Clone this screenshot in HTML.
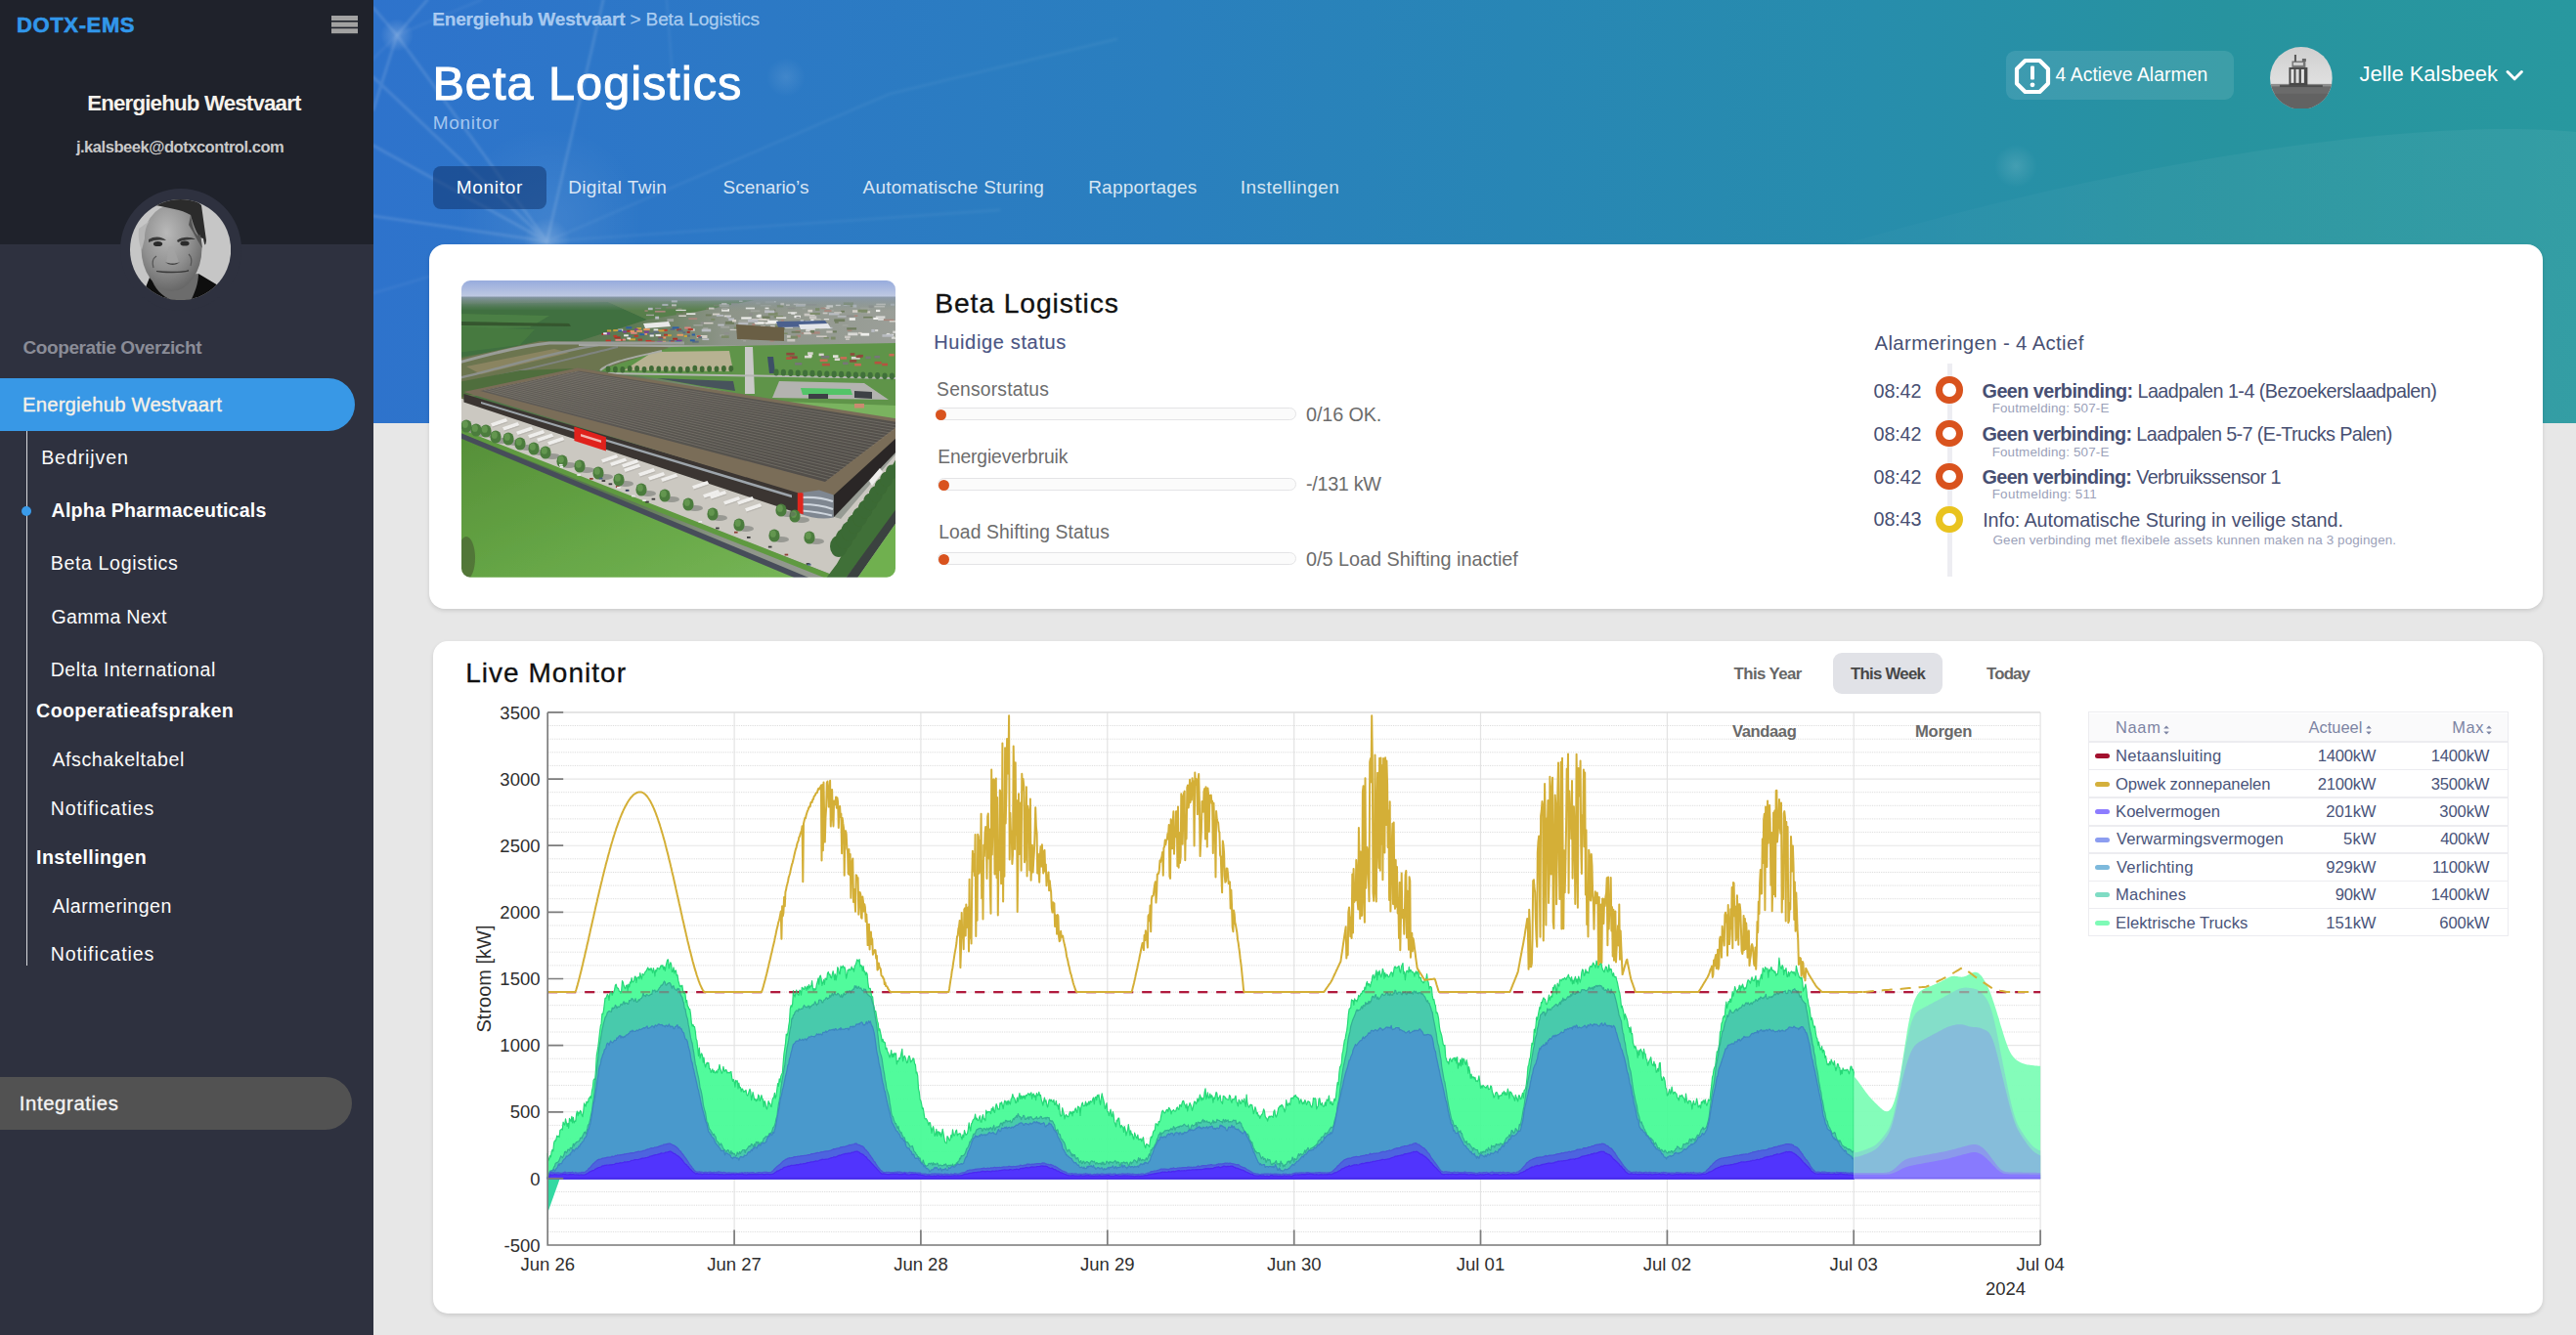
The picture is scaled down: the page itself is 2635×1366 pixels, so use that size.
<!DOCTYPE html>
<html lang="nl"><head><meta charset="utf-8"><title>DOTX-EMS - Beta Logistics Monitor</title>
<style>
html,body{margin:0;padding:0;}
body{width:2635px;height:1366px;overflow:hidden;background:#e7e7e7;font-family:"Liberation Sans",sans-serif;position:relative;}
.t{position:absolute;white-space:nowrap;}
.abs{position:absolute;}
.card{position:absolute;background:#fff;border-radius:15px;box-shadow:0 2px 4px rgba(0,0,0,0.12);}
.bar{position:absolute;height:10.6px;border:1.3px solid #e4e4e6;border-radius:8px;background:#fbfbfb;}
.dot{position:absolute;width:11px;height:11px;border-radius:50%;background:#d9531e;}
.ring{position:absolute;width:13.4px;height:13.4px;border-radius:50%;border:7px solid #d9531e;background:#fff;}
.sw{position:absolute;left:2143px;width:15px;height:5px;border-radius:3px;}
.hl{position:absolute;left:2136px;width:430px;height:1.6px;background:#ececf0;}
</style></head><body>

<div class="abs" style="left:382px;top:0;width:2253px;height:433px;background:linear-gradient(90deg,#2e73cc 0%,#2c79c5 18%,#2a7fbe 36%,#2886b5 52%,#278dac 68%,#27939f 84%,#28989f 100%);overflow:hidden;">
<svg width="2253" height="433" viewBox="0 0 2253 433" style="position:absolute;left:0;top:0">
<defs><radialGradient id="gl"><stop offset="0" stop-color="#fff" stop-opacity="0.22"/><stop offset="1" stop-color="#fff" stop-opacity="0"/></radialGradient>
<linearGradient id="sw1" x1="0" y1="0" x2="1" y2="0"><stop offset="0" stop-color="#fff" stop-opacity="0"/><stop offset="0.6" stop-color="#fff" stop-opacity="0.04"/><stop offset="1" stop-color="#fff" stop-opacity="0.055"/></linearGradient></defs>
<filter id="lb" x="-5%" y="-5%" width="110%" height="110%"><feGaussianBlur stdDeviation="1.1"/></filter><circle cx="180" cy="225" r="95" fill="url(#gl)" opacity="0.4"/><g stroke="#fff" fill="none" stroke-linecap="round" filter="url(#lb)">
<path d="M24,36 L177.5,247 M24,36 L55,0 M24,36 L0,8 M24,36 L0,112 M177.5,247 L235,0 M177.5,247 L0,79 M177.5,247 L0,149 M177.5,247 L0,221" stroke-opacity="0.11" stroke-width="3.2"/>
<path d="M177.5,247 L528,96 L760,40 M177.5,247 L640,215 M24,36 L0,60 M24,36 L110,0 M300,0 L306,80 M177.5,247 L120,433 M177.5,247 L250,433 M177.5,247 L0,300 M177.5,247 L420,433" stroke-opacity="0.045" stroke-width="3"/>
</g>
<circle cx="24" cy="36" r="17" fill="url(#gl)"/><circle cx="177.5" cy="247" r="24" fill="url(#gl)"/><circle cx="422" cy="79" r="20" fill="url(#gl)" opacity="0.45"/><circle cx="1680" cy="170" r="22" fill="url(#gl)" opacity="0.6"/>
<path d="M1470,260 C1800,160 2100,120 2253,135 L2253,433 L1300,433 Z" fill="url(#sw1)"/>
</svg>
</div>
<div class="t" style="left:442.16px;top:9.92px;font-size:19.00px;line-height:19.00px;letter-spacing:-0.151px;color:rgba(214,232,255,0.72);-webkit-text-stroke:0.25px rgba(214,232,255,0.72);"><span style="font-weight:700">Energiehub Westvaart</span><span style="font-weight:400"> &gt; Beta Logistics</span></div>
<div class="t" style="left:442.40px;top:60.96px;font-size:48.60px;line-height:48.60px;letter-spacing:1.033px;color:#fff;-webkit-text-stroke:1.00px #fff;">Beta Logistics</div>
<div class="t" style="left:442.64px;top:116.22px;font-size:19.00px;line-height:19.00px;letter-spacing:0.744px;color:rgba(214,232,255,0.72);">Monitor</div>
<div class="abs" style="left:443px;top:169.5px;width:116px;height:44px;border-radius:8px;background:rgba(16,52,112,0.55);"></div>
<div class="t" style="left:466.68px;top:182.42px;font-size:19.00px;line-height:19.00px;letter-spacing:0.734px;color:#fff;">Monitor</div>
<div class="t" style="left:581.16px;top:182.42px;font-size:19.00px;line-height:19.00px;letter-spacing:0.354px;color:rgba(255,255,255,0.82);">Digital Twin</div>
<div class="t" style="left:739.62px;top:182.42px;font-size:19.00px;line-height:19.00px;letter-spacing:-0.061px;color:rgba(255,255,255,0.82);">Scenario’s</div>
<div class="t" style="left:882.50px;top:182.42px;font-size:19.00px;line-height:19.00px;letter-spacing:0.253px;color:rgba(255,255,255,0.82);">Automatische Sturing</div>
<div class="t" style="left:1113.16px;top:182.42px;font-size:19.00px;line-height:19.00px;letter-spacing:0.242px;color:rgba(255,255,255,0.82);">Rapportages</div>
<div class="t" style="left:1268.72px;top:182.42px;font-size:19.00px;line-height:19.00px;letter-spacing:0.452px;color:rgba(255,255,255,0.82);">Instellingen</div>
<div class="abs" style="left:2052px;top:52px;width:232.5px;height:50px;border-radius:9px;background:rgba(255,255,255,0.10);"></div>
<svg class="abs" style="left:2058px;top:57px" width="42" height="42" viewBox="0 0 42 42">
<polygon points="13.6,5 28.4,5 37,13.6 37,28.4 28.4,37 13.6,37 5,28.4 5,13.6" fill="none" stroke="#fff" stroke-width="4.2" stroke-linejoin="round"/>
<rect x="19" y="10.5" width="4" height="14" rx="1" fill="#fff"/><circle cx="21" cy="29.8" r="2.4" fill="#fff"/></svg>
<div class="t" style="left:2102.52px;top:66.96px;font-size:19.30px;line-height:19.30px;letter-spacing:0.087px;color:#fff;">4 Actieve Alarmen</div>
<div class="t" style="left:2413.54px;top:64.68px;font-size:22.00px;line-height:22.00px;letter-spacing:-0.034px;color:#fff;">Jelle Kalsbeek</div>
<svg class="abs" style="left:2560px;top:68px" width="24" height="18" viewBox="0 0 24 18"><path d="M5,5.5 L12.2,12.8 L19.4,5.5" fill="none" stroke="#fff" stroke-width="3" stroke-linecap="round" stroke-linejoin="round"/></svg>
<svg class="abs" style="left:2321.9px;top:47.7px" width="63.8" height="63.8" viewBox="0 0 64 64">
<defs><clipPath id="uc"><circle cx="32" cy="32" r="32"/></clipPath><linearGradient id="usky" x1="0" y1="0" x2="0" y2="1"><stop offset="0" stop-color="#cfcfcf"/><stop offset="1" stop-color="#ececec"/></linearGradient></defs>
<g clip-path="url(#uc)"><rect width="64" height="64" fill="url(#usky)"/>
<rect x="0" y="39.5" width="64" height="25" fill="#6b6b6b"/><rect x="0" y="38" width="64" height="2.5" fill="#8d8d8d"/><rect x="0" y="48" width="64" height="16" fill="#5c5c5c" opacity="0.6"/>
<rect x="19.5" y="21" width="19" height="18.5" fill="#4a4a4a"/><rect x="21.5" y="23" width="3" height="14" fill="#e4e4e4"/><rect x="26.5" y="23" width="3.2" height="14" fill="#dcdcdc"/><rect x="32" y="23" width="3" height="14" fill="#e4e4e4"/>
<rect x="22.5" y="14.5" width="14" height="6.5" fill="#777"/><rect x="24" y="16" width="10" height="3" fill="#d0d0d0"/><rect x="25" y="8" width="2" height="7" fill="#555"/><rect x="33" y="12" width="4" height="3" fill="#666"/>
<rect x="10" y="39" width="44" height="2.2" fill="#3e3e3e" opacity="0.7"/>
</g></svg>
<div class="abs" style="left:0;top:0;width:382px;height:1366px;background:#2e313f;"></div>
<div class="abs" style="left:0;top:0;width:382px;height:250px;background:#1f222b;"></div>
<div class="t" style="left:17.10px;top:14.98px;font-size:22.00px;line-height:22.00px;letter-spacing:0.612px;font-weight:700;color:#3197ea;-webkit-text-stroke:0.60px #3197ea;">DOTX-EMS</div>
<div class="abs" style="left:339px;top:16px;width:27px;height:5px;background:#a2a2a2;box-shadow:0 6.6px 0 #a2a2a2,0 13.2px 0 #a2a2a2;"></div>
<div class="t" style="left:89.18px;top:95.12px;font-size:22.30px;line-height:22.30px;letter-spacing:-0.828px;font-weight:700;color:#f6f2ec;">Energiehub Westvaart</div>
<div class="t" style="left:77.92px;top:142.65px;font-size:16.60px;line-height:16.60px;letter-spacing:-0.504px;font-weight:700;color:#c9c9c9;">j.kalsbeek@dotxcontrol.com</div>
<div class="abs" style="left:122.5px;top:193px;width:124.5px;height:124.5px;border-radius:50%;background:#2e313f;"></div>
<svg class="abs" style="left:132.9px;top:203.6px" width="103.2" height="103.2" viewBox="0 0 103.2 103.2">
<defs><clipPath id="fc"><circle cx="51.6" cy="51.6" r="51.6"/></clipPath>
<radialGradient id="fg" cx="0.42" cy="0.32" r="0.75"><stop offset="0" stop-color="#b9b9b9"/><stop offset="0.55" stop-color="#909090"/><stop offset="1" stop-color="#5e5e5e"/></radialGradient></defs>
<g clip-path="url(#fc)"><rect width="104" height="104" fill="#c6c6c6"/>
<path d="M14,95 L20,80 L40,90 L60,96 L70,76 L90,88 L104,92 L104,104 L0,104 Z" fill="#0e0e0e"/>
<path d="M22,80 C24,92 36,102 46,104 L62,104 C66,96 70,86 70,76 Z" fill="#6c6c6c"/>
<ellipse cx="42.5" cy="50" rx="31" ry="44" fill="url(#fg)"/>
<path d="M9,30 C8,40 10,48 12,52 L15,40 C15,32 17,26 20,22 Z" fill="#b5b5b5"/>
<path d="M26,6 C40,-3 66,-3 73,6 L78,42 C77,50 76,46 75,40 C70,40 66,30 62,16 C52,10 40,9 26,6 Z" fill="#2b2b2b"/>
<path d="M62,16 C64,30 68,40 72,36 L74,50 C70,44 66,36 60,26 Z" fill="#555"/>
<path d="M19,41 C25,37 33,38 37,42 C31,41 25,41 19,44 Z" fill="#3a3a3a"/><path d="M48,42 C53,38 62,38 67,41 C61,41 55,41 49,44 Z" fill="#3a3a3a"/>
<ellipse cx="28.5" cy="45.5" rx="4.6" ry="2.6" fill="#2a2a2a"/><ellipse cx="56" cy="45" rx="4.6" ry="2.6" fill="#2a2a2a"/>
<path d="M40,48 L37,64 C40,67 46,67 50,64 L44,48 Z" fill="#a4a4a4" opacity="0.7"/><path d="M36,64 C40,68 47,68 51,64 C47,66 40,66 36,64Z" fill="#444"/>
<path d="M27,73.5 C35,75.2 52,75.2 60,73 C52,74.6 35,74.6 27,73.5 Z" fill="#383838" stroke="#383838" stroke-width="1.1"/>
<path d="M24,70 C22,64 24,60 27,58" stroke="#555" stroke-width="1.2" fill="none"/><path d="M62,68 C64,62 62,58 60,56" stroke="#555" stroke-width="1.2" fill="none"/>
</g></svg>
<div class="t" style="left:23.58px;top:345.52px;font-size:19.00px;line-height:19.00px;letter-spacing:-0.430px;font-weight:700;color:#8a8c97;">Cooperatie Overzicht</div>
<div class="abs" style="left:0;top:386.7px;width:362.7px;height:54px;border-radius:0 27px 27px 0;background:#3898e6;"></div>
<div class="t" style="left:23.06px;top:403.82px;font-size:20.30px;line-height:20.30px;letter-spacing:0.182px;color:#f6f1e8;-webkit-text-stroke:0.35px #f6f1e8;">Energiehub Westvaart</div>
<div class="abs" style="left:26.6px;top:440.7px;width:1.4px;height:547.2px;background:#d8d9dd;"></div>
<div class="abs" style="left:22.4px;top:518px;width:10px;height:10px;border-radius:50%;background:#3a9bea;"></div>
<div class="t" style="left:42.18px;top:459.21px;font-size:19.60px;line-height:19.60px;letter-spacing:0.873px;color:#fbfbfb;">Bedrijven</div>
<div class="t" style="left:52.60px;top:512.61px;font-size:19.60px;line-height:19.60px;letter-spacing:0.205px;font-weight:700;color:#fff;">Alpha Pharmaceuticals</div>
<div class="t" style="left:51.70px;top:567.11px;font-size:19.60px;line-height:19.60px;letter-spacing:0.629px;color:#fbfbfb;">Beta Logistics</div>
<div class="t" style="left:52.60px;top:621.61px;font-size:19.60px;line-height:19.60px;letter-spacing:0.272px;color:#fbfbfb;">Gamma Next</div>
<div class="t" style="left:51.70px;top:675.51px;font-size:19.60px;line-height:19.60px;letter-spacing:0.534px;color:#fbfbfb;">Delta International</div>
<div class="t" style="left:37.12px;top:717.91px;font-size:19.60px;line-height:19.60px;letter-spacing:0.373px;font-weight:700;color:#fff;">Cooperatieafspraken</div>
<div class="t" style="left:53.48px;top:767.51px;font-size:19.60px;line-height:19.60px;letter-spacing:0.568px;color:#fbfbfb;">Afschakeltabel</div>
<div class="t" style="left:51.68px;top:818.41px;font-size:19.60px;line-height:19.60px;letter-spacing:0.897px;color:#fbfbfb;">Notificaties</div>
<div class="t" style="left:37.10px;top:868.11px;font-size:19.60px;line-height:19.60px;letter-spacing:0.349px;font-weight:700;color:#fff;">Instellingen</div>
<div class="t" style="left:53.48px;top:918.11px;font-size:19.60px;line-height:19.60px;letter-spacing:0.481px;color:#fbfbfb;">Alarmeringen</div>
<div class="t" style="left:51.68px;top:966.71px;font-size:19.60px;line-height:19.60px;letter-spacing:0.897px;color:#fbfbfb;">Notificaties</div>
<div class="abs" style="left:0;top:1101.5px;width:359.7px;height:54px;border-radius:0 27px 27px 0;background:#525252;"></div>
<div class="t" style="left:19.70px;top:1118.62px;font-size:20.30px;line-height:20.30px;letter-spacing:0.643px;color:#f4f4f4;-webkit-text-stroke:0.35px #f4f4f4;">Integraties</div>
<div class="card" style="left:438.8px;top:249.8px;width:2162.3px;height:373.2px;border-radius:16px;"></div>
<svg class="abs" style="left:472px;top:287.2px" width="444" height="303.7" viewBox="0 0 444 303.7">
<defs><clipPath id="wc"><rect width="444" height="303.7" rx="9" ry="9"/></clipPath><filter id="wb" x="-2%" y="-2%" width="104%" height="104%"><feGaussianBlur stdDeviation="0.55"/></filter><linearGradient id="wsky" x1="0" y1="0" x2="0" y2="1"><stop offset="0" stop-color="#90a6dc"/><stop offset="1" stop-color="#bfc9e2"/></linearGradient><linearGradient id="wland" x1="0" y1="0" x2="1" y2="0"><stop offset="0" stop-color="#4a7442"/><stop offset="0.4" stop-color="#5f7a54"/><stop offset="0.6" stop-color="#8d9488"/><stop offset="1" stop-color="#9b9f99"/></linearGradient><linearGradient id="whaze" x1="0" y1="0" x2="0" y2="1"><stop offset="0" stop-color="#8d9bb5"/><stop offset="1" stop-color="#7d8f86" stop-opacity="0"/></linearGradient><linearGradient id="wgr" x1="0" y1="0" x2="1" y2="1"><stop offset="0" stop-color="#568f38"/><stop offset="0.55" stop-color="#66a646"/><stop offset="1" stop-color="#76b556"/></linearGradient><linearGradient id="wroof" x1="0" y1="0" x2="1" y2="1"><stop offset="0" stop-color="#625e58"/><stop offset="1" stop-color="#4f4c48"/></linearGradient></defs>
<g clip-path="url(#wc)"><g filter="url(#wb)">
<rect x="-3" y="-3" width="450" height="310" fill="url(#wland)"/>
<polygon points="-3.0,24.0 150.0,22.0 190.0,40.0 120.0,62.0 -3.0,78.0" fill="#3f6f3f"/>
<polygon points="-3.0,34.0 90.0,36.0 70.0,48.0 -3.0,50.0" fill="#4b7f45"/>
<polygon points="-3.0,47.0 75.0,50.0 60.0,66.0 -3.0,74.0" fill="#467a40"/>
<polygon points="-3.0,42.0 110.0,44.0 112.0,47.0 -3.0,46.0" fill="#34562f"/>
<polygon points="150.0,22.0 300.0,20.0 240.0,32.0 190.0,40.0" fill="#587f4c"/>
<rect x="303.1" y="42.4" width="10.4" height="2.0" fill="#d3cfc8"/>
<rect x="408.2" y="27.6" width="9.4" height="2.1" fill="#a0a49d"/>
<rect x="392.0" y="23.8" width="5.4" height="1.4" fill="#d9d9d6"/>
<rect x="340.4" y="35.8" width="6.6" height="2.5" fill="#efefec"/>
<rect x="347.6" y="53.3" width="3.5" height="1.3" fill="#a9867c"/>
<rect x="341.5" y="51.1" width="5.6" height="2.3" fill="#a9867c"/>
<rect x="320.5" y="45.6" width="7.0" height="2.4" fill="#7b8a68"/>
<rect x="355.9" y="36.3" width="7.4" height="2.9" fill="#c9c7c2"/>
<rect x="369.7" y="32.6" width="4.8" height="1.7" fill="#c9c7c2"/>
<rect x="332.0" y="24.3" width="3.9" height="1.7" fill="#c9c7c2"/>
<rect x="435.0" y="53.9" width="3.0" height="1.6" fill="#d9d9d6"/>
<rect x="307.7" y="59.2" width="6.2" height="1.3" fill="#a9867c"/>
<rect x="388.2" y="30.8" width="3.7" height="1.8" fill="#6f7d5e"/>
<rect x="382.8" y="24.7" width="5.0" height="1.4" fill="#d9d9d6"/>
<rect x="306.3" y="39.5" width="8.5" height="1.5" fill="#d3cfc8"/>
<rect x="234.8" y="49.3" width="4.0" height="2.4" fill="#c9c7c2"/>
<rect x="288.1" y="59.6" width="3.0" height="2.8" fill="#a0a49d"/>
<rect x="264.4" y="55.4" width="4.7" height="1.9" fill="#a0a49d"/>
<rect x="352.5" y="24.0" width="10.9" height="1.6" fill="#8e8f8c"/>
<rect x="401.7" y="35.4" width="3.6" height="1.6" fill="#a9867c"/>
<rect x="189.0" y="34.7" width="8.0" height="1.4" fill="#a0a49d"/>
<rect x="311.3" y="43.0" width="9.9" height="1.5" fill="#efefec"/>
<rect x="266.1" y="29.1" width="7.9" height="2.5" fill="#efefec"/>
<rect x="378.0" y="57.6" width="4.6" height="2.9" fill="#7b8a68"/>
<rect x="342.5" y="36.9" width="3.8" height="1.3" fill="#8e8f8c"/>
<rect x="247.2" y="48.2" width="5.1" height="2.7" fill="#a0a49d"/>
<rect x="313.2" y="40.8" width="10.4" height="3.0" fill="#efefec"/>
<rect x="244.6" y="42.4" width="9.8" height="2.3" fill="#8e8f8c"/>
<rect x="240.4" y="56.6" width="9.0" height="1.3" fill="#6f7d5e"/>
<rect x="301.3" y="22.4" width="4.4" height="1.9" fill="#a0a49d"/>
<rect x="439.0" y="23.7" width="4.1" height="2.0" fill="#b9bcc2"/>
<rect x="356.5" y="47.6" width="7.7" height="1.5" fill="#d9d9d6"/>
<rect x="426.1" y="39.0" width="5.9" height="1.8" fill="#d9d9d6"/>
<rect x="310.9" y="49.2" width="5.6" height="3.0" fill="#c9c7c2"/>
<rect x="303.3" y="34.7" width="3.4" height="2.9" fill="#efefec"/>
<rect x="392.0" y="56.6" width="5.8" height="2.4" fill="#c9c7c2"/>
<rect x="412.4" y="36.7" width="9.3" height="2.8" fill="#a0a49d"/>
<rect x="284.0" y="20.5" width="3.6" height="1.4" fill="#c9c7c2"/>
<rect x="444.3" y="55.2" width="8.8" height="1.9" fill="#a0a49d"/>
<rect x="304.5" y="38.5" width="7.3" height="2.1" fill="#d3cfc8"/>
<rect x="310.5" y="29.2" width="8.6" height="2.1" fill="#a0a49d"/>
<rect x="357.3" y="39.5" width="10.2" height="1.9" fill="#efefec"/>
<rect x="362.0" y="28.1" width="4.4" height="2.8" fill="#7b8a68"/>
<rect x="315.1" y="29.7" width="6.2" height="1.7" fill="#6f7d5e"/>
<rect x="394.8" y="50.2" width="4.6" height="1.6" fill="#a9867c"/>
<rect x="337.2" y="32.7" width="4.1" height="2.1" fill="#d9d9d6"/>
<rect x="370.6" y="58.0" width="5.2" height="1.5" fill="#7b8a68"/>
<rect x="308.0" y="57.0" width="9.6" height="1.9" fill="#d3cfc8"/>
<rect x="313.9" y="32.6" width="9.7" height="3.0" fill="#7b8a68"/>
<rect x="268.6" y="53.1" width="5.2" height="2.3" fill="#8e8f8c"/>
<rect x="333.9" y="32.4" width="9.3" height="1.2" fill="#efefec"/>
<rect x="290.8" y="27.6" width="9.2" height="1.7" fill="#efefec"/>
<rect x="393.0" y="59.4" width="3.9" height="1.4" fill="#d3cfc8"/>
<rect x="356.0" y="52.3" width="10.7" height="2.4" fill="#a9867c"/>
<rect x="400.0" y="30.2" width="8.7" height="2.6" fill="#d3cfc8"/>
<rect x="371.4" y="27.2" width="5.2" height="1.8" fill="#d3cfc8"/>
<rect x="315.6" y="59.9" width="4.3" height="2.7" fill="#a9867c"/>
<rect x="373.5" y="25.2" width="6.6" height="2.3" fill="#d9d9d6"/>
<rect x="283.3" y="42.8" width="10.0" height="2.6" fill="#b9bcc2"/>
<rect x="306.0" y="46.1" width="4.6" height="2.5" fill="#c9c7c2"/>
<rect x="240.7" y="56.0" width="10.8" height="3.0" fill="#d3cfc8"/>
<rect x="439.9" y="57.3" width="5.1" height="2.5" fill="#d9d9d6"/>
<rect x="276.0" y="23.3" width="6.5" height="2.2" fill="#8e8f8c"/>
<rect x="312.2" y="21.1" width="9.5" height="1.3" fill="#d9d9d6"/>
<rect x="230.1" y="33.4" width="9.3" height="1.5" fill="#efefec"/>
<rect x="446.0" y="56.0" width="7.1" height="2.4" fill="#7b8a68"/>
<rect x="431.8" y="39.7" width="10.6" height="1.4" fill="#a9867c"/>
<rect x="299.7" y="42.4" width="9.6" height="2.2" fill="#efefec"/>
<rect x="321.4" y="53.7" width="7.5" height="1.8" fill="#6f7d5e"/>
<rect x="434.2" y="54.8" width="7.9" height="1.7" fill="#efefec"/>
<rect x="437.8" y="41.0" width="7.6" height="1.6" fill="#d3cfc8"/>
<rect x="214.8" y="20.2" width="6.0" height="2.2" fill="#d9d9d6"/>
<rect x="319.7" y="36.0" width="9.4" height="2.2" fill="#7b8a68"/>
<rect x="209.3" y="26.7" width="10.4" height="2.0" fill="#6f7d5e"/>
<rect x="255.3" y="38.9" width="4.0" height="2.0" fill="#7b8a68"/>
<rect x="322.0" y="24.3" width="6.4" height="1.3" fill="#8e8f8c"/>
<rect x="190.9" y="27.8" width="4.8" height="2.4" fill="#b9bcc2"/>
<rect x="373.9" y="29.8" width="7.0" height="2.1" fill="#a0a49d"/>
<rect x="250.4" y="27.9" width="7.2" height="2.0" fill="#6f7d5e"/>
<rect x="350.2" y="53.0" width="7.9" height="2.2" fill="#d3cfc8"/>
<rect x="351.6" y="41.2" width="9.8" height="2.3" fill="#efefec"/>
<rect x="245.7" y="49.6" width="9.5" height="2.8" fill="#b9bcc2"/>
<rect x="342.4" y="55.6" width="4.6" height="2.6" fill="#a9867c"/>
<rect x="416.6" y="25.4" width="4.9" height="2.5" fill="#8e8f8c"/>
<rect x="286.2" y="37.4" width="10.5" height="2.2" fill="#efefec"/>
<rect x="237.4" y="45.1" width="9.4" height="1.4" fill="#a0a49d"/>
<rect x="363.1" y="56.5" width="10.7" height="1.4" fill="#d3cfc8"/>
<rect x="350.6" y="33.7" width="11.0" height="2.7" fill="#c9c7c2"/>
<rect x="310.8" y="21.0" width="9.1" height="2.3" fill="#a0a49d"/>
<rect x="310.6" y="27.6" width="3.9" height="1.5" fill="#efefec"/>
<rect x="443.5" y="57.1" width="3.8" height="1.3" fill="#7b8a68"/>
<rect x="205.3" y="23.9" width="6.1" height="2.0" fill="#b9bcc2"/>
<rect x="297.3" y="44.0" width="3.1" height="2.5" fill="#a9867c"/>
<rect x="232.3" y="38.2" width="8.9" height="1.9" fill="#a9867c"/>
<rect x="342.9" y="23.8" width="9.3" height="1.8" fill="#c9c7c2"/>
<rect x="394.2" y="48.2" width="9.9" height="2.3" fill="#6f7d5e"/>
<rect x="333.7" y="27.6" width="7.7" height="1.8" fill="#8e8f8c"/>
<rect x="258.0" y="24.7" width="8.9" height="1.5" fill="#6f7d5e"/>
<rect x="219.8" y="33.2" width="7.3" height="1.9" fill="#6f7d5e"/>
<rect x="384.7" y="36.2" width="8.8" height="1.3" fill="#b9bcc2"/>
<rect x="263.7" y="24.0" width="10.1" height="3.0" fill="#a0a49d"/>
<rect x="197.9" y="30.9" width="10.7" height="1.7" fill="#a9867c"/>
<rect x="357.2" y="42.8" width="7.3" height="1.9" fill="#7b8a68"/>
<rect x="352.6" y="48.1" width="9.1" height="3.0" fill="#d9d9d6"/>
<rect x="215.0" y="24.3" width="4.9" height="2.0" fill="#d3cfc8"/>
<rect x="198.2" y="27.8" width="6.0" height="1.4" fill="#8e8f8c"/>
<rect x="257.0" y="33.6" width="7.3" height="1.9" fill="#d3cfc8"/>
<rect x="333.2" y="59.8" width="8.1" height="2.7" fill="#c9c7c2"/>
<rect x="328.4" y="46.7" width="10.6" height="1.9" fill="#efefec"/>
<rect x="285.7" y="58.8" width="9.8" height="2.2" fill="#a0a49d"/>
<rect x="294.8" y="41.1" width="7.8" height="1.9" fill="#8e8f8c"/>
<rect x="311.1" y="30.8" width="10.4" height="2.4" fill="#8e8f8c"/>
<rect x="337.9" y="45.3" width="6.3" height="2.4" fill="#d9d9d6"/>
<rect x="419.3" y="49.9" width="3.4" height="3.0" fill="#b9bcc2"/>
<rect x="297.1" y="39.1" width="10.8" height="1.6" fill="#d3cfc8"/>
<rect x="422.4" y="25.8" width="10.7" height="1.6" fill="#c9c7c2"/>
<rect x="198.2" y="36.7" width="3.9" height="2.8" fill="#b9bcc2"/>
<rect x="322.8" y="25.0" width="6.5" height="2.4" fill="#7b8a68"/>
<rect x="341.9" y="45.6" width="8.5" height="1.9" fill="#d3cfc8"/>
<rect x="397.7" y="25.5" width="5.3" height="1.4" fill="#7b8a68"/>
<rect x="389.7" y="45.0" width="5.9" height="1.7" fill="#a0a49d"/>
<rect x="367.4" y="27.6" width="5.2" height="1.6" fill="#a9867c"/>
<rect x="316.1" y="46.1" width="4.6" height="2.4" fill="#d9d9d6"/>
<rect x="187.5" y="30.4" width="3.2" height="1.3" fill="#a9867c"/>
<rect x="326.4" y="22.9" width="3.7" height="2.4" fill="#d3cfc8"/>
<rect x="246.3" y="59.3" width="6.9" height="1.8" fill="#b9bcc2"/>
<rect x="274.7" y="49.8" width="9.7" height="1.3" fill="#c9c7c2"/>
<rect x="301.7" y="52.9" width="9.7" height="2.6" fill="#7b8a68"/>
<rect x="295.8" y="30.3" width="9.5" height="1.9" fill="#a0a49d"/>
<rect x="269.9" y="41.9" width="9.0" height="2.9" fill="#6f7d5e"/>
<rect x="355.6" y="43.2" width="6.7" height="1.8" fill="#d3cfc8"/>
<rect x="311.5" y="47.4" width="5.4" height="2.6" fill="#c9c7c2"/>
<rect x="265.9" y="56.4" width="7.8" height="2.5" fill="#7b8a68"/>
<rect x="374.2" y="47.8" width="5.3" height="1.5" fill="#b9bcc2"/>
<rect x="356.5" y="33.1" width="10.3" height="1.8" fill="#7b8a68"/>
<rect x="333.6" y="56.7" width="10.5" height="2.8" fill="#7b8a68"/>
<rect x="323.4" y="59.7" width="6.7" height="1.6" fill="#d3cfc8"/>
<rect x="249.8" y="34.5" width="5.9" height="1.9" fill="#6f7d5e"/>
<rect x="337.6" y="51.8" width="8.9" height="1.9" fill="#6f7d5e"/>
<rect x="326.1" y="53.5" width="7.5" height="1.5" fill="#7b8a68"/>
<rect x="414.9" y="31.3" width="3.2" height="2.1" fill="#d3cfc8"/>
<rect x="226.4" y="31.8" width="3.2" height="2.7" fill="#6f7d5e"/>
<rect x="390.7" y="23.4" width="3.7" height="2.5" fill="#b9bcc2"/>
<rect x="354.4" y="29.8" width="4.8" height="2.6" fill="#d3cfc8"/>
<rect x="273.3" y="38.4" width="5.8" height="2.7" fill="#b9bcc2"/>
<rect x="360.5" y="39.7" width="7.3" height="2.5" fill="#a0a49d"/>
<rect x="423.8" y="36.4" width="9.6" height="2.4" fill="#d9d9d6"/>
<rect x="395.3" y="53.4" width="10.1" height="2.9" fill="#d9d9d6"/>
<rect x="321.7" y="48.4" width="9.4" height="2.0" fill="#6f7d5e"/>
<rect x="424.0" y="29.8" width="4.3" height="2.3" fill="#efefec"/>
<rect x="268.7" y="35.6" width="7.2" height="1.7" fill="#d9d9d6"/>
<rect x="308.0" y="49.2" width="5.4" height="1.5" fill="#efefec"/>
<rect x="423.1" y="50.1" width="3.1" height="2.1" fill="#d9d9d6"/>
<rect x="266.6" y="27.9" width="5.9" height="2.3" fill="#a0a49d"/>
<rect x="372.2" y="43.8" width="4.8" height="1.5" fill="#8e8f8c"/>
<rect x="290.0" y="56.4" width="10.5" height="2.3" fill="#d3cfc8"/>
<rect x="310.1" y="30.4" width="10.1" height="2.8" fill="#b9bcc2"/>
<rect x="357.3" y="50.9" width="3.7" height="2.8" fill="#6f7d5e"/>
<rect x="394.2" y="35.4" width="7.2" height="2.1" fill="#8e8f8c"/>
<rect x="390.6" y="22.3" width="10.4" height="2.8" fill="#7b8a68"/>
<rect x="421.3" y="38.0" width="5.0" height="2.0" fill="#efefec"/>
<rect x="293.5" y="50.9" width="4.2" height="2.8" fill="#d3cfc8"/>
<rect x="346.7" y="40.6" width="3.4" height="2.2" fill="#efefec"/>
<rect x="405.9" y="52.9" width="3.7" height="1.7" fill="#d3cfc8"/>
<rect x="210.4" y="39.2" width="6.7" height="2.9" fill="#a0a49d"/>
<rect x="326.8" y="40.2" width="3.2" height="1.5" fill="#a9867c"/>
<rect x="424.3" y="23.6" width="9.6" height="1.6" fill="#d3cfc8"/>
<rect x="292.8" y="39.8" width="10.6" height="2.9" fill="#b9bcc2"/>
<rect x="266.1" y="23.0" width="5.4" height="2.0" fill="#c9c7c2"/>
<rect x="278.9" y="47.5" width="3.8" height="1.9" fill="#7b8a68"/>
<rect x="379.9" y="51.4" width="4.0" height="2.0" fill="#6f7d5e"/>
<rect x="370.8" y="39.0" width="5.3" height="1.4" fill="#d9d9d6"/>
<rect x="408.4" y="53.8" width="8.8" height="2.8" fill="#efefec"/>
<rect x="260.8" y="35.0" width="7.3" height="1.7" fill="#b9bcc2"/>
<rect x="382.0" y="42.2" width="3.7" height="1.5" fill="#6f7d5e"/>
<rect x="375.9" y="33.2" width="10.6" height="2.2" fill="#b9bcc2"/>
<rect x="301.6" y="35.3" width="3.8" height="2.3" fill="#efefec"/>
<rect x="361.9" y="48.3" width="4.4" height="1.9" fill="#7b8a68"/>
<rect x="339.7" y="23.6" width="4.8" height="1.5" fill="#c9c7c2"/>
<rect x="298.2" y="50.8" width="5.7" height="2.7" fill="#d3cfc8"/>
<rect x="221.3" y="28.2" width="4.2" height="2.4" fill="#7b8a68"/>
<rect x="271.5" y="36.5" width="3.1" height="1.9" fill="#b9bcc2"/>
<rect x="441.3" y="51.6" width="8.3" height="2.3" fill="#d9d9d6"/>
<rect x="253.0" y="27.6" width="5.5" height="2.0" fill="#d3cfc8"/>
<rect x="283.6" y="40.4" width="9.3" height="2.7" fill="#a0a49d"/>
<rect x="371.2" y="30.2" width="7.3" height="1.7" fill="#a9867c"/>
<rect x="277.0" y="40.0" width="4.1" height="2.5" fill="#d3cfc8"/>
<rect x="445.6" y="48.3" width="10.5" height="2.2" fill="#d9d9d6"/>
<rect x="348.7" y="27.9" width="3.7" height="1.6" fill="#a0a49d"/>
<rect x="294.0" y="33.3" width="3.7" height="2.8" fill="#8e8f8c"/>
<rect x="305.9" y="25.0" width="10.8" height="1.4" fill="#a0a49d"/>
<rect x="326.8" y="42.4" width="7.5" height="1.7" fill="#b9bcc2"/>
<rect x="342.0" y="24.9" width="9.6" height="1.7" fill="#b9bcc2"/>
<rect x="247.9" y="42.9" width="9.6" height="1.5" fill="#d3cfc8"/>
<rect x="396.7" y="38.2" width="6.2" height="2.6" fill="#efefec"/>
<rect x="265.3" y="46.8" width="8.9" height="1.9" fill="#a0a49d"/>
<rect x="352.1" y="50.5" width="4.3" height="1.9" fill="#d9d9d6"/>
<rect x="222.3" y="35.5" width="7.6" height="1.5" fill="#d3cfc8"/>
<rect x="219.3" y="29.8" width="10.5" height="1.3" fill="#d9d9d6"/>
<rect x="373.3" y="51.5" width="6.2" height="2.1" fill="#c9c7c2"/>
<rect x="307.6" y="36.5" width="8.0" height="2.4" fill="#6f7d5e"/>
<rect x="381.2" y="39.4" width="11.0" height="2.7" fill="#6f7d5e"/>
<rect x="400.4" y="24.7" width="3.9" height="2.9" fill="#b9bcc2"/>
<rect x="322.0" y="37.3" width="10.2" height="1.8" fill="#d9d9d6"/>
<rect x="262.3" y="44.6" width="6.5" height="1.9" fill="#b9bcc2"/>
<rect x="381.2" y="32.2" width="7.7" height="1.3" fill="#c9c7c2"/>
<rect x="405.4" y="29.7" width="10.0" height="3.0" fill="#7b8a68"/>
<rect x="366.4" y="41.0" width="4.9" height="1.8" fill="#6f7d5e"/>
<rect x="430.4" y="55.2" width="11.0" height="2.5" fill="#b9bcc2"/>
<rect x="411.2" y="36.9" width="9.4" height="1.6" fill="#6f7d5e"/>
<rect x="332.9" y="56.1" width="3.8" height="2.6" fill="#c9c7c2"/>
<polygon points="322.0,42.0 372.0,41.0 376.0,47.0 324.0,48.0" fill="#4c618e"/>
<polygon points="345.0,45.0 375.0,44.0 378.0,49.0 347.0,50.0" fill="#e4e6ea"/>
<polygon points="281.0,45.0 330.0,48.0 330.0,62.0 282.0,60.0" fill="#6a5e45"/>
<rect x="230.9" y="55.6" width="3.0" height="2" fill="#5d6d7e"/>
<rect x="165.1" y="51.5" width="3.7" height="2" fill="#7d3c98"/>
<rect x="185.4" y="53.8" width="4.6" height="2" fill="#e59866"/>
<rect x="176.7" y="55.8" width="4.2" height="2" fill="#c0392b"/>
<rect x="186.9" y="51.7" width="5.0" height="2" fill="#7d3c98"/>
<rect x="236.2" y="61.7" width="6.5" height="2" fill="#5d6d7e"/>
<rect x="160.9" y="59.9" width="3.8" height="2" fill="#c0392b"/>
<rect x="226.3" y="52.3" width="3.1" height="2" fill="#5d6d7e"/>
<rect x="205.4" y="57.5" width="3.8" height="2" fill="#e59866"/>
<rect x="205.1" y="49.9" width="5.6" height="2" fill="#c0392b"/>
<rect x="171.5" y="59.3" width="6.5" height="2" fill="#c7a13a"/>
<rect x="213.5" y="49.0" width="4.7" height="2" fill="#5d6d7e"/>
<rect x="157.4" y="59.9" width="5.8" height="2" fill="#d98880"/>
<rect x="160.2" y="49.7" width="5.0" height="2" fill="#e8e8e8"/>
<rect x="170.4" y="51.1" width="6.5" height="2" fill="#e59866"/>
<rect x="200.8" y="50.4" width="6.6" height="2" fill="#c7a13a"/>
<rect x="158.6" y="50.4" width="5.6" height="2" fill="#2e5fa3"/>
<rect x="149.3" y="61.7" width="6.7" height="2" fill="#5d6d7e"/>
<rect x="147.6" y="60.6" width="5.4" height="2" fill="#c0392b"/>
<rect x="169.3" y="50.8" width="3.3" height="2" fill="#a93226"/>
<rect x="169.4" y="58.3" width="3.7" height="2" fill="#e8e8e8"/>
<rect x="215.6" y="47.4" width="7.0" height="2" fill="#2e5fa3"/>
<rect x="143.5" y="53.9" width="4.5" height="2" fill="#a93226"/>
<rect x="235.7" y="54.5" width="3.3" height="2" fill="#2e5fa3"/>
<rect x="220.0" y="60.6" width="5.6" height="2" fill="#7d3c98"/>
<rect x="220.6" y="54.8" width="6.3" height="2" fill="#e59866"/>
<rect x="205.4" y="61.8" width="3.7" height="2" fill="#e59866"/>
<rect x="220.3" y="49.5" width="4.7" height="2" fill="#a93226"/>
<rect x="208.8" y="55.2" width="6.1" height="2" fill="#c7a13a"/>
<rect x="221.5" y="50.5" width="5.2" height="2" fill="#5d6d7e"/>
<rect x="227.8" y="56.0" width="3.1" height="2" fill="#c7a13a"/>
<rect x="201.5" y="57.7" width="4.8" height="2" fill="#a93226"/>
<rect x="230.7" y="51.9" width="3.1" height="2" fill="#a93226"/>
<rect x="191.1" y="53.5" width="5.9" height="2" fill="#5d6d7e"/>
<rect x="228.2" y="47.5" width="6.6" height="2" fill="#d98880"/>
<rect x="198.6" y="55.1" width="5.5" height="2" fill="#e8e8e8"/>
<rect x="145.6" y="53.4" width="6.3" height="2" fill="#7d3c98"/>
<rect x="216.1" y="58.7" width="5.0" height="2" fill="#a93226"/>
<rect x="207.0" y="54.7" width="4.0" height="2" fill="#b03a2e"/>
<rect x="156.5" y="57.4" width="6.1" height="2" fill="#a93226"/>
<rect x="146.3" y="53.2" width="5.8" height="2" fill="#7d3c98"/>
<rect x="212.5" y="61.4" width="5.0" height="2" fill="#2e5fa3"/>
<rect x="218.4" y="61.8" width="6.0" height="2" fill="#2e5fa3"/>
<rect x="193.7" y="61.8" width="4.0" height="2" fill="#c0392b"/>
<rect x="231.7" y="49.1" width="5.2" height="2" fill="#b03a2e"/>
<rect x="188.6" y="61.0" width="5.7" height="2" fill="#c0392b"/>
<rect x="213.9" y="61.6" width="3.9" height="2" fill="#a93226"/>
<rect x="166.1" y="55.3" width="4.7" height="2" fill="#e8e8e8"/>
<rect x="148.9" y="50.4" width="4.3" height="2" fill="#c7a13a"/>
<rect x="241.1" y="56.2" width="3.6" height="2" fill="#c0392b"/>
<rect x="200.3" y="61.9" width="5.3" height="2" fill="#7d3c98"/>
<rect x="233.9" y="60.3" width="4.9" height="2" fill="#2e5fa3"/>
<rect x="180.5" y="59.6" width="4.5" height="2" fill="#b03a2e"/>
<rect x="145.1" y="53.3" width="3.7" height="2" fill="#e8e8e8"/>
<rect x="196.6" y="49.5" width="4.6" height="2" fill="#e8e8e8"/>
<rect x="201.2" y="58.4" width="4.8" height="2" fill="#5d6d7e"/>
<rect x="242.3" y="57.2" width="3.8" height="2" fill="#5d6d7e"/>
<rect x="179.4" y="48.1" width="4.5" height="2" fill="#c7a13a"/>
<rect x="168.3" y="47.3" width="6.0" height="2" fill="#2e5fa3"/>
<rect x="192.7" y="55.5" width="4.1" height="2" fill="#e8e8e8"/>
<rect x="177.2" y="49.3" width="3.5" height="2" fill="#7d3c98"/>
<rect x="164.8" y="59.6" width="3.1" height="2" fill="#d98880"/>
<rect x="173.2" y="52.8" width="6.4" height="2" fill="#d98880"/>
<rect x="179.3" y="50.8" width="5.7" height="2" fill="#e59866"/>
<rect x="171.1" y="56.1" width="3.2" height="2" fill="#5d6d7e"/>
<rect x="155.5" y="55.9" width="3.8" height="2" fill="#c0392b"/>
<rect x="182.3" y="54.2" width="5.1" height="2" fill="#2e5fa3"/>
<rect x="196.5" y="51.7" width="5.7" height="2" fill="#5d6d7e"/>
<rect x="155.2" y="50.1" width="5.1" height="2" fill="#c7a13a"/>
<rect x="186.3" y="49.1" width="6.5" height="2" fill="#e59866"/>
<polygon points="186.0,44.0 212.0,42.0 214.0,47.0 188.0,49.0" fill="#e9e9e9"/>
<rect x="-3" y="15" width="450" height="16" fill="url(#whaze)"/>
<rect x="-3" y="-3" width="450" height="19.5" fill="url(#wsky)"/>
<polygon points="-3.0,80.0 80.0,62.0 200.0,64.0 215.0,70.0 140.0,92.0 60.0,108.0 -3.0,122.0" fill="#6c7450"/>
<polygon points="5.0,88.0 95.0,70.0 110.0,74.0 20.0,96.0" fill="#8a8460"/>
<path d="M-3,84 C40,72 70,66 90,64 L228,64" stroke="#9a9d98" stroke-width="3" fill="none"/>
<path d="M-3,100 C40,90 90,74 140,66" stroke="#8d918c" stroke-width="2.4" fill="none"/>
<path d="M-3,106 C50,96 110,80 160,68" stroke="#7f847f" stroke-width="2" fill="none"/>
<path d="M120,66 L300,68" stroke="#a4a6a2" stroke-width="2.2" fill="none"/>
<polygon points="-3.0,104.0 60.0,92.0 118.0,90.0 30.0,112.0 -3.0,120.0" fill="#4f6e3c"/>
<polygon points="215.0,68.0 446.0,64.0 446.0,150.0 330.0,128.0 282.0,116.0 200.0,100.0 140.0,92.0" fill="#5e9448"/>
<polygon points="196.0,73.0 274.0,72.0 278.0,93.0 166.0,92.0" fill="#b7b292"/>
<path d="M142,92 C150,84 170,80 205,72" stroke="#a9aba6" stroke-width="2" fill="none"/>
<polygon points="290.0,68.0 298.0,68.0 300.0,116.0 290.0,116.0" fill="#c9c9c7"/>
<path d="M150,95 L446,100" stroke="#b4b6b2" stroke-width="2" fill="none"/>
<polygon points="200.0,100.0 278.0,103.0 280.0,113.0 246.0,108.0" fill="#46525c"/>
<polygon points="313.0,78.0 319.0,78.0 321.0,95.0 315.0,95.0" fill="#3e4f66"/>
<rect x="351.0" y="76.8" width="7.1" height="2.6" fill="#d9d6d0"/>
<rect x="341.1" y="84.0" width="7.2" height="2.6" fill="#777"/>
<rect x="390.1" y="83.5" width="5.5" height="2.6" fill="#777"/>
<rect x="402.1" y="84.9" width="6.8" height="2.6" fill="#c96a55"/>
<rect x="365.6" y="74.6" width="5.2" height="2.6" fill="#d9d6d0"/>
<rect x="397.7" y="74.2" width="4.6" height="2.6" fill="#8e4a3c"/>
<rect x="381.7" y="79.4" width="5.4" height="2.6" fill="#d9d6d0"/>
<rect x="405.9" y="75.9" width="5.0" height="2.6" fill="#8e4a3c"/>
<rect x="413.4" y="77.6" width="5.2" height="2.6" fill="#777"/>
<rect x="335.7" y="77.4" width="8.0" height="2.6" fill="#8e4a3c"/>
<rect x="380.0" y="76.3" width="5.5" height="2.6" fill="#e6e3dd"/>
<rect x="430.2" y="84.7" width="5.8" height="2.6" fill="#b5533f"/>
<rect x="332.2" y="78.3" width="5.9" height="2.6" fill="#b5533f"/>
<rect x="422.4" y="76.9" width="5.6" height="2.6" fill="#777"/>
<rect x="354.1" y="73.3" width="5.6" height="2.6" fill="#d9d6d0"/>
<rect x="367.9" y="76.9" width="8.4" height="2.6" fill="#777"/>
<rect x="398.9" y="78.0" width="8.8" height="2.6" fill="#d9d6d0"/>
<rect x="366.7" y="80.5" width="7.9" height="2.6" fill="#c96a55"/>
<rect x="397.1" y="81.1" width="7.1" height="2.6" fill="#8e4a3c"/>
<rect x="332.3" y="73.9" width="8.4" height="2.6" fill="#8e4a3c"/>
<rect x="368.9" y="84.8" width="8.0" height="2.6" fill="#b5533f"/>
<rect x="403.6" y="76.5" width="5.8" height="2.6" fill="#8e4a3c"/>
<rect x="437.4" y="74.9" width="5.3" height="2.6" fill="#c96a55"/>
<rect x="354.7" y="75.9" width="4.0" height="2.6" fill="#e6e3dd"/>
<rect x="387.5" y="78.1" width="6.7" height="2.6" fill="#c96a55"/>
<rect x="422.6" y="82.9" width="7.1" height="2.6" fill="#b5533f"/>
<polygon points="325.0,103.0 412.0,105.0 437.0,122.0 318.0,120.0" fill="#b3b3b0"/>
<polygon points="347.0,110.0 398.0,111.0 400.0,117.0 349.0,117.0" fill="#52c468"/>
<polygon points="355.0,116.0 375.0,116.0 375.0,121.0 355.0,121.0" fill="#3c3f44"/>
<polygon points="402.0,113.0 420.0,114.0 420.0,121.0 402.0,120.0" fill="#3c3f44"/>
<polygon points="330.0,124.0 446.0,128.0 446.0,152.0 396.0,140.0" fill="#7ab35f"/>
<rect x="402" y="126" width="10" height="4.5" fill="#cc8a70"/>
<ellipse cx="150.0" cy="90.6" rx="2.4" ry="3.2" fill="#3f6a36"/>
<ellipse cx="157.4" cy="91.0" rx="2.4" ry="3.2" fill="#3f6a36"/>
<ellipse cx="164.8" cy="91.3" rx="2.4" ry="3.2" fill="#3f6a36"/>
<ellipse cx="172.2" cy="90.2" rx="2.4" ry="3.2" fill="#3f6a36"/>
<ellipse cx="179.6" cy="90.3" rx="2.4" ry="3.2" fill="#3f6a36"/>
<ellipse cx="187.0" cy="91.1" rx="2.4" ry="3.2" fill="#3f6a36"/>
<ellipse cx="194.4" cy="90.2" rx="2.4" ry="3.2" fill="#3f6a36"/>
<ellipse cx="201.8" cy="90.8" rx="2.4" ry="3.2" fill="#3f6a36"/>
<ellipse cx="209.2" cy="90.8" rx="2.4" ry="3.2" fill="#3f6a36"/>
<ellipse cx="216.6" cy="90.8" rx="2.4" ry="3.2" fill="#3f6a36"/>
<ellipse cx="224.0" cy="91.2" rx="2.4" ry="3.2" fill="#3f6a36"/>
<ellipse cx="231.4" cy="91.0" rx="2.4" ry="3.2" fill="#3f6a36"/>
<ellipse cx="238.8" cy="90.0" rx="2.4" ry="3.2" fill="#3f6a36"/>
<ellipse cx="246.2" cy="90.7" rx="2.4" ry="3.2" fill="#3f6a36"/>
<ellipse cx="253.6" cy="90.5" rx="2.4" ry="3.2" fill="#3f6a36"/>
<ellipse cx="261.0" cy="90.6" rx="2.4" ry="3.2" fill="#3f6a36"/>
<ellipse cx="268.4" cy="90.3" rx="2.4" ry="3.2" fill="#3f6a36"/>
<ellipse cx="275.8" cy="90.2" rx="2.4" ry="3.2" fill="#3f6a36"/>
<ellipse cx="322.0" cy="94.0" rx="2.6" ry="3.4" fill="#41703a"/>
<ellipse cx="329.4" cy="94.2" rx="2.6" ry="3.4" fill="#41703a"/>
<ellipse cx="336.8" cy="94.5" rx="2.6" ry="3.4" fill="#41703a"/>
<ellipse cx="344.2" cy="94.8" rx="2.6" ry="3.4" fill="#41703a"/>
<ellipse cx="351.6" cy="95.0" rx="2.6" ry="3.4" fill="#41703a"/>
<ellipse cx="359.0" cy="95.2" rx="2.6" ry="3.4" fill="#41703a"/>
<ellipse cx="366.4" cy="95.5" rx="2.6" ry="3.4" fill="#41703a"/>
<ellipse cx="373.8" cy="95.8" rx="2.6" ry="3.4" fill="#41703a"/>
<ellipse cx="381.2" cy="96.0" rx="2.6" ry="3.4" fill="#41703a"/>
<ellipse cx="388.6" cy="96.2" rx="2.6" ry="3.4" fill="#41703a"/>
<ellipse cx="396.0" cy="96.5" rx="2.6" ry="3.4" fill="#41703a"/>
<ellipse cx="403.4" cy="96.8" rx="2.6" ry="3.4" fill="#41703a"/>
<ellipse cx="410.8" cy="97.0" rx="2.6" ry="3.4" fill="#41703a"/>
<ellipse cx="418.2" cy="97.2" rx="2.6" ry="3.4" fill="#41703a"/>
<ellipse cx="425.6" cy="97.5" rx="2.6" ry="3.4" fill="#41703a"/>
<ellipse cx="433.0" cy="97.8" rx="2.6" ry="3.4" fill="#41703a"/>
<ellipse cx="440.4" cy="98.0" rx="2.6" ry="3.4" fill="#41703a"/>
<polygon points="-3.0,120.0 388.0,244.0 446.0,176.0 446.0,222.0 382.0,303.7 377.0,300.0 -3.0,153.0" fill="#cbc8c1"/>
<polygon points="-3.0,120.0 344.0,238.0 388.0,244.0 377.0,300.0 -3.0,152.5" fill="#cbc8c1"/>
<polygon points="-3.0,151.0 380.0,301.5 376.0,306.0 -3.0,155.5" fill="#5f9a40"/>
<polygon points="-3.0,155.0 360.0,306.0 340.0,306.0 -3.0,161.0" fill="#474e5a"/>
<polygon points="-3.0,160.5 345.0,306.0 -3.0,306.0" fill="url(#wgr)"/>
<ellipse cx="5" cy="284" rx="9" ry="22" fill="#465a30" opacity="0.6"/>
<polygon points="446.0,180.0 446.0,236.0 392.0,306.0 372.0,306.0 384.0,290.0" fill="#416f38"/>
<polygon points="446.0,232.0 446.0,246.0 404.0,306.0 392.0,306.0" fill="#3a433f"/>
<polygon points="446.0,246.0 446.0,306.0 404.0,306.0" fill="#6fb050"/>
<polygon points="380.6,217.9 446.0,157.0 446.0,174.0 380.6,242.4" fill="#2b2826"/>
<polygon points="2.4,116.0 344.8,216.2 343.9,238.0 2.4,124.5" fill="#3a3632"/>
<polygon points="20.0,124.0 338.0,219.5 338.0,222.3 20.0,126.0" fill="#9da4ab"/>
<path d="M344.8,216.2 L366,213 Q381,212 380.6,222 L380.6,242.4 Q366,246 344,238 Z" fill="#7f8791"/>
<path d="M348,222 Q366,221 380,226 M348,229 Q366,229 380,234 M348,235.5 Q366,237 379,240.5" stroke="#cfd6de" stroke-width="2.2" fill="none"/>
<polygon points="343.8,216.3 349.6,217.6 349.6,239.2 343.8,237.6" fill="#e0251f"/>
<polygon points="2.4,114.0 118.5,89.5 446.0,141.5 446.0,160.0 381.0,219.5 366.0,214.5 344.8,217.5" fill="#7a6d59"/>
<polygon points="19.0,113.0 120.0,92.5 446.0,145.0 446.0,149.0 372.0,206.0" fill="url(#wroof)"/>
<path d="M23.2,112.1 L375.3,203.5 M27.4,111.3 L378.7,201.0 M31.6,110.4 L382.0,198.5 M35.8,109.6 L385.3,196.0 M40.0,108.7 L388.7,193.5 M44.2,107.9 L392.0,191.0 M48.5,107.0 L395.3,188.5 M52.7,106.2 L398.7,186.0 M56.9,105.3 L402.0,183.5 M61.1,104.5 L405.3,181.0 M65.3,103.6 L408.7,178.5 M69.5,102.8 L412.0,176.0 M73.7,101.9 L415.3,173.5 M77.9,101.0 L418.7,171.0 M82.1,100.2 L422.0,168.5 M86.3,99.3 L425.3,166.0 M90.5,98.5 L428.7,163.5 M94.8,97.6 L432.0,161.0 M99.0,96.8 L435.3,158.5 M103.2,95.9 L438.7,156.0 M107.4,95.1 L442.0,153.5 M111.6,94.2 L445.3,151.0 M115.8,93.4 L448.7,148.5" stroke="#8b867d" stroke-width="0.8" opacity="0.6" fill="none"/>
<polygon points="115.4,149.4 147.9,160.3 147.9,174.5 115.4,164.0" fill="#e0231f"/>
<polygon points="122.0,157.0 143.0,163.5 143.0,166.0 122.0,159.5" fill="#f2b6b0"/>
<polygon points="30.0,146.2 45.5,141.0 47.3,144.2 31.8,149.4" fill="#efeeec"/><polygon points="31.8,149.4 47.3,144.2 47.3,145.6 31.8,150.8" fill="#b9b6b0"/>
<polygon points="42.0,150.2 57.5,145.0 59.3,148.2 43.8,153.4" fill="#efeeec"/><polygon points="43.8,153.4 59.3,148.2 59.3,149.6 43.8,154.8" fill="#b9b6b0"/>
<polygon points="56.0,154.7 71.5,149.5 73.3,152.7 57.8,157.9" fill="#efeeec"/><polygon points="57.8,157.9 73.3,152.7 73.3,154.1 57.8,159.3" fill="#b9b6b0"/>
<polygon points="68.0,158.2 83.5,153.0 85.3,156.2 69.8,161.4" fill="#efeeec"/><polygon points="69.8,161.4 85.3,156.2 85.3,157.6 69.8,162.8" fill="#b9b6b0"/>
<polygon points="77.0,161.7 92.5,156.5 94.3,159.7 78.8,164.9" fill="#efeeec"/><polygon points="78.8,164.9 94.3,159.7 94.3,161.1 78.8,166.3" fill="#b9b6b0"/>
<polygon points="88.0,165.2 103.5,160.0 105.3,163.2 89.8,168.4" fill="#efeeec"/><polygon points="89.8,168.4 105.3,163.2 105.3,164.6 89.8,169.8" fill="#b9b6b0"/>
<polygon points="143.0,183.2 158.5,178.0 160.3,181.2 144.8,186.4" fill="#efeeec"/><polygon points="144.8,186.4 160.3,181.2 160.3,182.6 144.8,187.8" fill="#b9b6b0"/>
<polygon points="152.0,186.7 167.5,181.5 169.3,184.7 153.8,189.9" fill="#efeeec"/><polygon points="153.8,189.9 169.3,184.7 169.3,186.1 153.8,191.3" fill="#b9b6b0"/>
<polygon points="164.0,188.2 179.5,183.0 181.3,186.2 165.8,191.4" fill="#efeeec"/><polygon points="165.8,191.4 181.3,186.2 181.3,187.6 165.8,192.8" fill="#b9b6b0"/>
<polygon points="166.0,192.7 181.5,187.5 183.3,190.7 167.8,195.9" fill="#efeeec"/><polygon points="167.8,195.9 183.3,190.7 183.3,192.1 167.8,197.3" fill="#b9b6b0"/>
<polygon points="181.0,197.2 196.5,192.0 198.3,195.2 182.8,200.4" fill="#efeeec"/><polygon points="182.8,200.4 198.3,195.2 198.3,196.6 182.8,201.8" fill="#b9b6b0"/>
<polygon points="191.0,201.2 206.5,196.0 208.3,199.2 192.8,204.4" fill="#efeeec"/><polygon points="192.8,204.4 208.3,199.2 208.3,200.6 192.8,205.8" fill="#b9b6b0"/>
<polygon points="204.0,202.7 219.5,197.5 221.3,200.7 205.8,205.9" fill="#efeeec"/><polygon points="205.8,205.9 221.3,200.7 221.3,202.1 205.8,207.3" fill="#b9b6b0"/>
<polygon points="236.0,210.2 251.5,205.0 253.3,208.2 237.8,213.4" fill="#efeeec"/><polygon points="237.8,213.4 253.3,208.2 253.3,209.6 237.8,214.8" fill="#b9b6b0"/>
<polygon points="247.0,219.2 262.5,214.0 264.3,217.2 248.8,222.4" fill="#efeeec"/><polygon points="248.8,222.4 264.3,217.2 264.3,218.6 248.8,223.8" fill="#b9b6b0"/>
<polygon points="254.0,220.2 269.5,215.0 271.3,218.2 255.8,223.4" fill="#efeeec"/><polygon points="255.8,223.4 271.3,218.2 271.3,219.6 255.8,224.8" fill="#b9b6b0"/>
<polygon points="268.0,226.2 283.5,221.0 285.3,224.2 269.8,229.4" fill="#efeeec"/><polygon points="269.8,229.4 285.3,224.2 285.3,225.6 269.8,230.8" fill="#b9b6b0"/>
<polygon points="282.0,226.2 297.5,221.0 299.3,224.2 283.8,229.4" fill="#efeeec"/><polygon points="283.8,229.4 299.3,224.2 299.3,225.6 283.8,230.8" fill="#b9b6b0"/>
<polygon points="290.0,233.2 305.5,228.0 307.3,231.2 291.8,236.4" fill="#efeeec"/><polygon points="291.8,236.4 307.3,231.2 307.3,232.6 291.8,237.8" fill="#b9b6b0"/>
<polygon points="417.0,205.0 428.0,192.0 431.0,196.0 420.0,210.0" fill="#efeeec"/>
<ellipse cx="12.0" cy="153.0" rx="8" ry="3" fill="#5b5f5c" opacity="0.45"/>
<ellipse cx="5.0" cy="149.0" rx="5.6" ry="6.6" fill="#4b7c3d"/>
<ellipse cx="3.8" cy="147.2" rx="3" ry="3.6" fill="#639650"/>
<ellipse cx="22.0" cy="157.0" rx="8" ry="3" fill="#5b5f5c" opacity="0.45"/>
<ellipse cx="15.0" cy="153.0" rx="5.6" ry="6.6" fill="#4b7c3d"/>
<ellipse cx="13.8" cy="151.2" rx="3" ry="3.6" fill="#639650"/>
<ellipse cx="32.0" cy="158.0" rx="8" ry="3" fill="#5b5f5c" opacity="0.45"/>
<ellipse cx="25.0" cy="154.0" rx="5.6" ry="6.6" fill="#4b7c3d"/>
<ellipse cx="23.8" cy="152.2" rx="3" ry="3.6" fill="#639650"/>
<ellipse cx="42.0" cy="164.0" rx="8" ry="3" fill="#5b5f5c" opacity="0.45"/>
<ellipse cx="35.0" cy="160.0" rx="5.6" ry="6.6" fill="#4b7c3d"/>
<ellipse cx="33.8" cy="158.2" rx="3" ry="3.6" fill="#639650"/>
<ellipse cx="55.0" cy="166.0" rx="8" ry="3" fill="#5b5f5c" opacity="0.45"/>
<ellipse cx="48.0" cy="162.0" rx="5.6" ry="6.6" fill="#4b7c3d"/>
<ellipse cx="46.8" cy="160.2" rx="3" ry="3.6" fill="#639650"/>
<ellipse cx="67.0" cy="171.0" rx="8" ry="3" fill="#5b5f5c" opacity="0.45"/>
<ellipse cx="60.0" cy="167.0" rx="5.6" ry="6.6" fill="#4b7c3d"/>
<ellipse cx="58.8" cy="165.2" rx="3" ry="3.6" fill="#639650"/>
<ellipse cx="81.0" cy="176.0" rx="8" ry="3" fill="#5b5f5c" opacity="0.45"/>
<ellipse cx="74.0" cy="172.0" rx="5.6" ry="6.6" fill="#4b7c3d"/>
<ellipse cx="72.8" cy="170.2" rx="3" ry="3.6" fill="#639650"/>
<ellipse cx="93.0" cy="180.0" rx="8" ry="3" fill="#5b5f5c" opacity="0.45"/>
<ellipse cx="86.0" cy="176.0" rx="5.6" ry="6.6" fill="#4b7c3d"/>
<ellipse cx="84.8" cy="174.2" rx="3" ry="3.6" fill="#639650"/>
<ellipse cx="110.0" cy="189.0" rx="8" ry="3" fill="#5b5f5c" opacity="0.45"/>
<ellipse cx="103.0" cy="185.0" rx="5.6" ry="6.6" fill="#4b7c3d"/>
<ellipse cx="101.8" cy="183.2" rx="3" ry="3.6" fill="#639650"/>
<ellipse cx="128.0" cy="194.0" rx="8" ry="3" fill="#5b5f5c" opacity="0.45"/>
<ellipse cx="121.0" cy="190.0" rx="5.6" ry="6.6" fill="#4b7c3d"/>
<ellipse cx="119.8" cy="188.2" rx="3" ry="3.6" fill="#639650"/>
<ellipse cx="147.0" cy="201.0" rx="8" ry="3" fill="#5b5f5c" opacity="0.45"/>
<ellipse cx="140.0" cy="197.0" rx="5.6" ry="6.6" fill="#4b7c3d"/>
<ellipse cx="138.8" cy="195.2" rx="3" ry="3.6" fill="#639650"/>
<ellipse cx="168.0" cy="208.0" rx="8" ry="3" fill="#5b5f5c" opacity="0.45"/>
<ellipse cx="161.0" cy="204.0" rx="5.6" ry="6.6" fill="#4b7c3d"/>
<ellipse cx="159.8" cy="202.2" rx="3" ry="3.6" fill="#639650"/>
<ellipse cx="191.0" cy="218.0" rx="8" ry="3" fill="#5b5f5c" opacity="0.45"/>
<ellipse cx="184.0" cy="214.0" rx="5.6" ry="6.6" fill="#4b7c3d"/>
<ellipse cx="182.8" cy="212.2" rx="3" ry="3.6" fill="#639650"/>
<ellipse cx="215.0" cy="224.0" rx="8" ry="3" fill="#5b5f5c" opacity="0.45"/>
<ellipse cx="208.0" cy="220.0" rx="5.6" ry="6.6" fill="#4b7c3d"/>
<ellipse cx="206.8" cy="218.2" rx="3" ry="3.6" fill="#639650"/>
<ellipse cx="239.0" cy="233.0" rx="8" ry="3" fill="#5b5f5c" opacity="0.45"/>
<ellipse cx="232.0" cy="229.0" rx="5.6" ry="6.6" fill="#4b7c3d"/>
<ellipse cx="230.8" cy="227.2" rx="3" ry="3.6" fill="#639650"/>
<ellipse cx="264.0" cy="243.0" rx="8" ry="3" fill="#5b5f5c" opacity="0.45"/>
<ellipse cx="257.0" cy="239.0" rx="5.6" ry="6.6" fill="#4b7c3d"/>
<ellipse cx="255.8" cy="237.2" rx="3" ry="3.6" fill="#639650"/>
<ellipse cx="291.0" cy="254.0" rx="8" ry="3" fill="#5b5f5c" opacity="0.45"/>
<ellipse cx="284.0" cy="250.0" rx="5.6" ry="6.6" fill="#4b7c3d"/>
<ellipse cx="282.8" cy="248.2" rx="3" ry="3.6" fill="#639650"/>
<ellipse cx="327.0" cy="265.0" rx="8" ry="3" fill="#5b5f5c" opacity="0.45"/>
<ellipse cx="320.0" cy="261.0" rx="5.6" ry="6.6" fill="#4b7c3d"/>
<ellipse cx="318.8" cy="259.2" rx="3" ry="3.6" fill="#639650"/>
<ellipse cx="348.0" cy="245.0" rx="8" ry="3" fill="#5b5f5c" opacity="0.45"/>
<ellipse cx="341.0" cy="241.0" rx="5.6" ry="6.6" fill="#4b7c3d"/>
<ellipse cx="339.8" cy="239.2" rx="3" ry="3.6" fill="#639650"/>
<ellipse cx="363.0" cy="267.0" rx="8" ry="3" fill="#5b5f5c" opacity="0.45"/>
<ellipse cx="356.0" cy="263.0" rx="5.6" ry="6.6" fill="#4b7c3d"/>
<ellipse cx="354.8" cy="261.2" rx="3" ry="3.6" fill="#639650"/>
<ellipse cx="334.0" cy="239.0" rx="8" ry="3" fill="#5b5f5c" opacity="0.45"/>
<ellipse cx="327.0" cy="235.0" rx="5.6" ry="6.6" fill="#4b7c3d"/>
<ellipse cx="325.8" cy="233.2" rx="3" ry="3.6" fill="#639650"/>
<ellipse cx="386.0" cy="272.0" rx="9.0" ry="11.0" fill="#3b6a34"/>
<ellipse cx="391.4" cy="264.4" rx="8.7" ry="10.7" fill="#3b6a34"/>
<ellipse cx="396.8" cy="256.8" rx="8.4" ry="10.3" fill="#3b6a34"/>
<ellipse cx="402.2" cy="249.2" rx="8.1" ry="9.9" fill="#3b6a34"/>
<ellipse cx="407.6" cy="241.6" rx="7.8" ry="9.6" fill="#3b6a34"/>
<ellipse cx="413.0" cy="234.0" rx="7.5" ry="9.2" fill="#3b6a34"/>
<ellipse cx="418.4" cy="226.4" rx="7.2" ry="8.9" fill="#3b6a34"/>
<ellipse cx="423.8" cy="218.8" rx="6.9" ry="8.6" fill="#3b6a34"/>
<ellipse cx="429.2" cy="211.2" rx="6.6" ry="8.2" fill="#3b6a34"/>
<ellipse cx="434.6" cy="203.6" rx="6.3" ry="7.8" fill="#3b6a34"/>
<ellipse cx="440.0" cy="196.0" rx="6.0" ry="7.5" fill="#3b6a34"/>
<rect x="292.0" y="262.0" width="3.6" height="1.8" fill="#3b3b3b"/>
<rect x="188.2" y="225.7" width="3.6" height="1.8" fill="#3b3b3b"/>
<rect x="330.6" y="279.7" width="3.6" height="1.8" fill="#8d4034"/>
<rect x="118.3" y="198.1" width="3.6" height="1.8" fill="#e8e8e8"/>
<rect x="100.0" y="187.9" width="3.6" height="1.8" fill="#e8e8e8"/>
<rect x="100.6" y="190.0" width="3.6" height="1.8" fill="#e8e8e8"/>
<rect x="157.9" y="210.2" width="3.6" height="1.8" fill="#8d4034"/>
<rect x="140.8" y="201.7" width="3.6" height="1.8" fill="#49607f"/>
<rect x="313.9" y="271.7" width="3.6" height="1.8" fill="#3b3b3b"/>
<rect x="260.1" y="252.6" width="3.6" height="1.8" fill="#3b3b3b"/>
<rect x="143.6" y="204.1" width="3.6" height="1.8" fill="#3b3b3b"/>
<rect x="352.7" y="289.1" width="3.6" height="1.8" fill="#3b3b3b"/>
<rect x="159.1" y="211.0" width="3.6" height="1.8" fill="#e8e8e8"/>
<rect x="194.6" y="222.8" width="3.6" height="1.8" fill="#3b3b3b"/>
<rect x="279.0" y="256.8" width="3.6" height="1.8" fill="#8d4034"/>
<rect x="185.3" y="224.2" width="3.6" height="1.8" fill="#e8e8e8"/>
<rect x="174.0" y="219.6" width="3.6" height="1.8" fill="#e8e8e8"/>
<rect x="131.1" y="202.0" width="3.6" height="1.8" fill="#8d4034"/>
<rect x="150.6" y="207.4" width="3.6" height="1.8" fill="#3b3b3b"/>
<rect x="353.9" y="289.8" width="3.6" height="1.8" fill="#49607f"/>
<rect x="167.8" y="213.9" width="3.6" height="1.8" fill="#2e3a55"/>
<rect x="242.5" y="246.0" width="3.6" height="1.8" fill="#e8e8e8"/>
</g></g></svg>
<div class="t" style="left:956.20px;top:296.04px;font-size:28.30px;line-height:28.30px;letter-spacing:0.886px;color:#111;-webkit-text-stroke:0.30px #111;">Beta Logistics</div>
<div class="t" style="left:955.16px;top:339.87px;font-size:20.00px;line-height:20.00px;letter-spacing:0.652px;color:#4a5583;-webkit-text-stroke:0.15px #4a5583;">Huidige status</div>
<div class="t" style="left:958.10px;top:388.66px;font-size:19.30px;line-height:19.30px;letter-spacing:0.196px;color:#6c6c6c;">Sensorstatus</div>
<div class="bar" style="left:956.6px;top:417.3px;width:367px;"></div><div class="dot" style="left:957.3px;top:418.5px;"></div>
<div class="t" style="left:1336.08px;top:414.54px;font-size:19.80px;line-height:19.80px;letter-spacing:-0.135px;color:#6c6c6c;">0/16 OK.</div>
<div class="t" style="left:959.16px;top:458.16px;font-size:19.30px;line-height:19.30px;letter-spacing:-0.132px;color:#6c6c6c;">Energieverbruik</div>
<div class="bar" style="left:959px;top:489.3px;width:364.6px;"></div><div class="dot" style="left:959.7px;top:490.5px;"></div>
<div class="t" style="left:1336.08px;top:486.14px;font-size:19.80px;line-height:19.80px;letter-spacing:-0.331px;color:#6c6c6c;">-/131 kW</div>
<div class="t" style="left:960.16px;top:535.26px;font-size:19.30px;line-height:19.30px;letter-spacing:0.108px;color:#6c6c6c;">Load Shifting Status</div>
<div class="bar" style="left:959px;top:565.3px;width:364.6px;"></div><div class="dot" style="left:959.7px;top:566.5px;"></div>
<div class="t" style="left:1336.08px;top:562.64px;font-size:19.80px;line-height:19.80px;letter-spacing:0.002px;color:#6c6c6c;">0/5 Load Shifting inactief</div>
<div class="t" style="left:1917.52px;top:340.72px;font-size:20.30px;line-height:20.30px;letter-spacing:0.393px;color:#474f72;">Alarmeringen - 4 Actief</div>
<div class="abs" style="left:1991.7px;top:371.6px;width:5.2px;height:218px;background:#ededf2;"></div>
<div class="t" style="left:1916.62px;top:390.94px;font-size:19.80px;line-height:19.80px;letter-spacing:-0.182px;color:#474f72;">08:42</div>
<div class="ring" style="left:1980.4px;top:385.3px;"></div>
<div class="t" style="left:2027.58px;top:390.94px;font-size:19.80px;line-height:19.80px;letter-spacing:-0.547px;color:#474f72;"><span style="font-weight:700">Geen verbinding:</span><span style="font-weight:400"> Laadpalen 1-4 (Bezoekerslaadpalen)</span></div>
<div class="t" style="left:2037.64px;top:411.16px;font-size:13.40px;line-height:13.40px;letter-spacing:0.168px;color:#9ba1b9;">Foutmelding: 507-E</div>
<div class="t" style="left:1916.62px;top:435.04px;font-size:19.80px;line-height:19.80px;letter-spacing:-0.182px;color:#474f72;">08:42</div>
<div class="ring" style="left:1980.4px;top:429.5px;"></div>
<div class="t" style="left:2027.58px;top:435.04px;font-size:19.80px;line-height:19.80px;letter-spacing:-0.610px;color:#474f72;"><span style="font-weight:700">Geen verbinding:</span><span style="font-weight:400"> Laadpalen 5-7 (E-Trucks Palen)</span></div>
<div class="t" style="left:2037.64px;top:456.36px;font-size:13.40px;line-height:13.40px;letter-spacing:0.168px;color:#9ba1b9;">Foutmelding: 507-E</div>
<div class="t" style="left:1916.62px;top:479.24px;font-size:19.80px;line-height:19.80px;letter-spacing:-0.182px;color:#474f72;">08:42</div>
<div class="ring" style="left:1980.4px;top:473.7px;"></div>
<div class="t" style="left:2027.58px;top:479.24px;font-size:19.80px;line-height:19.80px;letter-spacing:-0.621px;color:#474f72;"><span style="font-weight:700">Geen verbinding:</span><span style="font-weight:400"> Verbruikssensor 1</span></div>
<div class="t" style="left:2037.64px;top:499.36px;font-size:13.40px;line-height:13.40px;letter-spacing:0.314px;color:#9ba1b9;">Foutmelding: 511</div>
<div class="t" style="left:1916.62px;top:521.94px;font-size:19.80px;line-height:19.80px;letter-spacing:-0.182px;color:#474f72;">08:43</div>
<div class="ring" style="left:1980.4px;top:517.9px;border-color:#e9c31f;"></div>
<div class="t" style="left:2028.18px;top:523.44px;font-size:19.80px;line-height:19.80px;letter-spacing:-0.093px;color:#474f72;">Info: Automatische Sturing in veilige stand.</div>
<div class="t" style="left:2038.54px;top:545.56px;font-size:13.40px;line-height:13.40px;letter-spacing:0.144px;color:#9ba1b9;">Geen verbinding met flexibele assets kunnen maken na 3 pogingen.</div>
<div class="card" style="left:442.8px;top:656.1px;width:2158.3px;height:688.3px;"></div>
<div class="t" style="left:476.22px;top:675.20px;font-size:28.00px;line-height:28.00px;letter-spacing:1.026px;color:#111;-webkit-text-stroke:0.30px #111;">Live Monitor</div>
<div class="t" style="left:1773.52px;top:682.18px;font-size:16.80px;line-height:16.80px;letter-spacing:-0.561px;font-weight:700;color:#666;">This Year</div>
<div class="abs" style="left:1875.4px;top:667.5px;width:111.8px;height:42.5px;border-radius:9px;background:#e1e2e7;"></div>
<div class="t" style="left:1893.02px;top:682.18px;font-size:16.80px;line-height:16.80px;letter-spacing:-0.726px;font-weight:700;color:#474747;">This Week</div>
<div class="t" style="left:2032.06px;top:682.18px;font-size:16.80px;line-height:16.80px;letter-spacing:-0.832px;font-weight:700;color:#666;">Today</div>
<svg class="chart" width="2635" height="1366" viewBox="0 0 2635 1366" style="position:absolute;left:0;top:0">
<path d="M560.2,1260.4 H2087.1 M560.2,1246.8 H2087.1 M560.2,1233.2 H2087.1 M560.2,1219.5 H2087.1 M560.2,1192.3 H2087.1 M560.2,1178.6 H2087.1 M560.2,1165.0 H2087.1 M560.2,1151.4 H2087.1 M560.2,1124.1 H2087.1 M560.2,1110.5 H2087.1 M560.2,1096.9 H2087.1 M560.2,1083.2 H2087.1 M560.2,1056.0 H2087.1 M560.2,1042.4 H2087.1 M560.2,1028.7 H2087.1 M560.2,1015.1 H2087.1 M560.2,987.9 H2087.1 M560.2,974.2 H2087.1 M560.2,960.6 H2087.1 M560.2,947.0 H2087.1 M560.2,919.7 H2087.1 M560.2,906.1 H2087.1 M560.2,892.5 H2087.1 M560.2,878.8 H2087.1 M560.2,851.6 H2087.1 M560.2,837.9 H2087.1 M560.2,824.3 H2087.1 M560.2,810.7 H2087.1 M560.2,783.4 H2087.1 M560.2,769.8 H2087.1 M560.2,756.2 H2087.1 M560.2,742.5 H2087.1" stroke="#dddddd" stroke-width="1" stroke-dasharray="1.2,1.1" fill="none"/>
<path d="M560.2,1274.0 H2087.1 M560.2,1205.9 H2087.1 M560.2,1137.8 H2087.1 M560.2,1069.6 H2087.1 M560.2,1001.5 H2087.1 M560.2,933.3 H2087.1 M560.2,865.2 H2087.1 M560.2,797.1 H2087.1 M560.2,728.9 H2087.1" stroke="#e6e6e6" stroke-width="1.1" fill="none"/>
<path d="M751.1,728.9 V1274.0 M941.9,728.9 V1274.0 M1132.8,728.9 V1274.0 M1323.7,728.9 V1274.0 M1514.5,728.9 V1274.0 M1705.4,728.9 V1274.0 M1896.2,728.9 V1274.0 M2087.1,728.9 V1274.0" stroke="#e3e3e3" stroke-width="1.2" fill="none"/>
<path d="M560.2,728.9 H2087.1" stroke="#dedede" stroke-width="1.3" fill="none"/>
<path d="M560.2,1015.1 H2087.1" stroke="#b01a3e" stroke-width="2.2" stroke-dasharray="10,9" fill="none"/>
<path d="M560.2,1205.9 L560.2,1241.1 L572.7,1205.9 Z" fill="#33d9a2"/>
<path d="M560.2,1205.9 L560.2,1180.3 561.0,1187.6 561.8,1185.8 562.6,1182.7 563.4,1183.9 564.2,1178.6 565.0,1176.4 565.8,1178.0 566.6,1169.7 567.4,1167.1 568.2,1167.5 568.9,1166.0 569.7,1162.2 570.5,1163.1 571.3,1162.5 572.1,1163.5 572.9,1156.5 573.7,1155.9 574.5,1155.1 575.3,1156.0 576.1,1148.1 576.9,1150.2 577.7,1151.1 578.5,1144.9 579.3,1148.7 580.1,1152.4 580.9,1149.4 581.7,1154.3 582.5,1144.4 583.3,1146.1 584.1,1147.5 584.9,1142.4 585.6,1148.8 586.4,1143.4 587.2,1149.0 588.0,1147.2 588.8,1147.4 589.6,1140.1 590.4,1137.0 591.2,1141.6 592.0,1138.0 592.8,1139.6 593.6,1136.3 594.4,1137.6 595.2,1141.1 596.0,1142.7 596.8,1137.1 597.6,1128.9 598.4,1130.9 599.2,1132.1 600.0,1127.0 600.8,1128.3 601.6,1127.6 602.3,1123.9 603.1,1123.2 603.9,1121.8 604.7,1123.8 605.5,1116.1 606.3,1113.0 607.1,1105.3 607.9,1104.0 608.7,1104.6 609.5,1094.0 610.3,1079.8 611.1,1075.3 611.9,1070.4 612.7,1063.7 613.5,1056.2 614.3,1050.0 615.1,1047.4 615.9,1037.4 616.7,1037.7 617.5,1033.8 618.3,1027.0 619.0,1021.3 619.8,1021.5 620.6,1019.4 621.4,1017.2 622.2,1018.8 623.0,1023.4 623.8,1016.9 624.6,1014.9 625.4,1014.5 626.2,1018.4 627.0,1016.0 627.8,1015.1 628.6,1012.7 629.4,1008.1 630.2,1007.2 631.0,1010.4 631.8,1011.0 632.6,1011.6 633.4,1014.4 634.2,1014.4 635.0,1016.3 635.7,1013.4 636.5,1003.5 637.3,1005.1 638.1,1008.3 638.9,1010.9 639.7,1011.6 640.5,1008.5 641.3,1007.9 642.1,1013.9 642.9,1007.1 643.7,1009.8 644.5,1004.8 645.3,1005.8 646.1,1000.7 646.9,1004.6 647.7,1004.8 648.5,1003.5 649.3,999.4 650.1,999.1 650.9,1005.4 651.7,1000.5 652.5,1000.0 653.2,999.7 654.0,1001.7 654.8,995.6 655.6,999.5 656.4,1001.9 657.2,996.4 658.0,997.7 658.8,997.4 659.6,995.3 660.4,994.0 661.2,993.4 662.0,991.5 662.8,990.0 663.6,992.7 664.4,991.3 665.2,992.9 666.0,990.5 666.8,993.0 667.6,995.4 668.4,990.7 669.2,993.7 669.9,998.8 670.7,992.5 671.5,993.9 672.3,990.4 673.1,991.0 673.9,990.9 674.7,991.6 675.5,989.2 676.3,987.8 677.1,988.8 677.9,987.7 678.7,991.8 679.5,989.2 680.3,993.5 681.1,988.8 681.9,985.2 682.7,982.1 683.5,981.9 684.3,991.0 685.1,987.1 685.9,984.7 686.6,986.6 687.4,994.4 688.2,994.4 689.0,989.9 689.8,996.0 690.6,993.3 691.4,992.9 692.2,998.2 693.0,997.7 693.8,1003.3 694.6,1006.1 695.4,1009.3 696.2,1008.7 697.0,1009.6 697.8,1008.2 698.6,1013.6 699.4,1016.3 700.2,1014.3 701.0,1017.3 701.8,1025.6 702.6,1023.5 703.3,1029.1 704.1,1030.3 704.9,1032.7 705.7,1032.7 706.5,1037.8 707.3,1046.4 708.1,1050.1 708.9,1048.4 709.7,1050.5 710.5,1050.7 711.3,1055.5 712.1,1063.3 712.9,1064.7 713.7,1072.7 714.5,1080.4 715.3,1072.1 716.1,1082.9 716.9,1079.4 717.7,1077.9 718.5,1080.0 719.3,1087.2 720.0,1082.2 720.8,1088.8 721.6,1092.0 722.4,1089.0 723.2,1087.2 724.0,1088.3 724.8,1087.4 725.6,1093.6 726.4,1093.5 727.2,1097.3 728.0,1096.1 728.8,1093.9 729.6,1097.4 730.4,1095.5 731.2,1097.9 732.0,1097.7 732.8,1095.8 733.6,1097.8 734.4,1094.4 735.2,1094.2 736.0,1089.3 736.7,1093.5 737.5,1095.9 738.3,1098.3 739.1,1096.7 739.9,1091.4 740.7,1095.6 741.5,1096.3 742.3,1094.5 743.1,1095.1 743.9,1098.0 744.7,1097.3 745.5,1097.7 746.3,1097.8 747.1,1096.9 747.9,1096.5 748.7,1102.7 749.5,1106.5 750.3,1104.5 751.1,1106.6 751.9,1112.1 752.7,1105.4 753.4,1106.7 754.2,1105.8 755.0,1113.8 755.8,1108.1 756.6,1113.0 757.4,1112.5 758.2,1116.9 759.0,1113.8 759.8,1114.6 760.6,1117.3 761.4,1116.4 762.2,1116.9 763.0,1115.4 763.8,1119.7 764.6,1121.1 765.4,1119.7 766.2,1116.6 767.0,1114.4 767.8,1116.9 768.6,1125.6 769.4,1122.1 770.1,1117.6 770.9,1121.4 771.7,1125.3 772.5,1124.6 773.3,1126.8 774.1,1124.7 774.9,1126.1 775.7,1120.2 776.5,1121.5 777.3,1126.5 778.1,1123.9 778.9,1120.6 779.7,1124.1 780.5,1125.2 781.3,1132.4 782.1,1126.5 782.9,1128.5 783.7,1133.2 784.5,1134.9 785.3,1131.3 786.1,1126.5 786.8,1129.3 787.6,1128.9 788.4,1132.0 789.2,1132.5 790.0,1125.7 790.8,1123.5 791.6,1122.8 792.4,1118.4 793.2,1123.9 794.0,1121.4 794.8,1114.7 795.6,1108.7 796.4,1111.4 797.2,1103.8 798.0,1107.1 798.8,1101.2 799.6,1099.2 800.4,1098.0 801.2,1086.9 802.0,1077.8 802.8,1072.6 803.5,1067.6 804.3,1058.1 805.1,1059.6 805.9,1056.7 806.7,1050.2 807.5,1045.3 808.3,1032.2 809.1,1028.8 809.9,1030.2 810.7,1027.0 811.5,1013.5 812.3,1018.5 813.1,1020.0 813.9,1016.3 814.7,1013.0 815.5,1016.3 816.3,1017.7 817.1,1018.4 817.9,1013.2 818.7,1014.0 819.5,1018.1 820.3,1010.4 821.0,1010.7 821.8,1012.0 822.6,1012.4 823.4,1009.3 824.2,1010.7 825.0,1013.3 825.8,1009.1 826.6,1012.1 827.4,1007.7 828.2,1011.0 829.0,1008.9 829.8,1009.2 830.6,1003.5 831.4,1010.9 832.2,1013.8 833.0,1011.3 833.8,1013.2 834.6,1012.2 835.4,1007.1 836.2,1004.8 837.0,1000.8 837.7,1007.2 838.5,999.3 839.3,998.1 840.1,1001.6 840.9,1008.4 841.7,1005.5 842.5,1002.6 843.3,1007.3 844.1,1001.2 844.9,1001.3 845.7,1002.3 846.5,995.9 847.3,994.5 848.1,997.4 848.9,996.9 849.7,1000.0 850.5,1000.9 851.3,997.1 852.1,993.7 852.9,997.0 853.7,1002.7 854.4,996.8 855.2,1002.8 856.0,997.8 856.8,989.7 857.6,991.3 858.4,996.1 859.2,996.7 860.0,988.7 860.8,990.5 861.6,989.3 862.4,988.2 863.2,990.2 864.0,989.7 864.8,993.1 865.6,1001.1 866.4,997.5 867.2,992.4 868.0,992.9 868.8,991.5 869.6,992.7 870.4,992.1 871.1,989.1 871.9,991.7 872.7,991.1 873.5,994.2 874.3,988.3 875.1,987.6 875.9,984.9 876.7,981.8 877.5,982.7 878.3,983.8 879.1,981.6 879.9,989.0 880.7,987.6 881.5,988.4 882.3,993.3 883.1,988.5 883.9,994.4 884.7,994.0 885.5,997.7 886.3,995.1 887.1,996.8 887.8,1005.0 888.6,1011.2 889.4,1011.3 890.2,1011.4 891.0,1015.7 891.8,1020.0 892.6,1019.8 893.4,1027.8 894.2,1031.0 895.0,1035.1 895.8,1034.7 896.6,1040.1 897.4,1044.9 898.2,1046.9 899.0,1054.6 899.8,1052.7 900.6,1056.6 901.4,1060.1 902.2,1065.7 903.0,1063.3 903.8,1066.3 904.5,1066.1 905.3,1067.0 906.1,1073.5 906.9,1072.2 907.7,1075.7 908.5,1077.3 909.3,1079.8 910.1,1082.1 910.9,1079.5 911.7,1074.6 912.5,1081.7 913.3,1078.3 914.1,1081.6 914.9,1077.4 915.7,1079.0 916.5,1077.8 917.3,1088.9 918.1,1085.5 918.9,1085.9 919.7,1082.6 920.5,1083.4 921.2,1081.2 922.0,1077.3 922.8,1073.4 923.6,1085.8 924.4,1082.2 925.2,1080.2 926.0,1082.0 926.8,1084.3 927.6,1087.7 928.4,1087.0 929.2,1082.2 930.0,1080.3 930.8,1082.4 931.6,1086.9 932.4,1085.4 933.2,1085.1 934.0,1082.8 934.8,1083.4 935.6,1088.3 936.4,1089.4 937.2,1097.9 937.9,1097.2 938.7,1100.9 939.5,1114.1 940.3,1117.3 941.1,1125.0 941.9,1126.4 942.7,1130.0 943.5,1134.4 944.3,1133.8 945.1,1139.3 945.9,1144.5 946.7,1144.9 947.5,1144.7 948.3,1146.3 949.1,1148.3 949.9,1151.4 950.7,1148.6 951.5,1148.8 952.3,1154.2 953.1,1159.5 953.9,1154.4 954.6,1152.6 955.4,1156.4 956.2,1162.4 957.0,1161.0 957.8,1155.4 958.6,1162.5 959.4,1157.8 960.2,1158.0 961.0,1161.2 961.8,1158.6 962.6,1163.0 963.4,1160.5 964.2,1155.4 965.0,1159.6 965.8,1164.3 966.6,1168.7 967.4,1169.2 968.2,1169.9 969.0,1162.5 969.8,1163.6 970.6,1165.7 971.3,1167.1 972.1,1165.6 972.9,1161.4 973.7,1163.9 974.5,1155.8 975.3,1160.6 976.1,1162.1 976.9,1160.4 977.7,1157.4 978.5,1156.2 979.3,1161.9 980.1,1160.5 980.9,1160.1 981.7,1159.8 982.5,1160.1 983.3,1163.8 984.1,1166.0 984.9,1161.2 985.7,1163.8 986.5,1156.5 987.3,1159.6 988.1,1161.4 988.8,1160.6 989.6,1159.7 990.4,1155.4 991.2,1148.9 992.0,1154.1 992.8,1157.1 993.6,1149.9 994.4,1148.8 995.2,1146.2 996.0,1145.3 996.8,1144.6 997.6,1140.0 998.4,1145.3 999.2,1144.1 1000.0,1146.5 1000.8,1146.7 1001.6,1143.8 1002.4,1141.7 1003.2,1148.2 1004.0,1148.2 1004.8,1142.7 1005.5,1140.6 1006.3,1145.2 1007.1,1144.9 1007.9,1146.8 1008.7,1136.2 1009.5,1139.1 1010.3,1137.5 1011.1,1137.9 1011.9,1137.3 1012.7,1137.7 1013.5,1139.6 1014.3,1134.1 1015.1,1136.3 1015.9,1132.6 1016.7,1137.4 1017.5,1138.3 1018.3,1133.3 1019.1,1129.6 1019.9,1131.4 1020.7,1135.0 1021.5,1134.9 1022.2,1135.2 1023.0,1128.5 1023.8,1129.6 1024.6,1127.7 1025.4,1131.1 1026.2,1134.5 1027.0,1129.1 1027.8,1126.1 1028.6,1127.3 1029.4,1130.2 1030.2,1126.5 1031.0,1130.3 1031.8,1126.2 1032.6,1128.7 1033.4,1129.9 1034.2,1124.4 1035.0,1123.6 1035.8,1119.5 1036.6,1122.8 1037.4,1123.1 1038.2,1125.4 1038.9,1128.6 1039.7,1128.2 1040.5,1123.0 1041.3,1127.1 1042.1,1122.5 1042.9,1118.6 1043.7,1124.4 1044.5,1121.1 1045.3,1124.4 1046.1,1121.4 1046.9,1123.5 1047.7,1121.2 1048.5,1124.4 1049.3,1120.5 1050.1,1121.2 1050.9,1120.0 1051.7,1118.7 1052.5,1119.4 1053.3,1120.8 1054.1,1118.6 1054.9,1117.9 1055.6,1124.3 1056.4,1120.2 1057.2,1119.1 1058.0,1122.5 1058.8,1120.8 1059.6,1125.7 1060.4,1118.5 1061.2,1120.9 1062.0,1120.7 1062.8,1117.3 1063.6,1121.1 1064.4,1120.3 1065.2,1125.2 1066.0,1127.5 1066.8,1131.2 1067.6,1127.1 1068.4,1123.2 1069.2,1127.4 1070.0,1125.8 1070.8,1130.6 1071.6,1133.0 1072.3,1129.7 1073.1,1125.6 1073.9,1124.9 1074.7,1126.7 1075.5,1125.3 1076.3,1127.0 1077.1,1127.6 1077.9,1125.4 1078.7,1130.4 1079.5,1130.2 1080.3,1126.4 1081.1,1131.3 1081.9,1130.9 1082.7,1135.2 1083.5,1129.3 1084.3,1140.1 1085.1,1142.2 1085.9,1141.6 1086.7,1133.7 1087.5,1137.2 1088.3,1139.9 1089.0,1144.8 1089.8,1141.8 1090.6,1140.4 1091.4,1142.0 1092.2,1142.8 1093.0,1142.4 1093.8,1139.4 1094.6,1137.4 1095.4,1139.6 1096.2,1137.7 1097.0,1141.8 1097.8,1137.1 1098.6,1138.4 1099.4,1136.3 1100.2,1133.9 1101.0,1136.8 1101.8,1138.4 1102.6,1132.0 1103.4,1132.8 1104.2,1133.2 1105.0,1141.5 1105.7,1133.8 1106.5,1130.1 1107.3,1128.1 1108.1,1131.4 1108.9,1131.8 1109.7,1131.3 1110.5,1127.0 1111.3,1131.7 1112.1,1128.9 1112.9,1130.7 1113.7,1127.1 1114.5,1129.8 1115.3,1126.5 1116.1,1127.6 1116.9,1127.2 1117.7,1125.0 1118.5,1123.0 1119.3,1129.8 1120.1,1123.2 1120.9,1122.3 1121.7,1125.7 1122.4,1120.5 1123.2,1122.1 1124.0,1120.0 1124.8,1126.5 1125.6,1130.3 1126.4,1123.8 1127.2,1118.9 1128.0,1123.0 1128.8,1125.6 1129.6,1129.6 1130.4,1134.5 1131.2,1132.2 1132.0,1128.7 1132.8,1137.6 1133.6,1137.6 1134.4,1141.6 1135.2,1138.7 1136.0,1135.1 1136.8,1141.6 1137.6,1142.6 1138.4,1137.6 1139.1,1140.8 1139.9,1147.9 1140.7,1150.0 1141.5,1152.9 1142.3,1146.1 1143.1,1147.0 1143.9,1144.1 1144.7,1144.2 1145.5,1150.9 1146.3,1153.9 1147.1,1151.4 1147.9,1152.7 1148.7,1153.2 1149.5,1158.5 1150.3,1152.6 1151.1,1155.8 1151.9,1161.8 1152.7,1158.8 1153.5,1156.3 1154.3,1150.5 1155.1,1156.0 1155.9,1161.6 1156.6,1156.8 1157.4,1160.6 1158.2,1160.3 1159.0,1163.9 1159.8,1165.8 1160.6,1159.2 1161.4,1161.6 1162.2,1163.6 1163.0,1164.9 1163.8,1161.0 1164.6,1166.2 1165.4,1165.7 1166.2,1166.0 1167.0,1165.1 1167.8,1167.9 1168.6,1165.9 1169.4,1163.7 1170.2,1169.3 1171.0,1172.8 1171.8,1174.7 1172.6,1170.6 1173.3,1170.8 1174.1,1171.4 1174.9,1172.1 1175.7,1173.5 1176.5,1167.3 1177.3,1163.1 1178.1,1164.0 1178.9,1161.9 1179.7,1158.0 1180.5,1156.8 1181.3,1156.6 1182.1,1149.8 1182.9,1149.8 1183.7,1150.6 1184.5,1151.8 1185.3,1147.4 1186.1,1148.1 1186.9,1146.4 1187.7,1141.8 1188.5,1137.8 1189.3,1136.2 1190.0,1137.2 1190.8,1138.6 1191.6,1138.8 1192.4,1137.7 1193.2,1135.6 1194.0,1135.4 1194.8,1137.6 1195.6,1133.3 1196.4,1134.2 1197.2,1135.7 1198.0,1139.8 1198.8,1136.8 1199.6,1136.6 1200.4,1135.5 1201.2,1136.7 1202.0,1137.1 1202.8,1136.7 1203.6,1133.8 1204.4,1132.9 1205.2,1135.1 1206.0,1135.1 1206.7,1130.7 1207.5,1130.9 1208.3,1132.4 1209.1,1128.7 1209.9,1126.5 1210.7,1126.4 1211.5,1129.7 1212.3,1130.8 1213.1,1133.9 1213.9,1129.5 1214.7,1136.9 1215.5,1132.3 1216.3,1131.5 1217.1,1128.5 1217.9,1130.2 1218.7,1132.3 1219.5,1136.3 1220.3,1133.6 1221.1,1129.4 1221.9,1126.9 1222.7,1127.6 1223.4,1129.6 1224.2,1128.1 1225.0,1123.8 1225.8,1127.1 1226.6,1125.0 1227.4,1120.2 1228.2,1122.8 1229.0,1126.0 1229.8,1123.2 1230.6,1125.1 1231.4,1123.7 1232.2,1117.4 1233.0,1113.9 1233.8,1124.6 1234.6,1121.9 1235.4,1117.8 1236.2,1123.7 1237.0,1123.9 1237.8,1119.2 1238.6,1123.2 1239.4,1120.7 1240.1,1121.8 1240.9,1128.2 1241.7,1123.1 1242.5,1124.3 1243.3,1121.0 1244.1,1117.5 1244.9,1119.1 1245.7,1125.8 1246.5,1123.5 1247.3,1122.8 1248.1,1120.7 1248.9,1126.8 1249.7,1127.8 1250.5,1129.5 1251.3,1121.4 1252.1,1121.7 1252.9,1122.2 1253.7,1124.2 1254.5,1124.0 1255.3,1125.0 1256.1,1125.3 1256.8,1125.2 1257.6,1120.7 1258.4,1121.4 1259.2,1126.3 1260.0,1128.5 1260.8,1124.6 1261.6,1124.9 1262.4,1124.9 1263.2,1123.3 1264.0,1121.2 1264.8,1127.4 1265.6,1128.7 1266.4,1131.9 1267.2,1125.3 1268.0,1126.4 1268.8,1129.5 1269.6,1129.2 1270.4,1125.2 1271.2,1127.1 1272.0,1127.6 1272.8,1124.2 1273.5,1129.4 1274.3,1132.3 1275.1,1120.1 1275.9,1128.5 1276.7,1131.4 1277.5,1133.1 1278.3,1131.6 1279.1,1130.1 1279.9,1130.9 1280.7,1130.7 1281.5,1134.7 1282.3,1139.6 1283.1,1136.8 1283.9,1132.7 1284.7,1134.9 1285.5,1139.7 1286.3,1138.6 1287.1,1141.9 1287.9,1141.1 1288.7,1144.4 1289.5,1142.5 1290.2,1141.0 1291.0,1140.3 1291.8,1138.5 1292.6,1134.8 1293.4,1136.7 1294.2,1142.4 1295.0,1143.9 1295.8,1144.3 1296.6,1147.1 1297.4,1144.2 1298.2,1142.1 1299.0,1143.0 1299.8,1142.1 1300.6,1142.1 1301.4,1142.6 1302.2,1143.3 1303.0,1137.2 1303.8,1135.8 1304.6,1141.5 1305.4,1143.0 1306.2,1140.8 1306.9,1138.1 1307.7,1133.9 1308.5,1132.8 1309.3,1131.6 1310.1,1132.3 1310.9,1130.6 1311.7,1130.9 1312.5,1132.6 1313.3,1134.6 1314.1,1137.9 1314.9,1135.2 1315.7,1125.5 1316.5,1130.7 1317.3,1131.3 1318.1,1128.8 1318.9,1129.2 1319.7,1130.6 1320.5,1123.8 1321.3,1123.7 1322.1,1123.2 1322.9,1124.2 1323.7,1121.3 1324.4,1121.9 1325.2,1120.5 1326.0,1122.3 1326.8,1122.5 1327.6,1123.9 1328.4,1123.9 1329.2,1129.1 1330.0,1126.8 1330.8,1124.8 1331.6,1127.7 1332.4,1129.9 1333.2,1127.7 1334.0,1129.4 1334.8,1125.6 1335.6,1127.1 1336.4,1130.4 1337.2,1128.7 1338.0,1126.7 1338.8,1127.5 1339.6,1127.5 1340.4,1130.9 1341.1,1132.2 1341.9,1133.2 1342.7,1130.0 1343.5,1123.5 1344.3,1124.6 1345.1,1123.7 1345.9,1124.7 1346.7,1134.8 1347.5,1132.9 1348.3,1131.9 1349.1,1124.2 1349.9,1123.8 1350.7,1130.1 1351.5,1130.6 1352.3,1128.4 1353.1,1131.6 1353.9,1132.3 1354.7,1131.5 1355.5,1127.8 1356.3,1131.5 1357.1,1125.0 1357.8,1125.7 1358.6,1126.1 1359.4,1121.2 1360.2,1127.7 1361.0,1129.5 1361.8,1127.0 1362.6,1130.5 1363.4,1130.7 1364.2,1127.0 1365.0,1124.4 1365.8,1126.4 1366.6,1121.6 1367.4,1113.7 1368.2,1107.6 1369.0,1110.0 1369.8,1098.7 1370.6,1091.8 1371.4,1090.7 1372.2,1088.2 1373.0,1078.3 1373.8,1075.2 1374.5,1069.9 1375.3,1064.7 1376.1,1062.9 1376.9,1057.9 1377.7,1054.4 1378.5,1047.5 1379.3,1038.2 1380.1,1032.7 1380.9,1031.7 1381.7,1031.3 1382.5,1022.9 1383.3,1023.6 1384.1,1023.7 1384.9,1028.3 1385.7,1021.9 1386.5,1023.9 1387.3,1023.6 1388.1,1024.8 1388.9,1022.3 1389.7,1018.4 1390.5,1019.7 1391.2,1018.9 1392.0,1016.7 1392.8,1016.9 1393.6,1014.5 1394.4,1013.6 1395.2,1015.2 1396.0,1010.1 1396.8,1012.1 1397.6,1006.8 1398.4,1004.4 1399.2,1008.3 1400.0,1006.5 1400.8,1007.3 1401.6,1009.9 1402.4,1005.9 1403.2,1003.4 1404.0,998.6 1404.8,997.4 1405.6,1001.1 1406.4,1000.2 1407.2,996.4 1407.9,992.9 1408.7,1002.6 1409.5,994.6 1410.3,997.6 1411.1,993.2 1411.9,997.0 1412.7,999.9 1413.5,997.1 1414.3,991.3 1415.1,993.5 1415.9,1001.5 1416.7,995.4 1417.5,999.4 1418.3,997.0 1419.1,997.3 1419.9,999.4 1420.7,999.7 1421.5,998.2 1422.3,996.2 1423.1,994.7 1423.9,995.0 1424.6,999.1 1425.4,995.5 1426.2,990.1 1427.0,988.8 1427.8,990.6 1428.6,990.1 1429.4,990.0 1430.2,989.3 1431.0,988.3 1431.8,993.6 1432.6,995.1 1433.4,989.5 1434.2,987.3 1435.0,985.6 1435.8,996.4 1436.6,994.4 1437.4,1002.6 1438.2,995.5 1439.0,993.1 1439.8,993.8 1440.6,995.0 1441.3,989.3 1442.1,994.3 1442.9,992.4 1443.7,993.2 1444.5,994.7 1445.3,994.7 1446.1,995.7 1446.9,999.1 1447.7,995.4 1448.5,993.8 1449.3,996.7 1450.1,994.5 1450.9,992.7 1451.7,1001.0 1452.5,1000.0 1453.3,1000.5 1454.1,1004.1 1454.9,1004.0 1455.7,1005.7 1456.5,1005.6 1457.3,1002.4 1458.0,1001.5 1458.8,1001.5 1459.6,996.7 1460.4,1003.6 1461.2,1005.5 1462.0,1011.9 1462.8,1009.7 1463.6,1009.5 1464.4,1010.8 1465.2,1018.9 1466.0,1022.8 1466.8,1022.5 1467.6,1027.2 1468.4,1029.0 1469.2,1036.6 1470.0,1036.0 1470.8,1038.3 1471.6,1042.6 1472.4,1050.7 1473.2,1055.1 1474.0,1057.3 1474.7,1059.7 1475.5,1064.3 1476.3,1068.8 1477.1,1070.0 1477.9,1069.4 1478.7,1081.4 1479.5,1083.8 1480.3,1086.6 1481.1,1086.5 1481.9,1088.9 1482.7,1084.0 1483.5,1083.0 1484.3,1085.0 1485.1,1086.4 1485.9,1083.6 1486.7,1083.0 1487.5,1082.4 1488.3,1085.4 1489.1,1082.0 1489.9,1087.8 1490.7,1081.7 1491.4,1093.2 1492.2,1087.8 1493.0,1090.1 1493.8,1084.3 1494.6,1090.9 1495.4,1082.8 1496.2,1089.4 1497.0,1083.2 1497.8,1084.3 1498.6,1088.2 1499.4,1089.3 1500.2,1084.6 1501.0,1088.7 1501.8,1098.1 1502.6,1091.5 1503.4,1095.8 1504.2,1103.3 1505.0,1099.2 1505.8,1103.2 1506.6,1101.9 1507.4,1102.0 1508.2,1104.0 1508.9,1102.4 1509.7,1106.3 1510.5,1105.8 1511.3,1106.6 1512.1,1105.1 1512.9,1100.8 1513.7,1107.0 1514.5,1113.4 1515.3,1111.0 1516.1,1113.2 1516.9,1110.4 1517.7,1111.2 1518.5,1112.2 1519.3,1112.4 1520.1,1113.4 1520.9,1111.6 1521.7,1110.6 1522.5,1114.6 1523.3,1114.5 1524.1,1114.0 1524.9,1111.0 1525.6,1111.6 1526.4,1117.0 1527.2,1119.1 1528.0,1123.2 1528.8,1121.9 1529.6,1118.9 1530.4,1117.7 1531.2,1117.8 1532.0,1119.7 1532.8,1124.4 1533.6,1121.0 1534.4,1121.4 1535.2,1120.6 1536.0,1121.0 1536.8,1118.2 1537.6,1118.8 1538.4,1116.6 1539.2,1120.4 1540.0,1117.6 1540.8,1120.7 1541.6,1119.8 1542.3,1114.2 1543.1,1117.3 1543.9,1124.0 1544.7,1117.0 1545.5,1117.6 1546.3,1118.7 1547.1,1121.0 1547.9,1121.4 1548.7,1123.9 1549.5,1126.3 1550.3,1120.4 1551.1,1122.8 1551.9,1125.0 1552.7,1126.9 1553.5,1120.8 1554.3,1120.8 1555.1,1124.5 1555.9,1124.7 1556.7,1121.6 1557.5,1118.3 1558.3,1123.7 1559.0,1116.0 1559.8,1115.2 1560.6,1113.6 1561.4,1108.8 1562.2,1101.4 1563.0,1091.5 1563.8,1089.4 1564.6,1084.0 1565.4,1082.1 1566.2,1073.8 1567.0,1067.4 1567.8,1068.8 1568.6,1063.5 1569.4,1053.1 1570.2,1056.3 1571.0,1049.5 1571.8,1040.8 1572.6,1043.4 1573.4,1038.5 1574.2,1034.3 1575.0,1030.3 1575.7,1032.2 1576.5,1025.5 1577.3,1026.0 1578.1,1023.0 1578.9,1020.9 1579.7,1022.3 1580.5,1022.3 1581.3,1027.0 1582.1,1027.7 1582.9,1026.2 1583.7,1022.7 1584.5,1018.0 1585.3,1023.3 1586.1,1020.6 1586.9,1019.1 1587.7,1020.2 1588.5,1010.4 1589.3,1012.0 1590.1,1008.3 1590.9,1007.6 1591.7,1013.1 1592.4,1017.0 1593.2,1006.1 1594.0,1008.4 1594.8,1009.2 1595.6,1002.6 1596.4,1002.9 1597.2,1003.6 1598.0,1002.0 1598.8,1001.6 1599.6,1002.1 1600.4,1000.4 1601.2,1001.1 1602.0,1002.3 1602.8,1000.2 1603.6,999.0 1604.4,997.2 1605.2,1000.7 1606.0,1000.7 1606.8,1003.9 1607.6,999.6 1608.4,1006.8 1609.1,1002.9 1609.9,1006.3 1610.7,1001.6 1611.5,999.3 1612.3,1004.8 1613.1,1001.9 1613.9,1007.0 1614.7,999.0 1615.5,1002.1 1616.3,1005.1 1617.1,1001.4 1617.9,994.9 1618.7,991.8 1619.5,993.1 1620.3,998.4 1621.1,997.7 1621.9,991.9 1622.7,995.7 1623.5,994.0 1624.3,995.5 1625.1,995.8 1625.8,990.4 1626.6,988.8 1627.4,988.6 1628.2,989.5 1629.0,987.0 1629.8,985.1 1630.6,987.1 1631.4,988.2 1632.2,990.3 1633.0,983.0 1633.8,986.2 1634.6,990.5 1635.4,988.4 1636.2,987.2 1637.0,985.9 1637.8,984.5 1638.6,989.3 1639.4,992.1 1640.2,993.4 1641.0,994.8 1641.8,991.6 1642.5,989.1 1643.3,989.5 1644.1,993.6 1644.9,994.7 1645.7,987.1 1646.5,993.1 1647.3,991.4 1648.1,991.5 1648.9,995.4 1649.7,998.7 1650.5,995.7 1651.3,999.7 1652.1,999.7 1652.9,999.3 1653.7,1002.9 1654.5,1005.7 1655.3,1010.0 1656.1,1014.0 1656.9,1016.5 1657.7,1022.3 1658.5,1030.9 1659.2,1029.3 1660.0,1032.5 1660.8,1036.1 1661.6,1043.2 1662.4,1037.7 1663.2,1040.1 1664.0,1042.2 1664.8,1045.2 1665.6,1051.2 1666.4,1051.6 1667.2,1056.3 1668.0,1050.9 1668.8,1057.8 1669.6,1057.7 1670.4,1066.8 1671.2,1069.7 1672.0,1072.3 1672.8,1070.5 1673.6,1072.8 1674.4,1075.6 1675.2,1082.3 1676.0,1074.7 1676.7,1079.7 1677.5,1074.8 1678.3,1073.5 1679.1,1075.7 1679.9,1076.9 1680.7,1083.2 1681.5,1073.4 1682.3,1078.0 1683.1,1078.4 1683.9,1083.6 1684.7,1084.6 1685.5,1090.2 1686.3,1087.7 1687.1,1085.2 1687.9,1083.8 1688.7,1081.7 1689.5,1087.6 1690.3,1089.9 1691.1,1090.6 1691.9,1086.0 1692.7,1090.9 1693.4,1089.0 1694.2,1097.2 1695.0,1096.9 1695.8,1093.4 1696.6,1096.1 1697.4,1088.0 1698.2,1087.3 1699.0,1100.4 1699.8,1105.3 1700.6,1105.3 1701.4,1101.8 1702.2,1102.9 1703.0,1105.9 1703.8,1113.0 1704.6,1114.3 1705.4,1121.2 1706.2,1120.4 1707.0,1117.1 1707.8,1114.5 1708.6,1119.2 1709.4,1117.7 1710.1,1112.2 1710.9,1116.9 1711.7,1119.3 1712.5,1117.8 1713.3,1117.3 1714.1,1118.8 1714.9,1119.1 1715.7,1123.4 1716.5,1123.8 1717.3,1126.0 1718.1,1120.9 1718.9,1121.5 1719.7,1121.6 1720.5,1120.4 1721.3,1122.1 1722.1,1123.3 1722.9,1124.7 1723.7,1128.2 1724.5,1119.1 1725.3,1125.2 1726.1,1128.0 1726.8,1129.1 1727.6,1126.0 1728.4,1126.6 1729.2,1126.6 1730.0,1128.4 1730.8,1135.0 1731.6,1130.0 1732.4,1126.4 1733.2,1130.2 1734.0,1130.5 1734.8,1128.4 1735.6,1124.2 1736.4,1128.0 1737.2,1132.8 1738.0,1131.8 1738.8,1131.0 1739.6,1133.9 1740.4,1127.3 1741.2,1128.9 1742.0,1126.4 1742.8,1126.0 1743.5,1129.2 1744.3,1125.2 1745.1,1129.2 1745.9,1131.2 1746.7,1128.9 1747.5,1125.1 1748.3,1126.1 1749.1,1125.6 1749.9,1116.8 1750.7,1111.1 1751.5,1102.2 1752.3,1099.9 1753.1,1094.2 1753.9,1092.1 1754.7,1090.4 1755.5,1083.0 1756.3,1075.9 1757.1,1076.7 1757.9,1072.4 1758.7,1068.3 1759.5,1055.9 1760.2,1055.1 1761.0,1047.1 1761.8,1045.7 1762.6,1041.2 1763.4,1039.5 1764.2,1040.9 1765.0,1031.6 1765.8,1025.2 1766.6,1031.5 1767.4,1028.4 1768.2,1024.6 1769.0,1025.8 1769.8,1022.0 1770.6,1025.5 1771.4,1021.2 1772.2,1014.6 1773.0,1019.2 1773.8,1015.4 1774.6,1009.5 1775.4,1012.4 1776.2,1014.4 1776.9,1014.7 1777.7,1012.4 1778.5,1011.9 1779.3,1008.1 1780.1,1014.7 1780.9,1008.8 1781.7,1010.7 1782.5,1007.0 1783.3,1010.0 1784.1,1013.1 1784.9,1010.7 1785.7,1011.7 1786.5,1009.3 1787.3,1005.1 1788.1,1002.7 1788.9,1003.2 1789.7,1004.5 1790.5,1006.2 1791.3,1002.4 1792.1,999.8 1792.9,1003.3 1793.6,1003.2 1794.4,1003.6 1795.2,1001.3 1796.0,998.5 1796.8,1009.6 1797.6,1003.2 1798.4,1003.1 1799.2,1008.8 1800.0,1002.4 1800.8,1000.5 1801.6,997.0 1802.4,1001.6 1803.2,990.5 1804.0,992.8 1804.8,994.4 1805.6,989.5 1806.4,990.9 1807.2,991.7 1808.0,991.0 1808.8,1000.1 1809.6,992.0 1810.3,994.0 1811.1,991.5 1811.9,989.5 1812.7,993.1 1813.5,992.7 1814.3,993.3 1815.1,995.2 1815.9,993.9 1816.7,998.3 1817.5,996.7 1818.3,997.0 1819.1,991.8 1819.9,980.2 1820.7,987.4 1821.5,990.4 1822.3,991.4 1823.1,987.6 1823.9,989.3 1824.7,997.4 1825.5,992.7 1826.3,993.4 1827.0,990.5 1827.8,998.9 1828.6,999.5 1829.4,994.4 1830.2,999.0 1831.0,995.1 1831.8,994.9 1832.6,993.9 1833.4,994.6 1834.2,996.0 1835.0,994.3 1835.8,996.4 1836.6,998.3 1837.4,988.4 1838.2,992.6 1839.0,995.8 1839.8,997.9 1840.6,1000.4 1841.4,1000.1 1842.2,1001.5 1843.0,1000.0 1843.8,1005.4 1844.5,1014.1 1845.3,1012.3 1846.1,1010.3 1846.9,1007.2 1847.7,1011.8 1848.5,1020.3 1849.3,1023.2 1850.1,1029.3 1850.9,1030.8 1851.7,1037.4 1852.5,1043.4 1853.3,1041.5 1854.1,1044.5 1854.9,1049.3 1855.7,1051.5 1856.5,1050.1 1857.3,1057.2 1858.1,1061.5 1858.9,1062.9 1859.7,1069.7 1860.5,1066.0 1861.2,1070.4 1862.0,1074.2 1862.8,1073.8 1863.6,1070.6 1864.4,1076.8 1865.2,1074.4 1866.0,1075.5 1866.8,1082.3 1867.6,1080.6 1868.4,1085.9 1869.2,1089.7 1870.0,1088.6 1870.8,1090.0 1871.6,1086.3 1872.4,1089.1 1873.2,1084.2 1874.0,1086.5 1874.8,1087.8 1875.6,1089.7 1876.4,1085.6 1877.2,1091.9 1877.9,1095.6 1878.7,1092.6 1879.5,1088.5 1880.3,1088.9 1881.1,1092.1 1881.9,1092.8 1882.7,1099.6 1883.5,1095.2 1884.3,1098.7 1885.1,1092.9 1885.9,1094.8 1886.7,1095.4 1887.5,1094.8 1888.3,1095.7 1889.1,1094.2 1889.9,1094.5 1890.7,1096.7 1891.5,1098.8 1892.3,1095.2 1893.1,1091.1 1893.9,1091.4 1894.6,1094.9 1895.4,1094.1 1896.2,1097.5 L1896.2,1205.9 Z" fill="#44fb95" fill-opacity="0.93" stroke="#25d877" stroke-width="1.2" stroke-linejoin="round"/>
<path d="M560.2,1205.9 L560.2,1205.1 561.0,1201.4 561.8,1201.1 562.6,1198.1 563.4,1198.0 564.2,1197.7 565.0,1197.7 565.8,1196.6 566.6,1194.1 567.4,1193.5 568.2,1190.4 568.9,1189.9 569.7,1189.7 570.5,1189.1 571.3,1188.7 572.1,1186.9 572.9,1185.1 573.7,1182.9 574.5,1183.7 575.3,1184.6 576.1,1183.3 576.9,1181.8 577.7,1178.5 578.5,1178.2 579.3,1179.7 580.1,1178.6 580.9,1176.1 581.7,1176.6 582.5,1177.1 583.3,1174.6 584.1,1174.3 584.9,1175.6 585.6,1173.9 586.4,1170.3 587.2,1172.6 588.0,1170.3 588.8,1169.9 589.6,1168.5 590.4,1168.4 591.2,1168.0 592.0,1167.8 592.8,1166.9 593.6,1164.5 594.4,1164.0 595.2,1164.8 596.0,1162.2 596.8,1160.6 597.6,1158.8 598.4,1158.2 599.2,1160.2 600.0,1157.7 600.8,1154.7 601.6,1150.8 602.3,1150.9 603.1,1148.0 603.9,1144.2 604.7,1139.9 605.5,1136.7 606.3,1129.7 607.1,1124.3 607.9,1117.5 608.7,1108.8 609.5,1103.5 610.3,1098.1 611.1,1088.4 611.9,1082.7 612.7,1073.8 613.5,1068.2 614.3,1064.4 615.1,1059.3 615.9,1054.1 616.7,1050.4 617.5,1046.6 618.3,1044.1 619.0,1041.2 619.8,1040.1 620.6,1038.5 621.4,1035.7 622.2,1035.2 623.0,1034.5 623.8,1034.7 624.6,1035.2 625.4,1035.3 626.2,1031.1 627.0,1032.3 627.8,1031.2 628.6,1031.5 629.4,1028.3 630.2,1029.4 631.0,1031.7 631.8,1030.0 632.6,1030.1 633.4,1030.4 634.2,1029.6 635.0,1027.4 635.7,1027.9 636.5,1028.3 637.3,1026.3 638.1,1024.7 638.9,1027.7 639.7,1026.0 640.5,1026.2 641.3,1026.3 642.1,1027.5 642.9,1027.1 643.7,1023.5 644.5,1023.8 645.3,1023.8 646.1,1021.7 646.9,1021.8 647.7,1022.9 648.5,1024.7 649.3,1023.8 650.1,1021.7 650.9,1025.5 651.7,1025.1 652.5,1024.9 653.2,1022.7 654.0,1023.9 654.8,1022.4 655.6,1021.6 656.4,1021.3 657.2,1019.4 658.0,1016.4 658.8,1019.0 659.6,1018.7 660.4,1019.7 661.2,1017.5 662.0,1017.9 662.8,1018.1 663.6,1018.9 664.4,1018.5 665.2,1017.6 666.0,1017.2 666.8,1017.5 667.6,1013.2 668.4,1014.0 669.2,1013.5 669.9,1013.0 670.7,1015.2 671.5,1014.2 672.3,1014.7 673.1,1013.1 673.9,1011.9 674.7,1010.5 675.5,1010.0 676.3,1008.1 677.1,1008.4 677.9,1007.4 678.7,1005.5 679.5,1004.0 680.3,1005.1 681.1,1008.2 681.9,1008.0 682.7,1006.4 683.5,1006.4 684.3,1005.5 685.1,1005.6 685.9,1006.7 686.6,1008.8 687.4,1011.3 688.2,1009.0 689.0,1008.7 689.8,1011.5 690.6,1012.3 691.4,1013.0 692.2,1013.6 693.0,1011.3 693.8,1012.8 694.6,1011.6 695.4,1014.3 696.2,1017.4 697.0,1019.3 697.8,1020.1 698.6,1024.2 699.4,1026.0 700.2,1032.0 701.0,1032.4 701.8,1037.5 702.6,1040.8 703.3,1042.5 704.1,1048.2 704.9,1051.9 705.7,1057.2 706.5,1061.9 707.3,1065.2 708.1,1067.5 708.9,1072.9 709.7,1077.2 710.5,1083.1 711.3,1088.9 712.1,1091.3 712.9,1095.8 713.7,1099.4 714.5,1102.7 715.3,1107.1 716.1,1113.3 716.9,1115.5 717.7,1118.9 718.5,1123.6 719.3,1129.8 720.0,1133.1 720.8,1136.0 721.6,1138.6 722.4,1143.9 723.2,1148.9 724.0,1148.9 724.8,1152.3 725.6,1155.4 726.4,1155.7 727.2,1157.2 728.0,1158.6 728.8,1160.1 729.6,1161.4 730.4,1160.3 731.2,1162.6 732.0,1163.1 732.8,1167.1 733.6,1167.8 734.4,1168.7 735.2,1169.5 736.0,1172.0 736.7,1171.4 737.5,1170.0 738.3,1171.5 739.1,1173.5 739.9,1175.0 740.7,1176.4 741.5,1176.5 742.3,1178.1 743.1,1178.4 743.9,1177.2 744.7,1176.6 745.5,1177.5 746.3,1179.6 747.1,1180.5 747.9,1177.6 748.7,1180.8 749.5,1179.5 750.3,1180.9 751.1,1180.4 751.9,1181.7 752.7,1183.0 753.4,1182.6 754.2,1179.0 755.0,1180.5 755.8,1180.9 756.6,1178.5 757.4,1180.4 758.2,1178.7 759.0,1177.7 759.8,1176.5 760.6,1176.8 761.4,1176.5 762.2,1179.5 763.0,1176.6 763.8,1176.2 764.6,1175.1 765.4,1173.8 766.2,1172.6 767.0,1173.4 767.8,1172.4 768.6,1170.5 769.4,1171.1 770.1,1171.9 770.9,1173.8 771.7,1170.7 772.5,1172.8 773.3,1168.5 774.1,1168.4 774.9,1170.0 775.7,1168.4 776.5,1170.7 777.3,1171.5 778.1,1168.9 778.9,1169.5 779.7,1168.9 780.5,1167.4 781.3,1164.7 782.1,1164.7 782.9,1163.4 783.7,1162.7 784.5,1163.3 785.3,1162.8 786.1,1161.9 786.8,1159.9 787.6,1159.9 788.4,1159.2 789.2,1159.3 790.0,1156.8 790.8,1153.7 791.6,1153.3 792.4,1151.6 793.2,1148.7 794.0,1144.4 794.8,1142.5 795.6,1135.5 796.4,1129.9 797.2,1126.2 798.0,1121.5 798.8,1113.7 799.6,1108.2 800.4,1103.4 801.2,1099.2 802.0,1093.7 802.8,1089.7 803.5,1084.2 804.3,1077.8 805.1,1072.2 805.9,1068.5 806.7,1064.2 807.5,1057.9 808.3,1053.0 809.1,1049.6 809.9,1042.0 810.7,1042.4 811.5,1038.5 812.3,1038.5 813.1,1035.9 813.9,1034.9 814.7,1033.9 815.5,1034.1 816.3,1034.9 817.1,1032.2 817.9,1033.1 818.7,1032.8 819.5,1032.2 820.3,1032.4 821.0,1032.0 821.8,1029.8 822.6,1028.5 823.4,1030.1 824.2,1030.6 825.0,1030.2 825.8,1030.9 826.6,1029.2 827.4,1029.4 828.2,1031.9 829.0,1029.4 829.8,1030.0 830.6,1028.7 831.4,1027.9 832.2,1028.3 833.0,1026.7 833.8,1024.8 834.6,1027.0 835.4,1028.8 836.2,1027.1 837.0,1027.2 837.7,1023.4 838.5,1023.0 839.3,1023.2 840.1,1023.5 840.9,1026.0 841.7,1026.0 842.5,1023.9 843.3,1023.0 844.1,1022.7 844.9,1021.1 845.7,1020.8 846.5,1022.5 847.3,1021.4 848.1,1021.4 848.9,1018.1 849.7,1020.4 850.5,1018.4 851.3,1016.5 852.1,1018.9 852.9,1017.6 853.7,1015.4 854.4,1017.4 855.2,1017.9 856.0,1018.0 856.8,1016.4 857.6,1016.8 858.4,1017.9 859.2,1019.2 860.0,1020.3 860.8,1017.6 861.6,1020.6 862.4,1018.9 863.2,1016.2 864.0,1018.1 864.8,1017.6 865.6,1016.5 866.4,1014.1 867.2,1015.8 868.0,1014.5 868.8,1013.8 869.6,1014.0 870.4,1016.2 871.1,1013.3 871.9,1013.3 872.7,1012.0 873.5,1012.3 874.3,1008.6 875.1,1010.6 875.9,1008.8 876.7,1011.4 877.5,1011.2 878.3,1009.3 879.1,1011.1 879.9,1011.6 880.7,1010.9 881.5,1012.6 882.3,1013.6 883.1,1013.9 883.9,1011.7 884.7,1013.2 885.5,1012.3 886.3,1015.1 887.1,1017.0 887.8,1018.0 888.6,1018.1 889.4,1019.3 890.2,1019.7 891.0,1020.7 891.8,1023.5 892.6,1026.5 893.4,1028.4 894.2,1034.5 895.0,1039.0 895.8,1043.5 896.6,1048.2 897.4,1054.8 898.2,1060.9 899.0,1068.5 899.8,1074.8 900.6,1078.1 901.4,1080.1 902.2,1083.7 903.0,1089.5 903.8,1094.9 904.5,1098.2 905.3,1104.4 906.1,1108.0 906.9,1113.9 907.7,1116.5 908.5,1118.9 909.3,1122.0 910.1,1128.2 910.9,1132.6 911.7,1138.6 912.5,1141.9 913.3,1142.5 914.1,1145.2 914.9,1147.6 915.7,1149.7 916.5,1149.6 917.3,1152.7 918.1,1154.6 918.9,1152.4 919.7,1156.5 920.5,1157.2 921.2,1159.3 922.0,1158.6 922.8,1161.4 923.6,1162.9 924.4,1163.8 925.2,1163.9 926.0,1167.0 926.8,1169.0 927.6,1168.5 928.4,1168.9 929.2,1169.9 930.0,1171.3 930.8,1173.2 931.6,1173.0 932.4,1173.1 933.2,1172.4 934.0,1174.7 934.8,1177.7 935.6,1178.8 936.4,1179.2 937.2,1181.3 937.9,1181.6 938.7,1183.6 939.5,1183.6 940.3,1185.4 941.1,1185.0 941.9,1188.6 942.7,1190.3 943.5,1190.1 944.3,1187.0 945.1,1190.1 945.9,1191.6 946.7,1192.6 947.5,1193.3 948.3,1192.7 949.1,1192.5 949.9,1190.6 950.7,1190.3 951.5,1191.2 952.3,1190.0 953.1,1190.5 953.9,1192.3 954.6,1189.7 955.4,1191.7 956.2,1190.7 957.0,1191.7 957.8,1191.2 958.6,1190.1 959.4,1191.0 960.2,1193.2 961.0,1192.3 961.8,1192.0 962.6,1192.4 963.4,1192.9 964.2,1192.5 965.0,1192.7 965.8,1191.5 966.6,1192.1 967.4,1190.9 968.2,1192.2 969.0,1194.3 969.8,1192.5 970.6,1192.2 971.3,1192.8 972.1,1192.1 972.9,1192.6 973.7,1193.0 974.5,1191.0 975.3,1193.4 976.1,1192.9 976.9,1191.5 977.7,1191.8 978.5,1189.8 979.3,1190.5 980.1,1188.3 980.9,1188.2 981.7,1185.2 982.5,1185.9 983.3,1182.6 984.1,1183.2 984.9,1182.4 985.7,1182.4 986.5,1181.4 987.3,1180.2 988.1,1177.7 988.8,1175.5 989.6,1174.7 990.4,1173.5 991.2,1171.6 992.0,1168.1 992.8,1168.5 993.6,1165.7 994.4,1165.3 995.2,1162.0 996.0,1160.2 996.8,1160.4 997.6,1159.7 998.4,1157.3 999.2,1155.7 1000.0,1155.7 1000.8,1154.9 1001.6,1154.8 1002.4,1154.4 1003.2,1154.5 1004.0,1154.7 1004.8,1157.5 1005.5,1156.5 1006.3,1154.5 1007.1,1154.8 1007.9,1155.5 1008.7,1156.4 1009.5,1154.2 1010.3,1155.2 1011.1,1156.5 1011.9,1154.1 1012.7,1155.1 1013.5,1153.6 1014.3,1154.8 1015.1,1156.4 1015.9,1153.5 1016.7,1151.4 1017.5,1156.3 1018.3,1155.1 1019.1,1153.1 1019.9,1153.0 1020.7,1153.4 1021.5,1152.5 1022.2,1153.0 1023.0,1150.6 1023.8,1149.1 1024.6,1149.4 1025.4,1151.6 1026.2,1148.1 1027.0,1148.9 1027.8,1148.7 1028.6,1146.3 1029.4,1146.6 1030.2,1148.0 1031.0,1146.9 1031.8,1147.4 1032.6,1147.5 1033.4,1146.4 1034.2,1148.7 1035.0,1148.5 1035.8,1146.3 1036.6,1144.5 1037.4,1145.6 1038.2,1143.3 1038.9,1143.6 1039.7,1141.6 1040.5,1143.3 1041.3,1139.6 1042.1,1141.5 1042.9,1142.8 1043.7,1142.6 1044.5,1145.7 1045.3,1143.8 1046.1,1143.1 1046.9,1141.3 1047.7,1141.8 1048.5,1145.3 1049.3,1145.5 1050.1,1143.9 1050.9,1144.6 1051.7,1142.8 1052.5,1145.4 1053.3,1142.8 1054.1,1143.1 1054.9,1142.7 1055.6,1144.1 1056.4,1145.0 1057.2,1145.7 1058.0,1144.7 1058.8,1144.2 1059.6,1144.3 1060.4,1142.6 1061.2,1144.9 1062.0,1144.4 1062.8,1144.1 1063.6,1144.1 1064.4,1142.3 1065.2,1142.5 1066.0,1144.6 1066.8,1144.6 1067.6,1144.1 1068.4,1144.1 1069.2,1143.4 1070.0,1145.1 1070.8,1143.3 1071.6,1143.4 1072.3,1144.0 1073.1,1143.6 1073.9,1147.1 1074.7,1146.7 1075.5,1147.3 1076.3,1146.8 1077.1,1148.1 1077.9,1149.7 1078.7,1151.0 1079.5,1155.8 1080.3,1157.3 1081.1,1156.2 1081.9,1155.9 1082.7,1159.9 1083.5,1160.2 1084.3,1160.7 1085.1,1164.7 1085.9,1165.9 1086.7,1165.9 1087.5,1168.2 1088.3,1168.4 1089.0,1169.9 1089.8,1172.5 1090.6,1175.9 1091.4,1177.4 1092.2,1178.4 1093.0,1176.4 1093.8,1176.4 1094.6,1178.6 1095.4,1179.6 1096.2,1182.8 1097.0,1180.8 1097.8,1183.1 1098.6,1181.6 1099.4,1181.6 1100.2,1184.8 1101.0,1186.0 1101.8,1184.8 1102.6,1184.6 1103.4,1187.3 1104.2,1189.8 1105.0,1188.7 1105.7,1187.6 1106.5,1190.6 1107.3,1190.2 1108.1,1188.1 1108.9,1188.8 1109.7,1190.7 1110.5,1189.6 1111.3,1188.9 1112.1,1188.6 1112.9,1189.4 1113.7,1189.6 1114.5,1191.8 1115.3,1189.2 1116.1,1188.3 1116.9,1187.6 1117.7,1188.6 1118.5,1188.9 1119.3,1188.2 1120.1,1189.8 1120.9,1191.3 1121.7,1189.6 1122.4,1190.1 1123.2,1191.1 1124.0,1190.3 1124.8,1190.6 1125.6,1190.2 1126.4,1191.6 1127.2,1189.1 1128.0,1191.6 1128.8,1189.1 1129.6,1191.7 1130.4,1191.5 1131.2,1190.6 1132.0,1188.1 1132.8,1188.9 1133.6,1189.6 1134.4,1190.9 1135.2,1188.5 1136.0,1189.4 1136.8,1189.0 1137.6,1189.4 1138.4,1190.0 1139.1,1189.1 1139.9,1188.5 1140.7,1187.5 1141.5,1188.5 1142.3,1190.6 1143.1,1188.8 1143.9,1189.4 1144.7,1189.4 1145.5,1193.0 1146.3,1192.0 1147.1,1189.5 1147.9,1190.1 1148.7,1189.8 1149.5,1188.9 1150.3,1189.5 1151.1,1190.4 1151.9,1189.6 1152.7,1189.2 1153.5,1190.4 1154.3,1192.8 1155.1,1192.2 1155.9,1189.6 1156.6,1188.9 1157.4,1191.0 1158.2,1189.3 1159.0,1189.1 1159.8,1187.1 1160.6,1186.9 1161.4,1187.6 1162.2,1188.5 1163.0,1190.0 1163.8,1187.8 1164.6,1184.6 1165.4,1187.6 1166.2,1185.1 1167.0,1187.1 1167.8,1187.7 1168.6,1186.3 1169.4,1187.0 1170.2,1186.9 1171.0,1187.5 1171.8,1186.3 1172.6,1184.8 1173.3,1186.9 1174.1,1184.9 1174.9,1182.6 1175.7,1180.7 1176.5,1182.4 1177.3,1176.6 1178.1,1176.8 1178.9,1175.0 1179.7,1174.2 1180.5,1173.8 1181.3,1171.5 1182.1,1170.2 1182.9,1168.2 1183.7,1165.2 1184.5,1164.3 1185.3,1160.9 1186.1,1161.0 1186.9,1158.6 1187.7,1161.8 1188.5,1159.6 1189.3,1159.1 1190.0,1159.1 1190.8,1157.8 1191.6,1156.8 1192.4,1156.9 1193.2,1156.5 1194.0,1156.6 1194.8,1156.3 1195.6,1157.4 1196.4,1155.8 1197.2,1155.9 1198.0,1154.5 1198.8,1155.9 1199.6,1155.8 1200.4,1152.7 1201.2,1153.6 1202.0,1156.3 1202.8,1154.1 1203.6,1153.5 1204.4,1153.4 1205.2,1152.7 1206.0,1153.7 1206.7,1152.3 1207.5,1152.0 1208.3,1152.6 1209.1,1151.9 1209.9,1152.1 1210.7,1150.8 1211.5,1150.3 1212.3,1151.4 1213.1,1152.1 1213.9,1152.6 1214.7,1152.5 1215.5,1150.9 1216.3,1155.1 1217.1,1156.0 1217.9,1154.8 1218.7,1151.9 1219.5,1151.0 1220.3,1152.3 1221.1,1151.5 1221.9,1151.4 1222.7,1150.6 1223.4,1148.6 1224.2,1153.0 1225.0,1148.5 1225.8,1148.1 1226.6,1149.1 1227.4,1148.5 1228.2,1149.3 1229.0,1148.2 1229.8,1146.6 1230.6,1145.5 1231.4,1148.2 1232.2,1146.6 1233.0,1148.0 1233.8,1148.0 1234.6,1146.9 1235.4,1148.5 1236.2,1148.7 1237.0,1148.1 1237.8,1148.7 1238.6,1150.5 1239.4,1148.9 1240.1,1148.6 1240.9,1146.2 1241.7,1149.2 1242.5,1147.7 1243.3,1148.6 1244.1,1148.5 1244.9,1145.3 1245.7,1146.5 1246.5,1146.2 1247.3,1146.5 1248.1,1147.5 1248.9,1147.5 1249.7,1147.9 1250.5,1148.9 1251.3,1145.3 1252.1,1146.1 1252.9,1148.2 1253.7,1145.6 1254.5,1147.5 1255.3,1146.7 1256.1,1146.0 1256.8,1148.2 1257.6,1147.8 1258.4,1147.6 1259.2,1147.9 1260.0,1148.0 1260.8,1147.2 1261.6,1146.0 1262.4,1146.4 1263.2,1146.6 1264.0,1146.2 1264.8,1150.5 1265.6,1149.3 1266.4,1149.1 1267.2,1149.3 1268.0,1147.7 1268.8,1149.0 1269.6,1149.6 1270.4,1153.1 1271.2,1153.6 1272.0,1155.9 1272.8,1157.2 1273.5,1157.4 1274.3,1159.0 1275.1,1161.2 1275.9,1160.1 1276.7,1161.0 1277.5,1162.7 1278.3,1167.8 1279.1,1167.0 1279.9,1169.6 1280.7,1168.7 1281.5,1172.0 1282.3,1174.9 1283.1,1175.6 1283.9,1178.5 1284.7,1178.0 1285.5,1179.8 1286.3,1179.7 1287.1,1179.6 1287.9,1179.6 1288.7,1181.1 1289.5,1183.6 1290.2,1185.8 1291.0,1184.5 1291.8,1183.6 1292.6,1186.5 1293.4,1185.3 1294.2,1185.8 1295.0,1189.4 1295.8,1188.1 1296.6,1185.8 1297.4,1187.3 1298.2,1186.6 1299.0,1186.9 1299.8,1189.9 1300.6,1191.7 1301.4,1191.8 1302.2,1190.1 1303.0,1190.9 1303.8,1190.0 1304.6,1188.9 1305.4,1187.7 1306.2,1191.0 1306.9,1191.3 1307.7,1190.8 1308.5,1190.5 1309.3,1193.3 1310.1,1188.2 1310.9,1190.2 1311.7,1190.6 1312.5,1193.8 1313.3,1192.1 1314.1,1193.4 1314.9,1191.5 1315.7,1191.3 1316.5,1189.8 1317.3,1188.3 1318.1,1188.9 1318.9,1188.0 1319.7,1190.3 1320.5,1187.8 1321.3,1187.4 1322.1,1184.0 1322.9,1185.8 1323.7,1189.2 1324.4,1185.4 1325.2,1186.2 1326.0,1186.6 1326.8,1185.4 1327.6,1182.6 1328.4,1180.6 1329.2,1182.4 1330.0,1181.0 1330.8,1180.6 1331.6,1181.8 1332.4,1181.2 1333.2,1180.7 1334.0,1179.3 1334.8,1176.9 1335.6,1179.6 1336.4,1176.8 1337.2,1176.0 1338.0,1174.3 1338.8,1176.3 1339.6,1176.8 1340.4,1175.9 1341.1,1174.8 1341.9,1174.9 1342.7,1174.3 1343.5,1173.9 1344.3,1173.2 1345.1,1172.5 1345.9,1171.9 1346.7,1170.8 1347.5,1171.0 1348.3,1167.7 1349.1,1167.0 1349.9,1166.3 1350.7,1166.5 1351.5,1163.7 1352.3,1163.3 1353.1,1163.1 1353.9,1162.3 1354.7,1161.3 1355.5,1159.3 1356.3,1159.8 1357.1,1160.1 1357.8,1158.9 1358.6,1158.6 1359.4,1156.6 1360.2,1155.4 1361.0,1154.1 1361.8,1153.2 1362.6,1153.8 1363.4,1153.2 1364.2,1151.3 1365.0,1147.1 1365.8,1144.5 1366.6,1141.3 1367.4,1137.6 1368.2,1130.9 1369.0,1127.3 1369.8,1124.3 1370.6,1116.0 1371.4,1109.8 1372.2,1104.5 1373.0,1099.0 1373.8,1093.7 1374.5,1089.9 1375.3,1086.3 1376.1,1082.3 1376.9,1079.3 1377.7,1074.9 1378.5,1067.7 1379.3,1061.8 1380.1,1058.6 1380.9,1055.7 1381.7,1050.2 1382.5,1047.6 1383.3,1044.9 1384.1,1042.7 1384.9,1040.9 1385.7,1039.0 1386.5,1036.9 1387.3,1034.4 1388.1,1033.1 1388.9,1034.4 1389.7,1033.5 1390.5,1033.4 1391.2,1033.2 1392.0,1031.6 1392.8,1029.8 1393.6,1032.0 1394.4,1028.7 1395.2,1028.9 1396.0,1029.7 1396.8,1025.5 1397.6,1027.9 1398.4,1026.5 1399.2,1027.4 1400.0,1024.3 1400.8,1026.9 1401.6,1024.6 1402.4,1025.0 1403.2,1021.0 1404.0,1019.3 1404.8,1019.8 1405.6,1020.9 1406.4,1019.3 1407.2,1017.5 1407.9,1020.5 1408.7,1022.2 1409.5,1020.2 1410.3,1022.6 1411.1,1021.6 1411.9,1020.5 1412.7,1019.0 1413.5,1017.4 1414.3,1017.0 1415.1,1018.3 1415.9,1018.6 1416.7,1018.1 1417.5,1016.9 1418.3,1015.7 1419.1,1015.5 1419.9,1018.3 1420.7,1016.9 1421.5,1018.6 1422.3,1016.4 1423.1,1018.2 1423.9,1017.9 1424.6,1018.2 1425.4,1016.1 1426.2,1016.6 1427.0,1013.2 1427.8,1013.8 1428.6,1016.9 1429.4,1017.3 1430.2,1015.2 1431.0,1015.4 1431.8,1015.1 1432.6,1015.2 1433.4,1017.3 1434.2,1017.9 1435.0,1015.2 1435.8,1016.1 1436.6,1015.6 1437.4,1014.8 1438.2,1017.3 1439.0,1017.8 1439.8,1015.4 1440.6,1015.8 1441.3,1016.3 1442.1,1014.8 1442.9,1016.6 1443.7,1016.5 1444.5,1015.6 1445.3,1017.3 1446.1,1014.4 1446.9,1014.2 1447.7,1015.9 1448.5,1014.3 1449.3,1016.4 1450.1,1015.9 1450.9,1016.9 1451.7,1015.3 1452.5,1015.9 1453.3,1015.9 1454.1,1017.3 1454.9,1016.7 1455.7,1017.7 1456.5,1018.8 1457.3,1019.7 1458.0,1021.1 1458.8,1023.2 1459.6,1024.9 1460.4,1023.7 1461.2,1026.4 1462.0,1026.5 1462.8,1029.0 1463.6,1031.1 1464.4,1034.5 1465.2,1035.6 1466.0,1041.3 1466.8,1045.1 1467.6,1049.1 1468.4,1053.8 1469.2,1057.6 1470.0,1063.9 1470.8,1068.3 1471.6,1070.2 1472.4,1075.3 1473.2,1080.2 1474.0,1084.1 1474.7,1091.0 1475.5,1095.8 1476.3,1100.3 1477.1,1105.2 1477.9,1107.4 1478.7,1112.5 1479.5,1117.0 1480.3,1122.8 1481.1,1127.3 1481.9,1132.0 1482.7,1135.8 1483.5,1139.6 1484.3,1143.3 1485.1,1146.1 1485.9,1147.0 1486.7,1150.1 1487.5,1152.5 1488.3,1151.6 1489.1,1151.5 1489.9,1153.8 1490.7,1153.6 1491.4,1158.0 1492.2,1157.7 1493.0,1158.4 1493.8,1156.8 1494.6,1159.7 1495.4,1159.6 1496.2,1163.5 1497.0,1165.0 1497.8,1166.9 1498.6,1168.8 1499.4,1168.9 1500.2,1167.6 1501.0,1171.1 1501.8,1170.8 1502.6,1170.2 1503.4,1170.7 1504.2,1172.3 1505.0,1173.3 1505.8,1174.1 1506.6,1177.1 1507.4,1174.5 1508.2,1175.4 1508.9,1176.1 1509.7,1176.6 1510.5,1176.6 1511.3,1176.5 1512.1,1179.2 1512.9,1180.8 1513.7,1180.6 1514.5,1178.9 1515.3,1180.5 1516.1,1178.3 1516.9,1179.3 1517.7,1178.2 1518.5,1178.4 1519.3,1179.0 1520.1,1176.4 1520.9,1176.2 1521.7,1177.8 1522.5,1174.2 1523.3,1175.8 1524.1,1176.9 1524.9,1177.2 1525.6,1172.2 1526.4,1173.2 1527.2,1173.0 1528.0,1172.4 1528.8,1174.1 1529.6,1172.5 1530.4,1170.6 1531.2,1171.7 1532.0,1170.8 1532.8,1171.3 1533.6,1171.8 1534.4,1170.0 1535.2,1170.1 1536.0,1170.3 1536.8,1171.5 1537.6,1170.7 1538.4,1170.0 1539.2,1168.1 1540.0,1166.2 1540.8,1164.5 1541.6,1164.1 1542.3,1163.6 1543.1,1163.1 1543.9,1161.0 1544.7,1163.5 1545.5,1160.1 1546.3,1156.5 1547.1,1157.0 1547.9,1159.0 1548.7,1159.4 1549.5,1157.9 1550.3,1154.7 1551.1,1155.5 1551.9,1157.2 1552.7,1157.9 1553.5,1155.2 1554.3,1150.3 1555.1,1151.7 1555.9,1148.2 1556.7,1144.5 1557.5,1139.6 1558.3,1135.0 1559.0,1132.2 1559.8,1126.0 1560.6,1120.7 1561.4,1114.8 1562.2,1110.4 1563.0,1105.3 1563.8,1101.6 1564.6,1097.4 1565.4,1092.9 1566.2,1087.8 1567.0,1082.4 1567.8,1078.0 1568.6,1072.6 1569.4,1070.0 1570.2,1063.0 1571.0,1060.7 1571.8,1058.4 1572.6,1052.5 1573.4,1049.8 1574.2,1044.7 1575.0,1043.0 1575.7,1038.7 1576.5,1037.8 1577.3,1037.4 1578.1,1035.5 1578.9,1036.0 1579.7,1035.4 1580.5,1039.3 1581.3,1037.0 1582.1,1035.8 1582.9,1031.9 1583.7,1033.7 1584.5,1033.2 1585.3,1032.3 1586.1,1033.6 1586.9,1032.8 1587.7,1031.0 1588.5,1030.5 1589.3,1029.9 1590.1,1029.0 1590.9,1028.4 1591.7,1027.5 1592.4,1027.9 1593.2,1029.6 1594.0,1028.3 1594.8,1027.2 1595.6,1025.4 1596.4,1027.7 1597.2,1024.0 1598.0,1024.6 1598.8,1021.2 1599.6,1024.0 1600.4,1022.3 1601.2,1023.4 1602.0,1022.5 1602.8,1021.3 1603.6,1019.8 1604.4,1020.5 1605.2,1019.2 1606.0,1020.1 1606.8,1017.5 1607.6,1019.0 1608.4,1016.7 1609.1,1014.6 1609.9,1017.2 1610.7,1017.2 1611.5,1017.4 1612.3,1015.5 1613.1,1016.0 1613.9,1014.0 1614.7,1015.1 1615.5,1015.5 1616.3,1015.8 1617.1,1014.7 1617.9,1012.6 1618.7,1012.7 1619.5,1012.8 1620.3,1012.6 1621.1,1013.0 1621.9,1013.7 1622.7,1013.9 1623.5,1013.0 1624.3,1012.9 1625.1,1010.7 1625.8,1010.2 1626.6,1011.9 1627.4,1010.9 1628.2,1011.9 1629.0,1010.1 1629.8,1012.3 1630.6,1009.5 1631.4,1010.3 1632.2,1008.7 1633.0,1008.4 1633.8,1009.6 1634.6,1008.4 1635.4,1008.9 1636.2,1008.1 1637.0,1009.1 1637.8,1008.6 1638.6,1009.4 1639.4,1012.1 1640.2,1010.5 1641.0,1013.2 1641.8,1013.5 1642.5,1012.6 1643.3,1013.6 1644.1,1013.8 1644.9,1011.7 1645.7,1013.3 1646.5,1014.4 1647.3,1016.2 1648.1,1012.1 1648.9,1015.5 1649.7,1015.4 1650.5,1016.4 1651.3,1017.2 1652.1,1020.4 1652.9,1023.4 1653.7,1026.7 1654.5,1030.6 1655.3,1033.9 1656.1,1038.8 1656.9,1040.6 1657.7,1043.0 1658.5,1045.2 1659.2,1051.6 1660.0,1056.4 1660.8,1058.5 1661.6,1065.0 1662.4,1067.4 1663.2,1073.8 1664.0,1078.2 1664.8,1080.9 1665.6,1085.2 1666.4,1091.3 1667.2,1093.8 1668.0,1096.4 1668.8,1101.7 1669.6,1107.5 1670.4,1113.0 1671.2,1117.8 1672.0,1121.5 1672.8,1125.6 1673.6,1128.8 1674.4,1131.7 1675.2,1137.9 1676.0,1140.4 1676.7,1142.6 1677.5,1146.8 1678.3,1149.0 1679.1,1148.0 1679.9,1150.5 1680.7,1152.0 1681.5,1154.5 1682.3,1155.8 1683.1,1157.8 1683.9,1158.8 1684.7,1161.5 1685.5,1161.9 1686.3,1162.9 1687.1,1163.8 1687.9,1164.8 1688.7,1164.3 1689.5,1165.9 1690.3,1166.0 1691.1,1167.3 1691.9,1171.7 1692.7,1169.8 1693.4,1169.1 1694.2,1170.7 1695.0,1172.6 1695.8,1175.2 1696.6,1174.5 1697.4,1174.9 1698.2,1177.1 1699.0,1176.7 1699.8,1176.2 1700.6,1177.8 1701.4,1178.3 1702.2,1178.8 1703.0,1176.9 1703.8,1177.7 1704.6,1179.1 1705.4,1179.8 1706.2,1179.7 1707.0,1178.0 1707.8,1179.2 1708.6,1179.1 1709.4,1177.6 1710.1,1177.6 1710.9,1179.5 1711.7,1178.5 1712.5,1177.8 1713.3,1177.3 1714.1,1175.5 1714.9,1175.3 1715.7,1172.9 1716.5,1173.4 1717.3,1174.1 1718.1,1175.8 1718.9,1175.1 1719.7,1175.6 1720.5,1175.7 1721.3,1172.9 1722.1,1170.5 1722.9,1171.0 1723.7,1170.8 1724.5,1170.6 1725.3,1169.4 1726.1,1170.2 1726.8,1170.4 1727.6,1168.2 1728.4,1165.4 1729.2,1165.8 1730.0,1168.0 1730.8,1165.3 1731.6,1165.1 1732.4,1166.0 1733.2,1165.4 1734.0,1167.7 1734.8,1164.3 1735.6,1163.1 1736.4,1161.3 1737.2,1161.3 1738.0,1162.2 1738.8,1159.9 1739.6,1157.6 1740.4,1155.8 1741.2,1155.0 1742.0,1153.4 1742.8,1155.8 1743.5,1155.1 1744.3,1154.6 1745.1,1154.0 1745.9,1152.3 1746.7,1149.2 1747.5,1146.1 1748.3,1142.1 1749.1,1135.1 1749.9,1128.9 1750.7,1123.2 1751.5,1117.1 1752.3,1112.4 1753.1,1109.5 1753.9,1102.8 1754.7,1097.5 1755.5,1089.5 1756.3,1086.4 1757.1,1081.8 1757.9,1077.5 1758.7,1070.9 1759.5,1068.9 1760.2,1063.8 1761.0,1060.2 1761.8,1055.5 1762.6,1054.8 1763.4,1051.6 1764.2,1047.3 1765.0,1045.2 1765.8,1043.3 1766.6,1038.5 1767.4,1040.6 1768.2,1039.3 1769.0,1035.5 1769.8,1033.2 1770.6,1034.8 1771.4,1035.9 1772.2,1036.4 1773.0,1036.3 1773.8,1035.6 1774.6,1033.9 1775.4,1033.3 1776.2,1032.3 1776.9,1034.4 1777.7,1033.8 1778.5,1032.1 1779.3,1031.9 1780.1,1031.0 1780.9,1031.1 1781.7,1030.0 1782.5,1028.0 1783.3,1028.9 1784.1,1029.3 1784.9,1028.1 1785.7,1026.1 1786.5,1026.1 1787.3,1027.3 1788.1,1025.8 1788.9,1027.1 1789.7,1028.1 1790.5,1026.7 1791.3,1025.9 1792.1,1027.6 1792.9,1026.1 1793.6,1025.1 1794.4,1025.0 1795.2,1024.8 1796.0,1022.6 1796.8,1023.7 1797.6,1024.4 1798.4,1022.9 1799.2,1021.5 1800.0,1022.6 1800.8,1020.0 1801.6,1020.6 1802.4,1021.6 1803.2,1020.8 1804.0,1021.8 1804.8,1020.1 1805.6,1019.8 1806.4,1017.3 1807.2,1021.8 1808.0,1022.2 1808.8,1021.5 1809.6,1019.7 1810.3,1020.2 1811.1,1020.6 1811.9,1019.5 1812.7,1020.7 1813.5,1019.3 1814.3,1018.5 1815.1,1016.9 1815.9,1018.0 1816.7,1017.4 1817.5,1015.7 1818.3,1016.4 1819.1,1017.6 1819.9,1016.2 1820.7,1015.7 1821.5,1015.1 1822.3,1015.2 1823.1,1015.8 1823.9,1014.6 1824.7,1014.5 1825.5,1014.4 1826.3,1013.8 1827.0,1016.5 1827.8,1016.7 1828.6,1016.5 1829.4,1013.1 1830.2,1013.5 1831.0,1013.4 1831.8,1014.8 1832.6,1016.2 1833.4,1013.6 1834.2,1012.6 1835.0,1012.5 1835.8,1011.7 1836.6,1013.4 1837.4,1013.5 1838.2,1015.9 1839.0,1013.9 1839.8,1015.7 1840.6,1018.8 1841.4,1020.5 1842.2,1018.8 1843.0,1022.3 1843.8,1023.6 1844.5,1024.4 1845.3,1025.4 1846.1,1026.5 1846.9,1026.7 1847.7,1032.4 1848.5,1035.9 1849.3,1040.5 1850.1,1045.9 1850.9,1050.8 1851.7,1055.1 1852.5,1058.5 1853.3,1063.2 1854.1,1068.8 1854.9,1071.0 1855.7,1077.7 1856.5,1080.1 1857.3,1087.6 1858.1,1092.1 1858.9,1095.8 1859.7,1100.5 1860.5,1107.0 1861.2,1109.9 1862.0,1114.9 1862.8,1117.8 1863.6,1124.7 1864.4,1127.0 1865.2,1131.6 1866.0,1136.8 1866.8,1138.8 1867.6,1143.4 1868.4,1146.8 1869.2,1147.1 1870.0,1151.1 1870.8,1152.7 1871.6,1154.0 1872.4,1155.8 1873.2,1157.4 1874.0,1160.3 1874.8,1159.3 1875.6,1159.6 1876.4,1158.6 1877.2,1159.5 1877.9,1162.6 1878.7,1164.7 1879.5,1166.9 1880.3,1166.8 1881.1,1168.6 1881.9,1166.7 1882.7,1168.3 1883.5,1170.0 1884.3,1172.2 1885.1,1172.4 1885.9,1172.8 1886.7,1174.6 1887.5,1173.7 1888.3,1174.0 1889.1,1175.5 1889.9,1175.2 1890.7,1176.5 1891.5,1175.6 1892.3,1176.7 1893.1,1176.4 1893.9,1178.0 1894.6,1178.8 1895.4,1178.8 1896.2,1177.4 L1896.2,1205.9 Z" fill="#47c6ad" fill-opacity="0.93" stroke="#33b092" stroke-width="1.2" stroke-linejoin="round"/>
<path d="M560.2,1205.9 L560.2,1205.6 561.0,1201.9 561.8,1201.7 562.6,1198.6 563.4,1198.5 564.2,1198.2 565.0,1198.2 565.8,1197.2 566.6,1196.4 567.4,1198.4 568.2,1197.4 568.9,1195.8 569.7,1195.1 570.5,1193.7 571.3,1190.9 572.1,1192.4 572.9,1190.6 573.7,1190.5 574.5,1190.7 575.3,1188.6 576.1,1187.4 576.9,1186.3 577.7,1185.9 578.5,1185.0 579.3,1182.9 580.1,1183.4 580.9,1182.7 581.7,1182.3 582.5,1181.2 583.3,1181.8 584.1,1179.3 584.9,1179.0 585.6,1176.4 586.4,1176.5 587.2,1178.2 588.0,1176.7 588.8,1175.7 589.6,1174.8 590.4,1175.7 591.2,1174.6 592.0,1172.8 592.8,1173.2 593.6,1170.6 594.4,1170.7 595.2,1169.0 596.0,1168.1 596.8,1167.8 597.6,1164.9 598.4,1164.3 599.2,1163.5 600.0,1161.7 600.8,1158.9 601.6,1155.8 602.3,1155.2 603.1,1152.1 603.9,1149.6 604.7,1145.0 605.5,1140.5 606.3,1134.9 607.1,1129.4 607.9,1126.9 608.7,1121.8 609.5,1116.3 610.3,1111.5 611.1,1105.0 611.9,1100.6 612.7,1093.7 613.5,1090.6 614.3,1089.0 615.1,1083.7 615.9,1081.7 616.7,1078.8 617.5,1077.7 618.3,1074.0 619.0,1073.6 619.8,1072.6 620.6,1068.5 621.4,1067.2 622.2,1067.8 623.0,1069.6 623.8,1067.1 624.6,1065.0 625.4,1066.3 626.2,1066.8 627.0,1066.8 627.8,1065.3 628.6,1064.4 629.4,1064.7 630.2,1064.5 631.0,1061.9 631.8,1062.5 632.6,1060.9 633.4,1060.1 634.2,1059.5 635.0,1062.2 635.7,1060.1 636.5,1061.3 637.3,1061.9 638.1,1060.5 638.9,1061.3 639.7,1060.2 640.5,1059.1 641.3,1058.8 642.1,1058.6 642.9,1057.6 643.7,1057.2 644.5,1055.5 645.3,1055.0 646.1,1055.8 646.9,1054.1 647.7,1055.5 648.5,1055.0 649.3,1055.4 650.1,1055.5 650.9,1054.4 651.7,1053.9 652.5,1054.9 653.2,1054.2 654.0,1053.2 654.8,1053.4 655.6,1053.6 656.4,1052.9 657.2,1052.6 658.0,1051.9 658.8,1051.6 659.6,1052.2 660.4,1051.3 661.2,1050.7 662.0,1049.9 662.8,1052.5 663.6,1052.1 664.4,1051.7 665.2,1051.2 666.0,1050.8 666.8,1049.8 667.6,1049.9 668.4,1050.4 669.2,1051.7 669.9,1049.4 670.7,1048.8 671.5,1050.0 672.3,1049.5 673.1,1048.2 673.9,1047.8 674.7,1048.4 675.5,1048.7 676.3,1048.7 677.1,1048.4 677.9,1049.7 678.7,1049.4 679.5,1049.9 680.3,1050.8 681.1,1049.1 681.9,1049.2 682.7,1050.4 683.5,1049.9 684.3,1047.9 685.1,1049.6 685.9,1050.8 686.6,1050.1 687.4,1050.0 688.2,1050.5 689.0,1052.6 689.8,1052.7 690.6,1050.5 691.4,1050.5 692.2,1049.2 693.0,1048.7 693.8,1052.1 694.6,1050.9 695.4,1050.9 696.2,1052.6 697.0,1052.6 697.8,1054.8 698.6,1056.3 699.4,1056.7 700.2,1060.1 701.0,1063.1 701.8,1063.3 702.6,1064.4 703.3,1066.1 704.1,1070.8 704.9,1073.4 705.7,1076.3 706.5,1081.5 707.3,1086.2 708.1,1087.3 708.9,1092.2 709.7,1095.0 710.5,1099.2 711.3,1102.4 712.1,1105.8 712.9,1109.3 713.7,1113.7 714.5,1115.5 715.3,1120.2 716.1,1123.5 716.9,1128.0 717.7,1131.5 718.5,1135.0 719.3,1137.6 720.0,1140.4 720.8,1143.5 721.6,1146.7 722.4,1148.5 723.2,1150.9 724.0,1155.1 724.8,1158.2 725.6,1158.7 726.4,1160.3 727.2,1161.0 728.0,1163.1 728.8,1163.7 729.6,1164.5 730.4,1165.4 731.2,1168.0 732.0,1169.6 732.8,1170.8 733.6,1171.2 734.4,1172.7 735.2,1173.5 736.0,1174.6 736.7,1175.2 737.5,1177.6 738.3,1177.3 739.1,1177.7 739.9,1177.1 740.7,1177.8 741.5,1181.8 742.3,1179.8 743.1,1179.9 743.9,1180.1 744.7,1180.7 745.5,1181.3 746.3,1181.7 747.1,1182.1 747.9,1184.4 748.7,1184.6 749.5,1185.5 750.3,1184.1 751.1,1184.7 751.9,1183.9 752.7,1184.2 753.4,1185.3 754.2,1184.8 755.0,1185.3 755.8,1187.2 756.6,1184.8 757.4,1183.6 758.2,1183.3 759.0,1184.1 759.8,1183.8 760.6,1183.9 761.4,1182.0 762.2,1182.5 763.0,1182.3 763.8,1182.1 764.6,1180.2 765.4,1179.1 766.2,1178.3 767.0,1179.2 767.8,1177.7 768.6,1176.5 769.4,1177.6 770.1,1175.2 770.9,1175.4 771.7,1173.5 772.5,1174.0 773.3,1174.0 774.1,1175.0 774.9,1173.1 775.7,1171.6 776.5,1171.3 777.3,1172.1 778.1,1171.9 778.9,1170.0 779.7,1169.8 780.5,1169.1 781.3,1169.8 782.1,1169.6 782.9,1168.9 783.7,1168.5 784.5,1165.4 785.3,1164.1 786.1,1162.5 786.8,1162.8 787.6,1160.4 788.4,1160.2 789.2,1161.6 790.0,1161.0 790.8,1158.5 791.6,1159.3 792.4,1156.2 793.2,1153.8 794.0,1149.9 794.8,1144.5 795.6,1140.5 796.4,1135.9 797.2,1132.2 798.0,1125.9 798.8,1122.6 799.6,1120.1 800.4,1115.2 801.2,1112.6 802.0,1108.6 802.8,1105.0 803.5,1101.2 804.3,1098.5 805.1,1094.6 805.9,1089.8 806.7,1089.0 807.5,1083.3 808.3,1081.7 809.1,1077.4 809.9,1074.7 810.7,1071.1 811.5,1068.5 812.3,1067.9 813.1,1067.2 813.9,1065.7 814.7,1065.2 815.5,1065.1 816.3,1065.1 817.1,1064.9 817.9,1063.1 818.7,1064.1 819.5,1064.4 820.3,1063.9 821.0,1063.2 821.8,1064.7 822.6,1063.8 823.4,1062.8 824.2,1063.3 825.0,1064.6 825.8,1062.8 826.6,1062.2 827.4,1060.9 828.2,1061.1 829.0,1061.0 829.8,1060.0 830.6,1060.3 831.4,1060.5 832.2,1060.5 833.0,1061.1 833.8,1060.0 834.6,1059.7 835.4,1057.9 836.2,1058.3 837.0,1058.8 837.7,1058.0 838.5,1058.7 839.3,1057.9 840.1,1058.6 840.9,1059.0 841.7,1056.4 842.5,1056.3 843.3,1056.3 844.1,1056.1 844.9,1054.9 845.7,1056.4 846.5,1055.6 847.3,1054.9 848.1,1054.1 848.9,1053.9 849.7,1054.1 850.5,1053.7 851.3,1053.4 852.1,1054.1 852.9,1053.0 853.7,1054.4 854.4,1052.6 855.2,1052.7 856.0,1054.2 856.8,1054.0 857.6,1053.4 858.4,1052.7 859.2,1053.7 860.0,1051.5 860.8,1053.6 861.6,1053.0 862.4,1053.0 863.2,1053.4 864.0,1052.9 864.8,1052.4 865.6,1052.5 866.4,1052.4 867.2,1052.2 868.0,1053.9 868.8,1052.6 869.6,1050.6 870.4,1050.2 871.1,1050.6 871.9,1051.1 872.7,1049.9 873.5,1050.8 874.3,1050.4 875.1,1049.6 875.9,1047.9 876.7,1048.1 877.5,1048.2 878.3,1047.4 879.1,1048.2 879.9,1046.7 880.7,1046.3 881.5,1045.9 882.3,1046.8 883.1,1048.8 883.9,1048.6 884.7,1048.8 885.5,1047.2 886.3,1045.4 887.1,1047.7 887.8,1046.5 888.6,1044.7 889.4,1046.6 890.2,1044.9 891.0,1047.4 891.8,1049.6 892.6,1050.9 893.4,1053.8 894.2,1056.9 895.0,1062.2 895.8,1068.2 896.6,1074.6 897.4,1078.6 898.2,1081.7 899.0,1087.3 899.8,1091.0 900.6,1094.0 901.4,1099.4 902.2,1104.3 903.0,1108.0 903.8,1110.8 904.5,1115.5 905.3,1116.9 906.1,1121.4 906.9,1125.2 907.7,1128.9 908.5,1132.0 909.3,1135.6 910.1,1138.2 910.9,1142.4 911.7,1144.5 912.5,1148.6 913.3,1149.8 914.1,1151.2 914.9,1153.1 915.7,1154.4 916.5,1156.5 917.3,1157.2 918.1,1157.8 918.9,1159.0 919.7,1160.7 920.5,1160.8 921.2,1164.0 922.0,1164.3 922.8,1165.4 923.6,1164.8 924.4,1167.3 925.2,1167.1 926.0,1169.3 926.8,1172.7 927.6,1174.0 928.4,1174.9 929.2,1174.8 930.0,1174.9 930.8,1177.0 931.6,1178.0 932.4,1178.5 933.2,1181.7 934.0,1181.1 934.8,1181.1 935.6,1184.5 936.4,1185.4 937.2,1184.9 937.9,1185.4 938.7,1185.0 939.5,1185.2 940.3,1187.5 941.1,1188.0 941.9,1189.7 942.7,1190.8 943.5,1190.6 944.3,1191.6 945.1,1193.9 945.9,1192.6 946.7,1194.2 947.5,1195.8 948.3,1195.3 949.1,1196.2 949.9,1196.3 950.7,1199.0 951.5,1198.6 952.3,1197.3 953.1,1196.8 953.9,1196.9 954.6,1196.8 955.4,1195.3 956.2,1194.5 957.0,1195.6 957.8,1194.5 958.6,1194.8 959.4,1196.5 960.2,1197.2 961.0,1196.1 961.8,1195.1 962.6,1196.4 963.4,1198.2 964.2,1196.4 965.0,1196.5 965.8,1197.0 966.6,1196.1 967.4,1195.5 968.2,1197.0 969.0,1197.4 969.8,1196.9 970.6,1194.5 971.3,1195.4 972.1,1195.5 972.9,1194.1 973.7,1193.5 974.5,1193.3 975.3,1194.2 976.1,1194.1 976.9,1193.7 977.7,1192.4 978.5,1192.1 979.3,1191.0 980.1,1191.0 980.9,1191.5 981.7,1191.6 982.5,1191.1 983.3,1190.5 984.1,1191.3 984.9,1190.6 985.7,1190.2 986.5,1187.7 987.3,1185.4 988.1,1183.8 988.8,1183.9 989.6,1180.4 990.4,1177.9 991.2,1176.8 992.0,1174.8 992.8,1172.7 993.6,1169.9 994.4,1168.1 995.2,1165.7 996.0,1164.4 996.8,1164.4 997.6,1161.8 998.4,1163.0 999.2,1162.5 1000.0,1163.4 1000.8,1163.0 1001.6,1161.7 1002.4,1162.6 1003.2,1160.8 1004.0,1160.6 1004.8,1161.6 1005.5,1161.5 1006.3,1160.9 1007.1,1160.8 1007.9,1161.9 1008.7,1160.8 1009.5,1161.2 1010.3,1160.5 1011.1,1159.6 1011.9,1158.7 1012.7,1158.9 1013.5,1159.6 1014.3,1159.5 1015.1,1159.0 1015.9,1158.5 1016.7,1160.0 1017.5,1159.9 1018.3,1160.4 1019.1,1160.7 1019.9,1158.7 1020.7,1156.9 1021.5,1155.5 1022.2,1157.1 1023.0,1157.7 1023.8,1157.2 1024.6,1154.2 1025.4,1154.5 1026.2,1154.5 1027.0,1154.3 1027.8,1153.5 1028.6,1154.4 1029.4,1153.1 1030.2,1154.8 1031.0,1154.1 1031.8,1153.5 1032.6,1153.4 1033.4,1154.2 1034.2,1154.4 1035.0,1153.0 1035.8,1153.3 1036.6,1153.9 1037.4,1152.7 1038.2,1152.6 1038.9,1151.7 1039.7,1151.0 1040.5,1151.4 1041.3,1150.9 1042.1,1149.9 1042.9,1149.4 1043.7,1149.1 1044.5,1148.9 1045.3,1149.0 1046.1,1149.7 1046.9,1151.1 1047.7,1151.4 1048.5,1149.6 1049.3,1149.5 1050.1,1149.6 1050.9,1150.6 1051.7,1150.3 1052.5,1151.0 1053.3,1149.3 1054.1,1149.1 1054.9,1150.4 1055.6,1149.7 1056.4,1149.4 1057.2,1148.2 1058.0,1147.7 1058.8,1148.7 1059.6,1149.0 1060.4,1147.6 1061.2,1149.0 1062.0,1148.3 1062.8,1149.7 1063.6,1148.8 1064.4,1150.5 1065.2,1149.7 1066.0,1149.8 1066.8,1149.3 1067.6,1148.6 1068.4,1150.0 1069.2,1152.9 1070.0,1152.8 1070.8,1151.4 1071.6,1151.3 1072.3,1150.7 1073.1,1148.9 1073.9,1150.3 1074.7,1149.9 1075.5,1150.7 1076.3,1152.5 1077.1,1153.2 1077.9,1155.9 1078.7,1156.3 1079.5,1158.0 1080.3,1158.2 1081.1,1159.8 1081.9,1162.4 1082.7,1164.3 1083.5,1165.3 1084.3,1167.4 1085.1,1168.6 1085.9,1170.0 1086.7,1174.2 1087.5,1176.5 1088.3,1176.5 1089.0,1178.6 1089.8,1179.5 1090.6,1181.8 1091.4,1181.7 1092.2,1183.2 1093.0,1183.1 1093.8,1184.5 1094.6,1184.6 1095.4,1185.2 1096.2,1185.6 1097.0,1187.4 1097.8,1188.3 1098.6,1189.6 1099.4,1189.8 1100.2,1189.5 1101.0,1190.4 1101.8,1191.7 1102.6,1192.5 1103.4,1192.0 1104.2,1194.1 1105.0,1194.8 1105.7,1194.4 1106.5,1193.9 1107.3,1194.9 1108.1,1195.6 1108.9,1194.1 1109.7,1195.9 1110.5,1195.5 1111.3,1195.7 1112.1,1193.4 1112.9,1194.8 1113.7,1193.0 1114.5,1193.5 1115.3,1193.3 1116.1,1192.6 1116.9,1193.8 1117.7,1194.1 1118.5,1192.4 1119.3,1194.9 1120.1,1194.8 1120.9,1196.4 1121.7,1195.6 1122.4,1194.8 1123.2,1194.6 1124.0,1194.7 1124.8,1196.0 1125.6,1195.9 1126.4,1195.0 1127.2,1194.8 1128.0,1196.3 1128.8,1197.2 1129.6,1195.6 1130.4,1196.7 1131.2,1196.1 1132.0,1196.4 1132.8,1195.1 1133.6,1194.4 1134.4,1196.3 1135.2,1194.2 1136.0,1194.5 1136.8,1194.7 1137.6,1193.8 1138.4,1193.0 1139.1,1194.7 1139.9,1195.5 1140.7,1193.9 1141.5,1193.6 1142.3,1195.9 1143.1,1194.5 1143.9,1194.4 1144.7,1194.7 1145.5,1194.1 1146.3,1194.0 1147.1,1193.9 1147.9,1191.7 1148.7,1194.6 1149.5,1193.0 1150.3,1192.6 1151.1,1194.3 1151.9,1194.3 1152.7,1195.9 1153.5,1194.2 1154.3,1194.0 1155.1,1193.2 1155.9,1193.5 1156.6,1194.5 1157.4,1193.7 1158.2,1193.5 1159.0,1193.9 1159.8,1194.7 1160.6,1193.3 1161.4,1194.0 1162.2,1193.7 1163.0,1194.0 1163.8,1193.0 1164.6,1194.4 1165.4,1192.1 1166.2,1192.0 1167.0,1190.6 1167.8,1191.4 1168.6,1191.7 1169.4,1190.7 1170.2,1191.4 1171.0,1189.1 1171.8,1190.2 1172.6,1189.5 1173.3,1190.3 1174.1,1190.7 1174.9,1189.0 1175.7,1188.4 1176.5,1187.1 1177.3,1183.9 1178.1,1181.9 1178.9,1180.7 1179.7,1178.3 1180.5,1175.2 1181.3,1174.0 1182.1,1171.9 1182.9,1170.9 1183.7,1169.2 1184.5,1166.6 1185.3,1166.9 1186.1,1166.3 1186.9,1163.5 1187.7,1163.1 1188.5,1163.7 1189.3,1163.9 1190.0,1163.6 1190.8,1162.8 1191.6,1163.2 1192.4,1163.9 1193.2,1162.5 1194.0,1161.1 1194.8,1160.6 1195.6,1160.0 1196.4,1161.0 1197.2,1160.3 1198.0,1159.3 1198.8,1159.7 1199.6,1159.6 1200.4,1161.9 1201.2,1161.3 1202.0,1159.4 1202.8,1159.0 1203.6,1158.8 1204.4,1159.2 1205.2,1159.3 1206.0,1161.1 1206.7,1158.9 1207.5,1158.8 1208.3,1160.2 1209.1,1160.9 1209.9,1159.4 1210.7,1160.4 1211.5,1158.4 1212.3,1158.5 1213.1,1159.2 1213.9,1158.6 1214.7,1158.4 1215.5,1157.1 1216.3,1156.2 1217.1,1157.0 1217.9,1155.8 1218.7,1156.5 1219.5,1156.0 1220.3,1156.8 1221.1,1156.1 1221.9,1156.3 1222.7,1155.3 1223.4,1154.3 1224.2,1154.3 1225.0,1153.7 1225.8,1153.7 1226.6,1152.5 1227.4,1154.3 1228.2,1153.7 1229.0,1154.8 1229.8,1154.6 1230.6,1153.2 1231.4,1153.6 1232.2,1154.1 1233.0,1153.9 1233.8,1153.6 1234.6,1152.6 1235.4,1154.8 1236.2,1153.8 1237.0,1152.8 1237.8,1152.9 1238.6,1153.0 1239.4,1152.0 1240.1,1152.4 1240.9,1154.5 1241.7,1155.2 1242.5,1154.3 1243.3,1155.6 1244.1,1154.3 1244.9,1154.2 1245.7,1154.2 1246.5,1154.8 1247.3,1154.2 1248.1,1151.1 1248.9,1152.3 1249.7,1151.4 1250.5,1152.6 1251.3,1152.5 1252.1,1153.6 1252.9,1153.4 1253.7,1154.9 1254.5,1156.9 1255.3,1156.9 1256.1,1155.1 1256.8,1153.1 1257.6,1153.2 1258.4,1153.6 1259.2,1153.5 1260.0,1151.4 1260.8,1153.9 1261.6,1152.8 1262.4,1152.6 1263.2,1154.9 1264.0,1155.1 1264.8,1155.4 1265.6,1155.9 1266.4,1155.2 1267.2,1156.1 1268.0,1157.1 1268.8,1158.2 1269.6,1158.1 1270.4,1159.4 1271.2,1160.0 1272.0,1159.2 1272.8,1157.8 1273.5,1157.9 1274.3,1159.5 1275.1,1162.3 1275.9,1163.2 1276.7,1164.8 1277.5,1166.4 1278.3,1168.3 1279.1,1170.0 1279.9,1171.3 1280.7,1174.8 1281.5,1175.7 1282.3,1179.0 1283.1,1179.9 1283.9,1181.8 1284.7,1183.9 1285.5,1185.8 1286.3,1187.4 1287.1,1189.5 1287.9,1190.1 1288.7,1191.7 1289.5,1190.7 1290.2,1192.1 1291.0,1191.9 1291.8,1192.0 1292.6,1191.5 1293.4,1191.7 1294.2,1194.5 1295.0,1193.8 1295.8,1193.5 1296.6,1193.5 1297.4,1194.3 1298.2,1193.5 1299.0,1193.4 1299.8,1193.6 1300.6,1193.9 1301.4,1194.2 1302.2,1193.3 1303.0,1194.6 1303.8,1193.7 1304.6,1191.5 1305.4,1193.6 1306.2,1195.2 1306.9,1197.3 1307.7,1197.5 1308.5,1195.0 1309.3,1196.4 1310.1,1197.9 1310.9,1197.5 1311.7,1198.2 1312.5,1198.1 1313.3,1197.7 1314.1,1196.7 1314.9,1196.2 1315.7,1196.9 1316.5,1196.7 1317.3,1196.7 1318.1,1195.3 1318.9,1195.6 1319.7,1194.4 1320.5,1193.0 1321.3,1192.9 1322.1,1191.3 1322.9,1191.8 1323.7,1192.4 1324.4,1190.8 1325.2,1190.3 1326.0,1189.0 1326.8,1188.3 1327.6,1188.0 1328.4,1187.8 1329.2,1186.2 1330.0,1185.9 1330.8,1184.7 1331.6,1183.5 1332.4,1183.1 1333.2,1184.1 1334.0,1181.7 1334.8,1181.4 1335.6,1180.9 1336.4,1181.0 1337.2,1179.4 1338.0,1178.4 1338.8,1177.5 1339.6,1177.4 1340.4,1177.4 1341.1,1177.5 1341.9,1176.5 1342.7,1176.6 1343.5,1176.6 1344.3,1174.3 1345.1,1174.5 1345.9,1174.6 1346.7,1173.6 1347.5,1172.1 1348.3,1171.4 1349.1,1171.8 1349.9,1170.4 1350.7,1170.3 1351.5,1167.9 1352.3,1169.1 1353.1,1167.5 1353.9,1166.9 1354.7,1163.5 1355.5,1164.6 1356.3,1163.0 1357.1,1162.1 1357.8,1161.7 1358.6,1160.8 1359.4,1160.3 1360.2,1160.9 1361.0,1158.6 1361.8,1160.0 1362.6,1159.2 1363.4,1156.8 1364.2,1153.4 1365.0,1150.7 1365.8,1147.3 1366.6,1143.0 1367.4,1138.8 1368.2,1134.7 1369.0,1130.3 1369.8,1127.0 1370.6,1123.2 1371.4,1120.5 1372.2,1115.9 1373.0,1113.0 1373.8,1109.7 1374.5,1105.6 1375.3,1102.6 1376.1,1099.1 1376.9,1096.5 1377.7,1094.3 1378.5,1091.7 1379.3,1088.3 1380.1,1084.9 1380.9,1084.7 1381.7,1081.6 1382.5,1079.6 1383.3,1078.3 1384.1,1074.2 1384.9,1072.4 1385.7,1070.7 1386.5,1068.6 1387.3,1069.9 1388.1,1069.2 1388.9,1067.8 1389.7,1066.8 1390.5,1065.8 1391.2,1065.0 1392.0,1064.6 1392.8,1064.6 1393.6,1062.5 1394.4,1060.9 1395.2,1062.6 1396.0,1062.1 1396.8,1060.6 1397.6,1060.2 1398.4,1059.6 1399.2,1058.2 1400.0,1056.7 1400.8,1057.5 1401.6,1056.9 1402.4,1054.7 1403.2,1054.2 1404.0,1054.6 1404.8,1055.3 1405.6,1054.5 1406.4,1053.9 1407.2,1053.6 1407.9,1054.3 1408.7,1055.0 1409.5,1054.3 1410.3,1053.2 1411.1,1052.5 1411.9,1051.7 1412.7,1052.4 1413.5,1053.0 1414.3,1054.4 1415.1,1053.1 1415.9,1053.0 1416.7,1052.5 1417.5,1051.3 1418.3,1051.2 1419.1,1050.9 1419.9,1051.9 1420.7,1051.1 1421.5,1051.6 1422.3,1052.0 1423.1,1049.4 1423.9,1052.8 1424.6,1053.7 1425.4,1053.1 1426.2,1052.9 1427.0,1052.7 1427.8,1051.7 1428.6,1051.5 1429.4,1051.5 1430.2,1052.1 1431.0,1051.6 1431.8,1054.2 1432.6,1053.4 1433.4,1054.1 1434.2,1054.6 1435.0,1055.1 1435.8,1055.1 1436.6,1055.6 1437.4,1056.7 1438.2,1056.9 1439.0,1056.4 1439.8,1055.8 1440.6,1055.5 1441.3,1054.7 1442.1,1057.2 1442.9,1056.7 1443.7,1056.5 1444.5,1055.5 1445.3,1055.1 1446.1,1055.3 1446.9,1054.2 1447.7,1054.9 1448.5,1054.2 1449.3,1054.6 1450.1,1054.4 1450.9,1054.7 1451.7,1053.1 1452.5,1052.9 1453.3,1053.9 1454.1,1055.1 1454.9,1055.7 1455.7,1057.6 1456.5,1059.2 1457.3,1058.9 1458.0,1059.2 1458.8,1058.7 1459.6,1058.8 1460.4,1058.4 1461.2,1058.5 1462.0,1058.8 1462.8,1059.3 1463.6,1059.0 1464.4,1060.5 1465.2,1062.3 1466.0,1066.2 1466.8,1071.8 1467.6,1074.4 1468.4,1076.0 1469.2,1081.7 1470.0,1084.8 1470.8,1089.0 1471.6,1092.7 1472.4,1096.0 1473.2,1100.4 1474.0,1103.6 1474.7,1107.1 1475.5,1110.2 1476.3,1113.8 1477.1,1117.4 1477.9,1121.7 1478.7,1125.4 1479.5,1127.3 1480.3,1131.2 1481.1,1136.0 1481.9,1139.3 1482.7,1143.6 1483.5,1145.6 1484.3,1149.8 1485.1,1150.6 1485.9,1152.4 1486.7,1157.1 1487.5,1156.4 1488.3,1158.3 1489.1,1159.7 1489.9,1159.6 1490.7,1159.3 1491.4,1158.6 1492.2,1161.0 1493.0,1163.2 1493.8,1164.4 1494.6,1166.1 1495.4,1167.8 1496.2,1168.6 1497.0,1170.9 1497.8,1172.0 1498.6,1172.4 1499.4,1172.4 1500.2,1174.1 1501.0,1175.5 1501.8,1175.5 1502.6,1177.1 1503.4,1177.9 1504.2,1179.2 1505.0,1178.1 1505.8,1180.8 1506.6,1180.5 1507.4,1181.5 1508.2,1180.2 1508.9,1182.8 1509.7,1182.9 1510.5,1185.2 1511.3,1183.2 1512.1,1184.2 1512.9,1185.3 1513.7,1182.7 1514.5,1181.2 1515.3,1182.2 1516.1,1182.1 1516.9,1182.6 1517.7,1183.5 1518.5,1183.8 1519.3,1181.7 1520.1,1183.6 1520.9,1182.4 1521.7,1180.9 1522.5,1181.0 1523.3,1181.9 1524.1,1181.9 1524.9,1179.6 1525.6,1180.5 1526.4,1180.0 1527.2,1180.6 1528.0,1179.8 1528.8,1179.5 1529.6,1177.8 1530.4,1178.2 1531.2,1178.6 1532.0,1179.5 1532.8,1176.6 1533.6,1175.6 1534.4,1176.5 1535.2,1174.6 1536.0,1173.4 1536.8,1172.1 1537.6,1173.2 1538.4,1173.2 1539.2,1170.0 1540.0,1169.2 1540.8,1169.0 1541.6,1169.4 1542.3,1168.2 1543.1,1166.4 1543.9,1165.2 1544.7,1165.9 1545.5,1164.6 1546.3,1162.3 1547.1,1161.6 1547.9,1162.4 1548.7,1162.2 1549.5,1162.0 1550.3,1161.0 1551.1,1160.6 1551.9,1159.5 1552.7,1158.4 1553.5,1157.2 1554.3,1157.4 1555.1,1157.2 1555.9,1154.4 1556.7,1150.5 1557.5,1147.7 1558.3,1143.3 1559.0,1137.5 1559.8,1133.2 1560.6,1129.8 1561.4,1126.8 1562.2,1122.7 1563.0,1119.7 1563.8,1115.2 1564.6,1113.3 1565.4,1108.0 1566.2,1104.7 1567.0,1100.4 1567.8,1098.2 1568.6,1093.3 1569.4,1091.5 1570.2,1089.4 1571.0,1088.5 1571.8,1085.2 1572.6,1083.3 1573.4,1077.9 1574.2,1075.7 1575.0,1072.3 1575.7,1073.9 1576.5,1071.4 1577.3,1070.3 1578.1,1070.5 1578.9,1068.8 1579.7,1069.8 1580.5,1069.4 1581.3,1066.7 1582.1,1068.8 1582.9,1066.8 1583.7,1064.3 1584.5,1064.3 1585.3,1062.6 1586.1,1062.9 1586.9,1063.2 1587.7,1061.2 1588.5,1059.8 1589.3,1060.7 1590.1,1059.2 1590.9,1060.8 1591.7,1059.1 1592.4,1059.7 1593.2,1059.1 1594.0,1058.6 1594.8,1058.3 1595.6,1057.4 1596.4,1057.0 1597.2,1055.8 1598.0,1056.6 1598.8,1056.6 1599.6,1056.5 1600.4,1053.9 1601.2,1053.3 1602.0,1054.0 1602.8,1053.3 1603.6,1052.3 1604.4,1053.1 1605.2,1052.3 1606.0,1051.8 1606.8,1051.9 1607.6,1051.5 1608.4,1053.1 1609.1,1050.2 1609.9,1050.9 1610.7,1050.0 1611.5,1051.2 1612.3,1048.9 1613.1,1049.4 1613.9,1052.0 1614.7,1051.5 1615.5,1050.9 1616.3,1051.5 1617.1,1051.8 1617.9,1051.6 1618.7,1051.1 1619.5,1050.5 1620.3,1049.9 1621.1,1049.1 1621.9,1050.1 1622.7,1051.8 1623.5,1050.6 1624.3,1048.7 1625.1,1049.8 1625.8,1049.2 1626.6,1047.8 1627.4,1048.2 1628.2,1048.8 1629.0,1049.9 1629.8,1048.4 1630.6,1047.7 1631.4,1048.6 1632.2,1048.1 1633.0,1048.1 1633.8,1048.7 1634.6,1049.7 1635.4,1049.9 1636.2,1050.1 1637.0,1048.1 1637.8,1047.4 1638.6,1046.8 1639.4,1049.3 1640.2,1049.3 1641.0,1048.0 1641.8,1046.7 1642.5,1048.6 1643.3,1049.2 1644.1,1050.2 1644.9,1049.2 1645.7,1049.6 1646.5,1049.3 1647.3,1050.2 1648.1,1049.4 1648.9,1051.5 1649.7,1050.5 1650.5,1049.3 1651.3,1050.3 1652.1,1051.9 1652.9,1055.4 1653.7,1057.3 1654.5,1060.6 1655.3,1063.4 1656.1,1066.2 1656.9,1067.6 1657.7,1071.2 1658.5,1073.6 1659.2,1074.4 1660.0,1077.8 1660.8,1080.1 1661.6,1082.7 1662.4,1086.3 1663.2,1089.6 1664.0,1094.6 1664.8,1097.6 1665.6,1099.5 1666.4,1104.0 1667.2,1109.0 1668.0,1110.5 1668.8,1114.6 1669.6,1120.3 1670.4,1122.2 1671.2,1128.5 1672.0,1131.2 1672.8,1134.2 1673.6,1138.6 1674.4,1143.1 1675.2,1145.7 1676.0,1146.0 1676.7,1152.0 1677.5,1153.9 1678.3,1154.9 1679.1,1156.3 1679.9,1155.9 1680.7,1157.2 1681.5,1158.5 1682.3,1158.8 1683.1,1159.6 1683.9,1161.7 1684.7,1162.4 1685.5,1162.4 1686.3,1163.8 1687.1,1165.2 1687.9,1166.2 1688.7,1166.0 1689.5,1169.7 1690.3,1169.7 1691.1,1170.8 1691.9,1172.6 1692.7,1173.7 1693.4,1173.7 1694.2,1175.7 1695.0,1175.9 1695.8,1176.0 1696.6,1177.0 1697.4,1177.2 1698.2,1177.6 1699.0,1178.6 1699.8,1181.0 1700.6,1180.5 1701.4,1182.1 1702.2,1183.8 1703.0,1184.1 1703.8,1184.4 1704.6,1186.0 1705.4,1183.9 1706.2,1184.2 1707.0,1183.2 1707.8,1182.9 1708.6,1182.6 1709.4,1183.3 1710.1,1182.7 1710.9,1182.6 1711.7,1182.4 1712.5,1180.1 1713.3,1180.3 1714.1,1179.1 1714.9,1179.9 1715.7,1180.3 1716.5,1179.9 1717.3,1180.6 1718.1,1179.3 1718.9,1179.5 1719.7,1179.1 1720.5,1178.6 1721.3,1177.6 1722.1,1176.5 1722.9,1175.6 1723.7,1176.2 1724.5,1176.4 1725.3,1175.5 1726.1,1174.8 1726.8,1173.9 1727.6,1172.5 1728.4,1172.6 1729.2,1171.9 1730.0,1170.6 1730.8,1171.3 1731.6,1170.7 1732.4,1170.2 1733.2,1170.0 1734.0,1168.6 1734.8,1168.6 1735.6,1166.7 1736.4,1165.5 1737.2,1163.0 1738.0,1163.5 1738.8,1163.6 1739.6,1162.4 1740.4,1162.1 1741.2,1159.6 1742.0,1159.8 1742.8,1161.0 1743.5,1160.0 1744.3,1158.7 1745.1,1157.1 1745.9,1155.9 1746.7,1153.3 1747.5,1149.6 1748.3,1146.8 1749.1,1142.1 1749.9,1136.5 1750.7,1132.0 1751.5,1127.4 1752.3,1122.0 1753.1,1118.5 1753.9,1114.8 1754.7,1111.4 1755.5,1106.3 1756.3,1101.9 1757.1,1100.8 1757.9,1095.3 1758.7,1092.4 1759.5,1090.8 1760.2,1088.5 1761.0,1086.3 1761.8,1083.4 1762.6,1081.4 1763.4,1078.7 1764.2,1076.1 1765.0,1073.2 1765.8,1073.0 1766.6,1072.3 1767.4,1069.8 1768.2,1069.1 1769.0,1069.1 1769.8,1068.8 1770.6,1068.5 1771.4,1067.8 1772.2,1067.9 1773.0,1068.1 1773.8,1068.1 1774.6,1065.8 1775.4,1066.0 1776.2,1065.9 1776.9,1066.1 1777.7,1063.7 1778.5,1064.3 1779.3,1063.5 1780.1,1065.2 1780.9,1064.6 1781.7,1062.9 1782.5,1063.0 1783.3,1061.4 1784.1,1060.5 1784.9,1061.5 1785.7,1061.0 1786.5,1061.0 1787.3,1061.2 1788.1,1061.0 1788.9,1061.0 1789.7,1060.7 1790.5,1059.3 1791.3,1058.4 1792.1,1057.5 1792.9,1057.3 1793.6,1057.8 1794.4,1056.9 1795.2,1056.6 1796.0,1056.5 1796.8,1056.6 1797.6,1054.5 1798.4,1057.0 1799.2,1055.0 1800.0,1054.9 1800.8,1054.2 1801.6,1053.6 1802.4,1054.9 1803.2,1055.5 1804.0,1054.1 1804.8,1055.5 1805.6,1054.4 1806.4,1054.0 1807.2,1053.5 1808.0,1054.9 1808.8,1054.1 1809.6,1053.0 1810.3,1053.3 1811.1,1054.0 1811.9,1054.8 1812.7,1055.1 1813.5,1053.9 1814.3,1054.8 1815.1,1055.5 1815.9,1056.0 1816.7,1055.4 1817.5,1055.3 1818.3,1055.7 1819.1,1054.5 1819.9,1054.0 1820.7,1055.8 1821.5,1054.9 1822.3,1054.7 1823.1,1054.0 1823.9,1054.9 1824.7,1054.8 1825.5,1055.0 1826.3,1055.1 1827.0,1053.5 1827.8,1053.6 1828.6,1053.1 1829.4,1051.8 1830.2,1050.9 1831.0,1051.0 1831.8,1051.1 1832.6,1051.4 1833.4,1051.6 1834.2,1051.3 1835.0,1050.1 1835.8,1051.1 1836.6,1051.6 1837.4,1051.8 1838.2,1052.0 1839.0,1052.0 1839.8,1053.5 1840.6,1051.8 1841.4,1052.1 1842.2,1050.6 1843.0,1050.7 1843.8,1050.7 1844.5,1051.3 1845.3,1053.2 1846.1,1053.7 1846.9,1056.4 1847.7,1056.4 1848.5,1058.9 1849.3,1061.8 1850.1,1065.4 1850.9,1068.3 1851.7,1073.3 1852.5,1078.6 1853.3,1082.7 1854.1,1085.0 1854.9,1089.6 1855.7,1092.7 1856.5,1096.1 1857.3,1100.5 1858.1,1104.2 1858.9,1109.0 1859.7,1111.8 1860.5,1116.7 1861.2,1119.6 1862.0,1123.5 1862.8,1127.5 1863.6,1131.8 1864.4,1138.1 1865.2,1142.3 1866.0,1144.0 1866.8,1147.7 1867.6,1150.8 1868.4,1151.1 1869.2,1154.9 1870.0,1155.5 1870.8,1156.5 1871.6,1156.7 1872.4,1157.3 1873.2,1159.2 1874.0,1161.8 1874.8,1163.1 1875.6,1164.9 1876.4,1164.2 1877.2,1166.4 1877.9,1165.6 1878.7,1166.5 1879.5,1167.5 1880.3,1168.6 1881.1,1170.0 1881.9,1171.9 1882.7,1173.3 1883.5,1173.5 1884.3,1175.3 1885.1,1176.0 1885.9,1176.8 1886.7,1178.1 1887.5,1176.9 1888.3,1177.9 1889.1,1180.7 1889.9,1180.8 1890.7,1181.4 1891.5,1181.6 1892.3,1182.7 1893.1,1182.9 1893.9,1183.0 1894.6,1185.7 1895.4,1184.9 1896.2,1187.3 L1896.2,1205.9 Z" fill="#4996cf" fill-opacity="0.93" stroke="#3d86c0" stroke-width="1.2" stroke-linejoin="round"/>
<path d="M560.2,1205.9 L560.2,1204.6 561.0,1204.1 561.8,1204.1 562.6,1200.0 563.4,1199.7 564.2,1199.6 565.0,1199.8 565.8,1200.1 566.6,1199.7 567.4,1200.0 568.2,1200.0 568.9,1199.9 569.7,1200.2 570.5,1199.8 571.3,1199.9 572.1,1200.2 572.9,1200.2 573.7,1200.3 574.5,1200.4 575.3,1200.1 576.1,1199.9 576.9,1199.6 577.7,1199.2 578.5,1199.4 579.3,1200.2 580.1,1199.9 580.9,1199.8 581.7,1199.7 582.5,1199.6 583.3,1199.7 584.1,1199.6 584.9,1199.6 585.6,1199.2 586.4,1199.7 587.2,1200.0 588.0,1200.0 588.8,1199.4 589.6,1200.1 590.4,1200.0 591.2,1200.2 592.0,1200.1 592.8,1199.9 593.6,1200.1 594.4,1199.7 595.2,1199.3 596.0,1199.7 596.8,1199.4 597.6,1199.6 598.4,1199.5 599.2,1198.7 600.0,1197.9 600.8,1197.5 601.6,1196.5 602.3,1195.4 603.1,1194.9 603.9,1194.4 604.7,1193.3 605.5,1192.2 606.3,1191.4 607.1,1190.5 607.9,1189.9 608.7,1189.0 609.5,1188.4 610.3,1187.7 611.1,1187.0 611.9,1186.6 612.7,1186.2 613.5,1186.3 614.3,1186.2 615.1,1185.8 615.9,1185.4 616.7,1185.2 617.5,1185.0 618.3,1184.9 619.0,1184.8 619.8,1184.7 620.6,1184.4 621.4,1184.1 622.2,1184.0 623.0,1184.2 623.8,1184.1 624.6,1184.0 625.4,1183.6 626.2,1183.1 627.0,1183.7 627.8,1183.4 628.6,1183.2 629.4,1182.4 630.2,1182.6 631.0,1182.3 631.8,1181.8 632.6,1182.0 633.4,1181.9 634.2,1181.8 635.0,1181.6 635.7,1181.7 636.5,1181.4 637.3,1181.4 638.1,1181.3 638.9,1180.7 639.7,1181.0 640.5,1180.5 641.3,1180.5 642.1,1180.3 642.9,1180.3 643.7,1180.1 644.5,1179.8 645.3,1179.9 646.1,1179.6 646.9,1179.9 647.7,1179.7 648.5,1179.7 649.3,1179.3 650.1,1178.9 650.9,1178.9 651.7,1178.6 652.5,1178.5 653.2,1178.0 654.0,1178.4 654.8,1178.5 655.6,1178.1 656.4,1178.2 657.2,1177.7 658.0,1177.3 658.8,1177.3 659.6,1177.1 660.4,1176.7 661.2,1176.3 662.0,1176.2 662.8,1175.8 663.6,1175.8 664.4,1175.5 665.2,1175.0 666.0,1174.7 666.8,1174.9 667.6,1174.8 668.4,1174.7 669.2,1174.3 669.9,1173.9 670.7,1174.0 671.5,1173.9 672.3,1173.5 673.1,1173.7 673.9,1173.0 674.7,1172.7 675.5,1172.7 676.3,1172.1 677.1,1172.0 677.9,1171.9 678.7,1171.1 679.5,1171.2 680.3,1171.0 681.1,1170.8 681.9,1170.7 682.7,1170.4 683.5,1170.4 684.3,1170.2 685.1,1170.2 685.9,1170.4 686.6,1170.5 687.4,1171.3 688.2,1171.6 689.0,1171.9 689.8,1172.2 690.6,1172.8 691.4,1173.5 692.2,1173.8 693.0,1174.9 693.8,1175.2 694.6,1176.5 695.4,1177.5 696.2,1178.1 697.0,1179.2 697.8,1180.5 698.6,1181.2 699.4,1182.3 700.2,1183.7 701.0,1184.6 701.8,1185.7 702.6,1186.9 703.3,1187.9 704.1,1189.0 704.9,1190.5 705.7,1191.5 706.5,1192.5 707.3,1193.5 708.1,1194.9 708.9,1195.6 709.7,1197.0 710.5,1197.8 711.3,1198.4 712.1,1198.8 712.9,1199.1 713.7,1199.2 714.5,1199.2 715.3,1198.9 716.1,1199.3 716.9,1199.2 717.7,1199.4 718.5,1199.4 719.3,1199.6 720.0,1199.7 720.8,1199.3 721.6,1199.4 722.4,1199.4 723.2,1199.8 724.0,1199.5 724.8,1199.4 725.6,1199.4 726.4,1199.2 727.2,1199.4 728.0,1199.6 728.8,1199.5 729.6,1199.5 730.4,1199.2 731.2,1199.5 732.0,1199.5 732.8,1199.3 733.6,1199.5 734.4,1199.1 735.2,1198.9 736.0,1199.3 736.7,1199.3 737.5,1199.3 738.3,1199.7 739.1,1199.9 739.9,1199.5 740.7,1199.4 741.5,1199.7 742.3,1199.9 743.1,1200.1 743.9,1200.3 744.7,1199.9 745.5,1199.8 746.3,1199.8 747.1,1200.2 747.9,1200.2 748.7,1200.0 749.5,1200.2 750.3,1200.0 751.1,1200.1 751.9,1200.6 752.7,1200.1 753.4,1200.2 754.2,1200.5 755.0,1200.3 755.8,1200.4 756.6,1200.0 757.4,1200.0 758.2,1200.0 759.0,1199.7 759.8,1200.2 760.6,1200.0 761.4,1199.8 762.2,1199.7 763.0,1200.1 763.8,1199.9 764.6,1199.5 765.4,1199.9 766.2,1200.1 767.0,1199.8 767.8,1199.9 768.6,1199.9 769.4,1199.5 770.1,1199.9 770.9,1199.7 771.7,1200.1 772.5,1200.7 773.3,1200.3 774.1,1199.9 774.9,1200.0 775.7,1199.6 776.5,1199.7 777.3,1199.7 778.1,1199.7 778.9,1200.1 779.7,1199.7 780.5,1199.5 781.3,1199.4 782.1,1199.4 782.9,1199.3 783.7,1199.4 784.5,1199.4 785.3,1199.6 786.1,1199.9 786.8,1199.7 787.6,1199.5 788.4,1199.6 789.2,1199.2 790.0,1198.4 790.8,1198.0 791.6,1196.7 792.4,1196.1 793.2,1195.2 794.0,1194.4 794.8,1193.6 795.6,1192.9 796.4,1192.4 797.2,1191.8 798.0,1191.2 798.8,1190.3 799.6,1189.7 800.4,1188.7 801.2,1188.1 802.0,1187.5 802.8,1187.0 803.5,1186.3 804.3,1186.1 805.1,1185.9 805.9,1185.2 806.7,1185.2 807.5,1184.7 808.3,1184.8 809.1,1184.7 809.9,1184.5 810.7,1184.7 811.5,1184.1 812.3,1183.7 813.1,1183.9 813.9,1183.5 814.7,1183.5 815.5,1183.6 816.3,1183.0 817.1,1183.3 817.9,1183.2 818.7,1182.8 819.5,1182.8 820.3,1182.5 821.0,1182.8 821.8,1182.5 822.6,1182.3 823.4,1182.4 824.2,1182.3 825.0,1182.1 825.8,1181.9 826.6,1181.6 827.4,1181.5 828.2,1181.6 829.0,1181.3 829.8,1180.7 830.6,1180.7 831.4,1180.7 832.2,1180.5 833.0,1180.2 833.8,1180.4 834.6,1179.8 835.4,1179.8 836.2,1179.3 837.0,1179.5 837.7,1179.6 838.5,1179.3 839.3,1178.9 840.1,1178.8 840.9,1178.7 841.7,1178.6 842.5,1178.4 843.3,1178.1 844.1,1178.1 844.9,1177.9 845.7,1177.9 846.5,1177.8 847.3,1177.8 848.1,1177.5 848.9,1177.4 849.7,1177.4 850.5,1176.7 851.3,1176.4 852.1,1176.1 852.9,1175.5 853.7,1176.0 854.4,1175.6 855.2,1175.4 856.0,1174.9 856.8,1175.0 857.6,1174.9 858.4,1174.9 859.2,1174.3 860.0,1173.7 860.8,1173.9 861.6,1173.7 862.4,1173.4 863.2,1173.4 864.0,1173.6 864.8,1172.9 865.6,1173.0 866.4,1172.4 867.2,1172.5 868.0,1171.9 868.8,1171.4 869.6,1171.5 870.4,1171.6 871.1,1171.3 871.9,1171.0 872.7,1171.0 873.5,1170.7 874.3,1170.3 875.1,1170.1 875.9,1170.0 876.7,1170.7 877.5,1171.1 878.3,1171.3 879.1,1171.7 879.9,1171.8 880.7,1172.7 881.5,1172.6 882.3,1173.0 883.1,1173.6 883.9,1174.4 884.7,1175.6 885.5,1176.6 886.3,1177.1 887.1,1178.1 887.8,1178.8 888.6,1180.0 889.4,1181.6 890.2,1182.3 891.0,1183.6 891.8,1184.7 892.6,1185.7 893.4,1187.2 894.2,1188.5 895.0,1189.0 895.8,1190.6 896.6,1191.8 897.4,1193.0 898.2,1194.2 899.0,1195.1 899.8,1196.1 900.6,1197.1 901.4,1197.9 902.2,1198.3 903.0,1199.3 903.8,1199.4 904.5,1199.5 905.3,1199.9 906.1,1199.4 906.9,1199.4 907.7,1199.5 908.5,1199.4 909.3,1199.4 910.1,1199.5 910.9,1199.6 911.7,1199.8 912.5,1199.6 913.3,1199.5 914.1,1199.8 914.9,1199.5 915.7,1199.2 916.5,1199.7 917.3,1199.2 918.1,1199.1 918.9,1199.1 919.7,1199.4 920.5,1199.1 921.2,1199.5 922.0,1199.4 922.8,1199.7 923.6,1200.0 924.4,1199.7 925.2,1199.4 926.0,1199.8 926.8,1199.8 927.6,1199.9 928.4,1200.1 929.2,1200.0 930.0,1199.6 930.8,1199.4 931.6,1199.5 932.4,1199.6 933.2,1199.5 934.0,1199.9 934.8,1199.8 935.6,1199.9 936.4,1199.8 937.2,1200.2 937.9,1200.0 938.7,1200.0 939.5,1200.1 940.3,1200.2 941.1,1200.1 941.9,1200.6 942.7,1201.3 943.5,1201.1 944.3,1201.0 945.1,1201.3 945.9,1201.1 946.7,1201.0 947.5,1201.4 948.3,1201.6 949.1,1201.7 949.9,1201.2 950.7,1201.7 951.5,1201.7 952.3,1201.4 953.1,1201.1 953.9,1201.0 954.6,1201.1 955.4,1201.0 956.2,1200.9 957.0,1201.0 957.8,1201.2 958.6,1201.2 959.4,1201.1 960.2,1201.1 961.0,1201.2 961.8,1201.4 962.6,1201.4 963.4,1201.2 964.2,1201.5 965.0,1201.6 965.8,1201.4 966.6,1201.2 967.4,1201.3 968.2,1201.4 969.0,1201.3 969.8,1201.4 970.6,1201.5 971.3,1201.8 972.1,1201.6 972.9,1201.1 973.7,1201.4 974.5,1201.5 975.3,1201.3 976.1,1201.1 976.9,1200.7 977.7,1201.1 978.5,1201.1 979.3,1201.3 980.1,1201.4 980.9,1201.2 981.7,1200.9 982.5,1200.5 983.3,1200.2 984.1,1200.2 984.9,1199.8 985.7,1199.8 986.5,1199.5 987.3,1199.3 988.1,1198.9 988.8,1198.4 989.6,1197.6 990.4,1197.8 991.2,1197.4 992.0,1197.2 992.8,1197.2 993.6,1197.1 994.4,1197.1 995.2,1196.8 996.0,1196.8 996.8,1196.6 997.6,1196.2 998.4,1196.6 999.2,1196.0 1000.0,1196.2 1000.8,1196.0 1001.6,1195.9 1002.4,1196.0 1003.2,1195.8 1004.0,1195.5 1004.8,1195.6 1005.5,1195.4 1006.3,1195.1 1007.1,1195.3 1007.9,1195.6 1008.7,1195.6 1009.5,1195.4 1010.3,1195.1 1011.1,1195.6 1011.9,1195.4 1012.7,1195.4 1013.5,1194.8 1014.3,1195.1 1015.1,1194.9 1015.9,1194.9 1016.7,1194.6 1017.5,1194.3 1018.3,1194.6 1019.1,1194.9 1019.9,1194.4 1020.7,1194.6 1021.5,1194.5 1022.2,1194.3 1023.0,1194.6 1023.8,1194.6 1024.6,1194.3 1025.4,1194.4 1026.2,1193.8 1027.0,1194.2 1027.8,1193.9 1028.6,1194.0 1029.4,1193.9 1030.2,1194.0 1031.0,1193.7 1031.8,1193.4 1032.6,1193.4 1033.4,1193.5 1034.2,1194.0 1035.0,1193.6 1035.8,1193.9 1036.6,1193.4 1037.4,1193.5 1038.2,1193.7 1038.9,1193.7 1039.7,1193.3 1040.5,1193.3 1041.3,1193.0 1042.1,1193.1 1042.9,1192.7 1043.7,1192.2 1044.5,1192.3 1045.3,1192.5 1046.1,1192.7 1046.9,1192.6 1047.7,1192.0 1048.5,1192.1 1049.3,1192.3 1050.1,1191.4 1050.9,1191.2 1051.7,1191.0 1052.5,1191.4 1053.3,1191.2 1054.1,1191.5 1054.9,1191.4 1055.6,1191.1 1056.4,1191.3 1057.2,1191.1 1058.0,1191.3 1058.8,1190.8 1059.6,1190.8 1060.4,1190.7 1061.2,1190.5 1062.0,1190.6 1062.8,1190.6 1063.6,1190.6 1064.4,1191.0 1065.2,1190.5 1066.0,1190.1 1066.8,1189.9 1067.6,1190.1 1068.4,1190.1 1069.2,1190.6 1070.0,1190.8 1070.8,1191.3 1071.6,1191.4 1072.3,1191.3 1073.1,1191.8 1073.9,1191.9 1074.7,1191.4 1075.5,1191.7 1076.3,1192.3 1077.1,1192.4 1077.9,1192.9 1078.7,1193.6 1079.5,1193.3 1080.3,1193.9 1081.1,1194.4 1081.9,1194.8 1082.7,1195.6 1083.5,1196.1 1084.3,1196.4 1085.1,1196.9 1085.9,1197.4 1086.7,1197.9 1087.5,1198.4 1088.3,1198.4 1089.0,1199.0 1089.8,1199.1 1090.6,1199.5 1091.4,1200.4 1092.2,1200.8 1093.0,1201.0 1093.8,1200.7 1094.6,1201.0 1095.4,1200.9 1096.2,1200.7 1097.0,1200.8 1097.8,1201.2 1098.6,1201.1 1099.4,1200.9 1100.2,1201.1 1101.0,1200.9 1101.8,1201.2 1102.6,1201.5 1103.4,1201.4 1104.2,1201.2 1105.0,1201.6 1105.7,1201.3 1106.5,1201.4 1107.3,1201.6 1108.1,1201.4 1108.9,1200.9 1109.7,1201.4 1110.5,1200.7 1111.3,1201.0 1112.1,1201.3 1112.9,1201.2 1113.7,1201.6 1114.5,1201.4 1115.3,1201.3 1116.1,1201.8 1116.9,1202.0 1117.7,1201.9 1118.5,1201.7 1119.3,1201.4 1120.1,1201.5 1120.9,1201.6 1121.7,1201.3 1122.4,1201.2 1123.2,1201.3 1124.0,1201.4 1124.8,1201.7 1125.6,1201.6 1126.4,1201.1 1127.2,1201.1 1128.0,1201.0 1128.8,1201.5 1129.6,1201.4 1130.4,1201.7 1131.2,1201.4 1132.0,1201.3 1132.8,1201.3 1133.6,1201.0 1134.4,1201.3 1135.2,1201.0 1136.0,1201.2 1136.8,1201.4 1137.6,1201.5 1138.4,1201.2 1139.1,1201.4 1139.9,1201.2 1140.7,1201.2 1141.5,1201.4 1142.3,1202.0 1143.1,1201.7 1143.9,1201.3 1144.7,1201.5 1145.5,1201.2 1146.3,1201.5 1147.1,1201.2 1147.9,1200.9 1148.7,1201.1 1149.5,1201.1 1150.3,1201.5 1151.1,1201.1 1151.9,1201.4 1152.7,1201.2 1153.5,1200.8 1154.3,1201.0 1155.1,1201.1 1155.9,1201.1 1156.6,1201.4 1157.4,1201.5 1158.2,1201.1 1159.0,1201.4 1159.8,1201.4 1160.6,1201.7 1161.4,1201.5 1162.2,1201.6 1163.0,1201.5 1163.8,1201.5 1164.6,1201.4 1165.4,1201.5 1166.2,1201.5 1167.0,1201.2 1167.8,1201.0 1168.6,1201.0 1169.4,1201.0 1170.2,1201.5 1171.0,1201.3 1171.8,1201.0 1172.6,1200.7 1173.3,1200.4 1174.1,1200.5 1174.9,1200.0 1175.7,1199.9 1176.5,1199.5 1177.3,1198.8 1178.1,1198.6 1178.9,1198.5 1179.7,1198.5 1180.5,1198.0 1181.3,1198.2 1182.1,1198.0 1182.9,1198.1 1183.7,1197.6 1184.5,1197.4 1185.3,1197.1 1186.1,1197.1 1186.9,1196.3 1187.7,1196.1 1188.5,1196.1 1189.3,1196.3 1190.0,1196.1 1190.8,1196.1 1191.6,1196.2 1192.4,1196.4 1193.2,1196.2 1194.0,1196.6 1194.8,1196.4 1195.6,1196.6 1196.4,1196.1 1197.2,1195.7 1198.0,1195.4 1198.8,1195.8 1199.6,1195.4 1200.4,1194.9 1201.2,1195.3 1202.0,1195.5 1202.8,1195.5 1203.6,1195.5 1204.4,1195.1 1205.2,1195.2 1206.0,1195.0 1206.7,1194.9 1207.5,1195.1 1208.3,1194.9 1209.1,1194.8 1209.9,1194.7 1210.7,1194.6 1211.5,1194.6 1212.3,1194.5 1213.1,1194.8 1213.9,1194.7 1214.7,1194.2 1215.5,1194.1 1216.3,1194.2 1217.1,1194.3 1217.9,1194.3 1218.7,1194.2 1219.5,1194.5 1220.3,1194.3 1221.1,1194.1 1221.9,1194.4 1222.7,1194.4 1223.4,1194.1 1224.2,1193.9 1225.0,1193.3 1225.8,1192.9 1226.6,1193.8 1227.4,1193.7 1228.2,1193.2 1229.0,1193.1 1229.8,1192.7 1230.6,1192.5 1231.4,1192.7 1232.2,1192.5 1233.0,1192.6 1233.8,1192.9 1234.6,1192.6 1235.4,1192.2 1236.2,1192.1 1237.0,1192.2 1237.8,1191.8 1238.6,1191.6 1239.4,1191.5 1240.1,1192.1 1240.9,1192.1 1241.7,1192.0 1242.5,1192.0 1243.3,1192.2 1244.1,1191.9 1244.9,1191.3 1245.7,1191.5 1246.5,1190.8 1247.3,1191.1 1248.1,1190.9 1248.9,1190.9 1249.7,1191.1 1250.5,1190.8 1251.3,1190.7 1252.1,1190.6 1252.9,1190.2 1253.7,1190.1 1254.5,1190.5 1255.3,1190.0 1256.1,1190.3 1256.8,1190.6 1257.6,1190.2 1258.4,1190.0 1259.2,1190.4 1260.0,1190.5 1260.8,1190.8 1261.6,1190.8 1262.4,1191.1 1263.2,1191.2 1264.0,1191.7 1264.8,1191.6 1265.6,1191.9 1266.4,1191.6 1267.2,1191.9 1268.0,1192.7 1268.8,1193.4 1269.6,1193.6 1270.4,1194.2 1271.2,1194.4 1272.0,1194.6 1272.8,1194.8 1273.5,1195.1 1274.3,1195.6 1275.1,1196.3 1275.9,1196.8 1276.7,1197.3 1277.5,1197.4 1278.3,1198.1 1279.1,1198.6 1279.9,1198.8 1280.7,1199.6 1281.5,1200.0 1282.3,1200.3 1283.1,1200.6 1283.9,1200.9 1284.7,1200.9 1285.5,1201.2 1286.3,1201.1 1287.1,1201.2 1287.9,1201.5 1288.7,1202.0 1289.5,1201.8 1290.2,1201.4 1291.0,1201.3 1291.8,1201.4 1292.6,1201.3 1293.4,1201.2 1294.2,1201.2 1295.0,1201.4 1295.8,1201.0 1296.6,1201.1 1297.4,1201.1 1298.2,1201.3 1299.0,1201.2 1299.8,1201.0 1300.6,1201.3 1301.4,1201.3 1302.2,1201.4 1303.0,1201.6 1303.8,1201.0 1304.6,1201.4 1305.4,1201.2 1306.2,1201.4 1306.9,1201.4 1307.7,1201.4 1308.5,1201.5 1309.3,1201.4 1310.1,1201.9 1310.9,1201.8 1311.7,1201.5 1312.5,1201.0 1313.3,1201.2 1314.1,1201.5 1314.9,1201.2 1315.7,1201.2 1316.5,1201.5 1317.3,1201.6 1318.1,1201.8 1318.9,1201.3 1319.7,1201.6 1320.5,1201.7 1321.3,1201.4 1322.1,1200.9 1322.9,1200.9 1323.7,1200.4 1324.4,1200.6 1325.2,1200.1 1326.0,1200.0 1326.8,1200.0 1327.6,1200.5 1328.4,1200.0 1329.2,1200.0 1330.0,1199.9 1330.8,1200.2 1331.6,1199.8 1332.4,1200.0 1333.2,1199.9 1334.0,1200.0 1334.8,1200.0 1335.6,1199.9 1336.4,1199.8 1337.2,1199.6 1338.0,1199.9 1338.8,1199.7 1339.6,1200.1 1340.4,1200.0 1341.1,1200.4 1341.9,1200.2 1342.7,1200.1 1343.5,1200.2 1344.3,1200.2 1345.1,1200.1 1345.9,1199.8 1346.7,1199.9 1347.5,1199.9 1348.3,1199.8 1349.1,1199.6 1349.9,1199.5 1350.7,1199.6 1351.5,1200.2 1352.3,1199.9 1353.1,1200.1 1353.9,1199.9 1354.7,1200.1 1355.5,1199.9 1356.3,1200.0 1357.1,1200.1 1357.8,1199.9 1358.6,1200.3 1359.4,1199.8 1360.2,1199.7 1361.0,1199.6 1361.8,1199.4 1362.6,1198.7 1363.4,1198.3 1364.2,1197.2 1365.0,1196.7 1365.8,1195.8 1366.6,1195.1 1367.4,1194.2 1368.2,1193.1 1369.0,1192.5 1369.8,1191.9 1370.6,1190.9 1371.4,1190.2 1372.2,1189.2 1373.0,1188.7 1373.8,1188.0 1374.5,1187.2 1375.3,1186.7 1376.1,1186.5 1376.9,1186.1 1377.7,1185.7 1378.5,1185.3 1379.3,1185.4 1380.1,1185.1 1380.9,1185.2 1381.7,1185.3 1382.5,1184.6 1383.3,1184.3 1384.1,1184.1 1384.9,1183.9 1385.7,1183.9 1386.5,1183.5 1387.3,1183.4 1388.1,1183.6 1388.9,1183.5 1389.7,1183.7 1390.5,1183.8 1391.2,1183.2 1392.0,1182.8 1392.8,1182.9 1393.6,1182.5 1394.4,1182.4 1395.2,1182.6 1396.0,1182.2 1396.8,1181.9 1397.6,1181.7 1398.4,1181.8 1399.2,1181.9 1400.0,1181.5 1400.8,1181.0 1401.6,1180.2 1402.4,1181.0 1403.2,1180.9 1404.0,1180.5 1404.8,1180.3 1405.6,1180.0 1406.4,1180.3 1407.2,1180.4 1407.9,1179.9 1408.7,1180.2 1409.5,1180.0 1410.3,1180.0 1411.1,1179.6 1411.9,1179.4 1412.7,1178.8 1413.5,1178.8 1414.3,1178.4 1415.1,1178.3 1415.9,1178.4 1416.7,1178.6 1417.5,1178.2 1418.3,1178.1 1419.1,1177.5 1419.9,1177.5 1420.7,1177.2 1421.5,1176.9 1422.3,1177.4 1423.1,1177.1 1423.9,1176.7 1424.6,1176.3 1425.4,1176.1 1426.2,1175.6 1427.0,1175.3 1427.8,1175.0 1428.6,1174.7 1429.4,1175.1 1430.2,1174.6 1431.0,1174.5 1431.8,1174.7 1432.6,1174.1 1433.4,1173.6 1434.2,1173.3 1435.0,1173.2 1435.8,1173.2 1436.6,1172.6 1437.4,1172.5 1438.2,1172.5 1439.0,1172.6 1439.8,1172.3 1440.6,1172.4 1441.3,1171.8 1442.1,1171.3 1442.9,1171.3 1443.7,1171.4 1444.5,1171.2 1445.3,1170.5 1446.1,1170.0 1446.9,1170.0 1447.7,1169.7 1448.5,1169.8 1449.3,1170.3 1450.1,1170.9 1450.9,1171.0 1451.7,1171.2 1452.5,1172.3 1453.3,1172.6 1454.1,1173.2 1454.9,1174.0 1455.7,1174.4 1456.5,1174.7 1457.3,1175.3 1458.0,1176.1 1458.8,1176.9 1459.6,1178.1 1460.4,1179.4 1461.2,1179.9 1462.0,1180.7 1462.8,1182.4 1463.6,1183.8 1464.4,1185.1 1465.2,1186.0 1466.0,1187.0 1466.8,1188.3 1467.6,1189.2 1468.4,1190.3 1469.2,1191.3 1470.0,1192.5 1470.8,1193.7 1471.6,1194.7 1472.4,1196.2 1473.2,1197.0 1474.0,1198.1 1474.7,1198.4 1475.5,1198.7 1476.3,1199.1 1477.1,1199.3 1477.9,1198.9 1478.7,1198.9 1479.5,1198.9 1480.3,1199.1 1481.1,1199.1 1481.9,1199.3 1482.7,1199.2 1483.5,1199.8 1484.3,1199.5 1485.1,1199.9 1485.9,1199.7 1486.7,1199.6 1487.5,1199.2 1488.3,1199.4 1489.1,1199.6 1489.9,1199.5 1490.7,1199.3 1491.4,1199.4 1492.2,1199.6 1493.0,1199.5 1493.8,1199.8 1494.6,1199.7 1495.4,1199.8 1496.2,1199.5 1497.0,1199.8 1497.8,1199.4 1498.6,1199.2 1499.4,1199.4 1500.2,1199.9 1501.0,1199.7 1501.8,1199.8 1502.6,1199.7 1503.4,1199.6 1504.2,1199.6 1505.0,1199.6 1505.8,1200.1 1506.6,1199.9 1507.4,1200.1 1508.2,1199.9 1508.9,1200.5 1509.7,1200.4 1510.5,1200.3 1511.3,1200.5 1512.1,1200.1 1512.9,1199.8 1513.7,1199.7 1514.5,1199.9 1515.3,1200.0 1516.1,1199.7 1516.9,1200.0 1517.7,1199.5 1518.5,1199.5 1519.3,1199.8 1520.1,1199.5 1520.9,1199.4 1521.7,1200.1 1522.5,1200.0 1523.3,1200.0 1524.1,1200.0 1524.9,1199.5 1525.6,1199.4 1526.4,1199.1 1527.2,1199.3 1528.0,1199.6 1528.8,1199.9 1529.6,1199.8 1530.4,1199.7 1531.2,1199.8 1532.0,1199.9 1532.8,1199.7 1533.6,1199.8 1534.4,1199.4 1535.2,1199.7 1536.0,1199.7 1536.8,1199.7 1537.6,1199.2 1538.4,1199.6 1539.2,1199.9 1540.0,1199.8 1540.8,1199.9 1541.6,1199.6 1542.3,1199.5 1543.1,1199.6 1543.9,1199.7 1544.7,1200.3 1545.5,1200.4 1546.3,1200.2 1547.1,1200.3 1547.9,1199.9 1548.7,1199.5 1549.5,1199.8 1550.3,1200.0 1551.1,1199.8 1551.9,1199.1 1552.7,1199.0 1553.5,1198.8 1554.3,1198.0 1555.1,1197.6 1555.9,1196.9 1556.7,1195.9 1557.5,1195.2 1558.3,1194.2 1559.0,1193.4 1559.8,1192.7 1560.6,1191.6 1561.4,1190.2 1562.2,1189.5 1563.0,1189.0 1563.8,1188.4 1564.6,1187.6 1565.4,1187.2 1566.2,1186.8 1567.0,1186.5 1567.8,1186.0 1568.6,1185.6 1569.4,1185.4 1570.2,1185.1 1571.0,1184.8 1571.8,1184.4 1572.6,1184.4 1573.4,1184.3 1574.2,1184.2 1575.0,1184.2 1575.7,1183.9 1576.5,1184.3 1577.3,1183.9 1578.1,1183.8 1578.9,1183.6 1579.7,1183.1 1580.5,1182.8 1581.3,1182.4 1582.1,1183.3 1582.9,1182.8 1583.7,1182.7 1584.5,1182.2 1585.3,1182.4 1586.1,1182.1 1586.9,1182.2 1587.7,1182.1 1588.5,1182.2 1589.3,1181.8 1590.1,1181.7 1590.9,1181.6 1591.7,1180.9 1592.4,1181.1 1593.2,1180.7 1594.0,1180.7 1594.8,1180.6 1595.6,1180.4 1596.4,1180.4 1597.2,1179.6 1598.0,1179.9 1598.8,1179.9 1599.6,1179.7 1600.4,1179.3 1601.2,1179.1 1602.0,1179.0 1602.8,1179.1 1603.6,1178.9 1604.4,1178.5 1605.2,1178.2 1606.0,1178.5 1606.8,1178.9 1607.6,1178.2 1608.4,1178.0 1609.1,1177.8 1609.9,1177.9 1610.7,1177.5 1611.5,1177.2 1612.3,1176.7 1613.1,1176.2 1613.9,1176.3 1614.7,1176.2 1615.5,1176.1 1616.3,1175.9 1617.1,1176.3 1617.9,1176.0 1618.7,1175.7 1619.5,1174.9 1620.3,1174.6 1621.1,1174.8 1621.9,1174.7 1622.7,1174.6 1623.5,1174.5 1624.3,1174.0 1625.1,1173.5 1625.8,1173.5 1626.6,1173.7 1627.4,1173.3 1628.2,1172.7 1629.0,1172.6 1629.8,1172.7 1630.6,1172.4 1631.4,1171.5 1632.2,1171.5 1633.0,1171.2 1633.8,1171.4 1634.6,1171.1 1635.4,1171.1 1636.2,1170.7 1637.0,1170.9 1637.8,1170.9 1638.6,1170.1 1639.4,1170.3 1640.2,1170.3 1641.0,1170.8 1641.8,1170.9 1642.5,1171.7 1643.3,1172.3 1644.1,1172.3 1644.9,1172.7 1645.7,1173.8 1646.5,1174.3 1647.3,1174.7 1648.1,1175.0 1648.9,1175.9 1649.7,1176.9 1650.5,1178.3 1651.3,1179.0 1652.1,1179.9 1652.9,1181.6 1653.7,1182.5 1654.5,1184.3 1655.3,1185.1 1656.1,1186.2 1656.9,1187.1 1657.7,1188.5 1658.5,1189.3 1659.2,1190.6 1660.0,1191.6 1660.8,1192.8 1661.6,1194.0 1662.4,1194.6 1663.2,1195.7 1664.0,1196.4 1664.8,1197.4 1665.6,1198.1 1666.4,1198.3 1667.2,1198.9 1668.0,1199.3 1668.8,1199.6 1669.6,1199.6 1670.4,1199.3 1671.2,1199.3 1672.0,1199.4 1672.8,1199.4 1673.6,1199.2 1674.4,1199.2 1675.2,1199.6 1676.0,1199.8 1676.7,1199.2 1677.5,1199.4 1678.3,1199.3 1679.1,1199.6 1679.9,1199.9 1680.7,1199.9 1681.5,1199.5 1682.3,1199.7 1683.1,1199.4 1683.9,1199.4 1684.7,1199.8 1685.5,1199.9 1686.3,1199.7 1687.1,1199.3 1687.9,1199.3 1688.7,1200.0 1689.5,1199.7 1690.3,1199.8 1691.1,1199.7 1691.9,1199.5 1692.7,1199.9 1693.4,1199.6 1694.2,1199.7 1695.0,1200.0 1695.8,1199.8 1696.6,1200.0 1697.4,1200.1 1698.2,1200.1 1699.0,1199.9 1699.8,1199.6 1700.6,1199.9 1701.4,1199.4 1702.2,1199.7 1703.0,1199.7 1703.8,1199.7 1704.6,1199.8 1705.4,1200.1 1706.2,1200.0 1707.0,1200.1 1707.8,1200.2 1708.6,1200.3 1709.4,1200.1 1710.1,1200.1 1710.9,1200.0 1711.7,1200.1 1712.5,1200.3 1713.3,1200.4 1714.1,1199.9 1714.9,1199.7 1715.7,1199.8 1716.5,1199.7 1717.3,1200.1 1718.1,1199.8 1718.9,1200.2 1719.7,1200.2 1720.5,1200.2 1721.3,1200.2 1722.1,1200.5 1722.9,1200.0 1723.7,1200.4 1724.5,1199.9 1725.3,1199.9 1726.1,1199.8 1726.8,1199.9 1727.6,1200.1 1728.4,1200.2 1729.2,1199.7 1730.0,1199.9 1730.8,1200.1 1731.6,1199.8 1732.4,1199.4 1733.2,1200.0 1734.0,1200.0 1734.8,1200.0 1735.6,1200.2 1736.4,1200.4 1737.2,1200.0 1738.0,1200.0 1738.8,1199.8 1739.6,1200.2 1740.4,1200.3 1741.2,1200.3 1742.0,1200.0 1742.8,1199.6 1743.5,1199.4 1744.3,1199.3 1745.1,1198.6 1745.9,1197.3 1746.7,1196.7 1747.5,1195.8 1748.3,1195.1 1749.1,1194.1 1749.9,1193.1 1750.7,1192.7 1751.5,1191.8 1752.3,1190.5 1753.1,1190.0 1753.9,1189.3 1754.7,1188.5 1755.5,1187.7 1756.3,1187.5 1757.1,1186.6 1757.9,1186.3 1758.7,1185.9 1759.5,1185.6 1760.2,1185.4 1761.0,1185.0 1761.8,1185.0 1762.6,1184.8 1763.4,1184.7 1764.2,1184.5 1765.0,1184.4 1765.8,1184.6 1766.6,1184.1 1767.4,1184.3 1768.2,1183.9 1769.0,1183.7 1769.8,1183.8 1770.6,1183.5 1771.4,1183.4 1772.2,1183.2 1773.0,1183.2 1773.8,1182.7 1774.6,1182.6 1775.4,1182.3 1776.2,1182.4 1776.9,1182.4 1777.7,1182.1 1778.5,1182.3 1779.3,1182.1 1780.1,1181.5 1780.9,1181.6 1781.7,1181.4 1782.5,1181.6 1783.3,1181.0 1784.1,1181.2 1784.9,1181.2 1785.7,1180.8 1786.5,1180.8 1787.3,1181.0 1788.1,1180.8 1788.9,1180.3 1789.7,1180.1 1790.5,1179.8 1791.3,1179.5 1792.1,1179.3 1792.9,1178.9 1793.6,1178.9 1794.4,1178.6 1795.2,1178.7 1796.0,1178.4 1796.8,1178.2 1797.6,1178.0 1798.4,1177.4 1799.2,1177.6 1800.0,1177.5 1800.8,1177.4 1801.6,1177.1 1802.4,1177.0 1803.2,1176.8 1804.0,1176.8 1804.8,1176.8 1805.6,1176.9 1806.4,1176.5 1807.2,1176.3 1808.0,1176.3 1808.8,1175.5 1809.6,1175.1 1810.3,1175.0 1811.1,1175.2 1811.9,1174.9 1812.7,1174.6 1813.5,1174.5 1814.3,1173.9 1815.1,1173.6 1815.9,1173.8 1816.7,1173.4 1817.5,1173.6 1818.3,1173.1 1819.1,1172.7 1819.9,1172.3 1820.7,1172.8 1821.5,1172.0 1822.3,1172.1 1823.1,1171.7 1823.9,1171.7 1824.7,1171.4 1825.5,1171.0 1826.3,1170.9 1827.0,1170.6 1827.8,1170.6 1828.6,1170.6 1829.4,1170.6 1830.2,1170.8 1831.0,1170.7 1831.8,1171.0 1832.6,1170.9 1833.4,1171.5 1834.2,1171.7 1835.0,1172.9 1835.8,1173.0 1836.6,1173.4 1837.4,1173.7 1838.2,1174.0 1839.0,1174.9 1839.8,1175.5 1840.6,1176.8 1841.4,1178.1 1842.2,1178.9 1843.0,1180.1 1843.8,1181.0 1844.5,1182.5 1845.3,1183.7 1846.1,1184.7 1846.9,1185.8 1847.7,1186.7 1848.5,1187.3 1849.3,1188.8 1850.1,1189.8 1850.9,1191.2 1851.7,1192.7 1852.5,1194.1 1853.3,1195.1 1854.1,1196.4 1854.9,1197.1 1855.7,1197.6 1856.5,1198.8 1857.3,1199.1 1858.1,1199.5 1858.9,1199.2 1859.7,1199.0 1860.5,1199.2 1861.2,1199.3 1862.0,1199.5 1862.8,1199.5 1863.6,1199.1 1864.4,1199.1 1865.2,1199.3 1866.0,1199.0 1866.8,1199.2 1867.6,1199.3 1868.4,1199.5 1869.2,1199.9 1870.0,1199.7 1870.8,1199.7 1871.6,1199.5 1872.4,1199.8 1873.2,1200.0 1874.0,1199.8 1874.8,1199.9 1875.6,1199.9 1876.4,1199.8 1877.2,1200.0 1877.9,1199.9 1878.7,1199.3 1879.5,1199.5 1880.3,1199.7 1881.1,1199.7 1881.9,1199.9 1882.7,1199.7 1883.5,1199.5 1884.3,1199.8 1885.1,1199.9 1885.9,1199.7 1886.7,1200.2 1887.5,1199.7 1888.3,1199.9 1889.1,1200.3 1889.9,1200.1 1890.7,1200.2 1891.5,1200.4 1892.3,1200.4 1893.1,1200.1 1893.9,1199.9 1894.6,1200.4 1895.4,1200.2 1896.2,1200.3 L1896.2,1205.9 Z" fill="#4e60e0" fill-opacity="0.93" stroke="#4a55d8" stroke-width="1.2" stroke-linejoin="round"/>
<path d="M560.2,1205.9 L560.2,1205.6 561.0,1205.7 561.8,1205.7 562.6,1201.7 563.4,1202.1 564.2,1202.0 565.0,1202.5 565.8,1202.0 566.6,1201.9 567.4,1201.6 568.2,1201.9 568.9,1202.1 569.7,1201.9 570.5,1202.0 571.3,1202.0 572.1,1202.1 572.9,1202.2 573.7,1201.8 574.5,1201.9 575.3,1201.8 576.1,1201.4 576.9,1201.3 577.7,1201.6 578.5,1201.4 579.3,1201.8 580.1,1202.0 580.9,1201.9 581.7,1201.8 582.5,1201.8 583.3,1201.3 584.1,1201.9 584.9,1201.7 585.6,1201.6 586.4,1201.5 587.2,1201.8 588.0,1202.0 588.8,1202.0 589.6,1201.9 590.4,1202.2 591.2,1201.9 592.0,1202.1 592.8,1202.3 593.6,1202.0 594.4,1201.9 595.2,1202.2 596.0,1202.1 596.8,1202.1 597.6,1202.0 598.4,1202.0 599.2,1201.5 600.0,1201.0 600.8,1200.7 601.6,1200.1 602.3,1199.7 603.1,1199.0 603.9,1198.7 604.7,1198.6 605.5,1198.1 606.3,1197.6 607.1,1197.6 607.9,1197.2 608.7,1196.4 609.5,1196.2 610.3,1195.4 611.1,1195.4 611.9,1194.8 612.7,1194.5 613.5,1194.3 614.3,1194.0 615.1,1193.8 615.9,1193.0 616.7,1192.8 617.5,1192.9 618.3,1192.4 619.0,1192.4 619.8,1192.4 620.6,1192.1 621.4,1192.0 622.2,1192.0 623.0,1192.1 623.8,1191.9 624.6,1191.8 625.4,1191.8 626.2,1191.6 627.0,1191.5 627.8,1191.5 628.6,1191.3 629.4,1190.8 630.2,1190.4 631.0,1190.3 631.8,1190.4 632.6,1190.3 633.4,1190.1 634.2,1189.7 635.0,1189.8 635.7,1189.9 636.5,1189.8 637.3,1189.5 638.1,1189.2 638.9,1188.7 639.7,1189.1 640.5,1189.0 641.3,1188.7 642.1,1188.8 642.9,1188.6 643.7,1188.7 644.5,1188.3 645.3,1187.8 646.1,1187.3 646.9,1187.5 647.7,1187.4 648.5,1186.9 649.3,1186.7 650.1,1186.6 650.9,1186.5 651.7,1186.5 652.5,1186.7 653.2,1186.5 654.0,1186.1 654.8,1186.0 655.6,1185.6 656.4,1185.4 657.2,1185.2 658.0,1185.0 658.8,1185.2 659.6,1185.0 660.4,1184.6 661.2,1184.5 662.0,1184.5 662.8,1184.1 663.6,1184.1 664.4,1183.4 665.2,1183.1 666.0,1183.0 666.8,1182.7 667.6,1182.7 668.4,1182.1 669.2,1182.2 669.9,1181.7 670.7,1181.6 671.5,1181.5 672.3,1181.4 673.1,1181.2 673.9,1180.8 674.7,1180.7 675.5,1180.5 676.3,1179.8 677.1,1180.0 677.9,1180.0 678.7,1180.0 679.5,1180.0 680.3,1179.4 681.1,1179.0 681.9,1179.0 682.7,1179.0 683.5,1178.5 684.3,1178.6 685.1,1178.1 685.9,1178.1 686.6,1178.5 687.4,1179.1 688.2,1179.4 689.0,1180.3 689.8,1180.4 690.6,1180.6 691.4,1181.6 692.2,1182.1 693.0,1182.4 693.8,1183.0 694.6,1183.8 695.4,1184.2 696.2,1185.1 697.0,1185.9 697.8,1187.0 698.6,1187.8 699.4,1189.0 700.2,1190.1 701.0,1190.9 701.8,1191.5 702.6,1192.0 703.3,1193.2 704.1,1193.7 704.9,1194.8 705.7,1196.0 706.5,1196.6 707.3,1197.3 708.1,1198.3 708.9,1199.0 709.7,1199.6 710.5,1200.1 711.3,1200.7 712.1,1201.2 712.9,1200.6 713.7,1200.8 714.5,1201.3 715.3,1201.2 716.1,1201.2 716.9,1201.1 717.7,1201.6 718.5,1201.6 719.3,1201.4 720.0,1201.2 720.8,1201.0 721.6,1201.2 722.4,1201.5 723.2,1201.0 724.0,1201.5 724.8,1201.5 725.6,1201.2 726.4,1201.4 727.2,1201.1 728.0,1201.2 728.8,1201.2 729.6,1201.0 730.4,1201.2 731.2,1201.7 732.0,1201.4 732.8,1201.3 733.6,1201.4 734.4,1201.4 735.2,1201.6 736.0,1201.8 736.7,1201.5 737.5,1201.8 738.3,1201.5 739.1,1201.7 739.9,1201.8 740.7,1202.0 741.5,1201.9 742.3,1201.8 743.1,1201.7 743.9,1201.7 744.7,1201.5 745.5,1201.7 746.3,1201.7 747.1,1201.9 747.9,1201.6 748.7,1201.4 749.5,1201.5 750.3,1201.2 751.1,1201.6 751.9,1201.9 752.7,1201.8 753.4,1201.3 754.2,1201.4 755.0,1201.5 755.8,1201.6 756.6,1201.4 757.4,1201.5 758.2,1201.3 759.0,1201.4 759.8,1201.2 760.6,1201.9 761.4,1201.9 762.2,1201.8 763.0,1202.1 763.8,1202.1 764.6,1201.7 765.4,1201.6 766.2,1201.4 767.0,1201.8 767.8,1201.5 768.6,1201.7 769.4,1201.6 770.1,1201.7 770.9,1201.5 771.7,1201.6 772.5,1201.7 773.3,1201.8 774.1,1201.7 774.9,1201.3 775.7,1201.7 776.5,1201.5 777.3,1201.5 778.1,1201.5 778.9,1201.5 779.7,1201.4 780.5,1201.6 781.3,1201.7 782.1,1201.9 782.9,1201.6 783.7,1201.4 784.5,1201.3 785.3,1201.4 786.1,1201.5 786.8,1201.7 787.6,1201.6 788.4,1201.6 789.2,1201.5 790.0,1201.4 790.8,1201.3 791.6,1200.6 792.4,1200.2 793.2,1199.4 794.0,1199.2 794.8,1198.2 795.6,1198.1 796.4,1197.9 797.2,1197.4 798.0,1197.1 798.8,1196.4 799.6,1196.3 800.4,1196.2 801.2,1195.0 802.0,1194.6 802.8,1194.3 803.5,1194.2 804.3,1194.0 805.1,1193.7 805.9,1193.4 806.7,1193.1 807.5,1193.4 808.3,1192.8 809.1,1192.5 809.9,1192.2 810.7,1192.5 811.5,1192.4 812.3,1192.3 813.1,1192.1 813.9,1192.3 814.7,1191.7 815.5,1191.7 816.3,1192.1 817.1,1191.5 817.9,1191.4 818.7,1190.9 819.5,1191.2 820.3,1191.0 821.0,1191.0 821.8,1190.5 822.6,1190.6 823.4,1190.6 824.2,1190.4 825.0,1190.2 825.8,1189.6 826.6,1189.6 827.4,1189.5 828.2,1189.3 829.0,1189.1 829.8,1188.9 830.6,1188.9 831.4,1188.8 832.2,1188.7 833.0,1188.4 833.8,1188.3 834.6,1187.8 835.4,1188.1 836.2,1188.1 837.0,1187.8 837.7,1187.5 838.5,1187.1 839.3,1186.9 840.1,1186.8 840.9,1186.3 841.7,1186.2 842.5,1186.5 843.3,1186.3 844.1,1186.4 844.9,1186.2 845.7,1186.1 846.5,1186.0 847.3,1185.9 848.1,1185.5 848.9,1185.2 849.7,1184.9 850.5,1184.7 851.3,1184.5 852.1,1184.2 852.9,1183.8 853.7,1183.9 854.4,1184.1 855.2,1183.7 856.0,1183.4 856.8,1182.9 857.6,1182.5 858.4,1182.1 859.2,1182.5 860.0,1182.0 860.8,1181.5 861.6,1181.3 862.4,1181.0 863.2,1180.8 864.0,1180.8 864.8,1180.4 865.6,1180.3 866.4,1180.6 867.2,1180.1 868.0,1180.2 868.8,1179.9 869.6,1180.1 870.4,1179.7 871.1,1179.2 871.9,1179.0 872.7,1179.2 873.5,1179.0 874.3,1178.3 875.1,1178.3 875.9,1178.2 876.7,1178.0 877.5,1178.4 878.3,1178.9 879.1,1179.0 879.9,1180.2 880.7,1180.4 881.5,1180.8 882.3,1181.1 883.1,1181.6 883.9,1182.4 884.7,1183.2 885.5,1183.5 886.3,1184.2 887.1,1185.5 887.8,1186.4 888.6,1186.9 889.4,1187.7 890.2,1188.7 891.0,1189.6 891.8,1190.5 892.6,1191.2 893.4,1192.2 894.2,1193.0 895.0,1194.1 895.8,1194.6 896.6,1195.7 897.4,1196.5 898.2,1197.3 899.0,1198.2 899.8,1199.2 900.6,1200.0 901.4,1200.5 902.2,1201.3 903.0,1201.2 903.8,1200.7 904.5,1201.2 905.3,1201.4 906.1,1201.3 906.9,1201.5 907.7,1201.7 908.5,1201.5 909.3,1201.6 910.1,1201.6 910.9,1201.3 911.7,1201.3 912.5,1201.3 913.3,1201.0 914.1,1201.1 914.9,1201.1 915.7,1201.3 916.5,1201.2 917.3,1201.0 918.1,1201.3 918.9,1201.4 919.7,1201.7 920.5,1201.7 921.2,1201.6 922.0,1201.4 922.8,1201.6 923.6,1201.2 924.4,1201.0 925.2,1201.1 926.0,1200.8 926.8,1201.4 927.6,1201.9 928.4,1201.9 929.2,1202.0 930.0,1202.0 930.8,1201.9 931.6,1201.7 932.4,1201.4 933.2,1201.6 934.0,1201.4 934.8,1201.6 935.6,1201.6 936.4,1201.3 937.2,1201.5 937.9,1201.6 938.7,1201.7 939.5,1202.1 940.3,1202.0 941.1,1201.7 941.9,1202.3 942.7,1202.5 943.5,1202.5 944.3,1202.8 945.1,1202.9 945.9,1203.1 946.7,1203.5 947.5,1203.4 948.3,1203.2 949.1,1203.0 949.9,1203.3 950.7,1202.9 951.5,1203.4 952.3,1203.5 953.1,1203.3 953.9,1203.5 954.6,1203.4 955.4,1203.2 956.2,1203.4 957.0,1203.6 957.8,1203.2 958.6,1202.9 959.4,1203.0 960.2,1202.8 961.0,1203.4 961.8,1203.5 962.6,1203.1 963.4,1203.0 964.2,1203.1 965.0,1203.4 965.8,1203.7 966.6,1203.3 967.4,1203.0 968.2,1203.1 969.0,1203.0 969.8,1203.1 970.6,1203.3 971.3,1203.4 972.1,1203.4 972.9,1203.5 973.7,1203.0 974.5,1203.0 975.3,1203.1 976.1,1202.8 976.9,1202.9 977.7,1203.0 978.5,1203.0 979.3,1202.9 980.1,1203.1 980.9,1202.9 981.7,1203.0 982.5,1202.9 983.3,1202.7 984.1,1202.6 984.9,1202.2 985.7,1201.9 986.5,1201.3 987.3,1201.4 988.1,1201.2 988.8,1201.3 989.6,1201.1 990.4,1200.9 991.2,1200.5 992.0,1200.4 992.8,1200.3 993.6,1200.3 994.4,1200.1 995.2,1199.7 996.0,1200.0 996.8,1199.5 997.6,1199.5 998.4,1199.7 999.2,1199.6 1000.0,1199.3 1000.8,1199.0 1001.6,1199.3 1002.4,1199.3 1003.2,1198.8 1004.0,1198.8 1004.8,1198.4 1005.5,1198.4 1006.3,1198.7 1007.1,1198.7 1007.9,1198.8 1008.7,1198.7 1009.5,1198.4 1010.3,1198.3 1011.1,1198.5 1011.9,1198.7 1012.7,1198.5 1013.5,1198.9 1014.3,1198.6 1015.1,1198.0 1015.9,1198.1 1016.7,1198.5 1017.5,1198.3 1018.3,1198.2 1019.1,1197.9 1019.9,1198.2 1020.7,1198.0 1021.5,1198.0 1022.2,1197.6 1023.0,1197.5 1023.8,1197.7 1024.6,1197.4 1025.4,1197.4 1026.2,1197.1 1027.0,1197.0 1027.8,1196.9 1028.6,1197.1 1029.4,1197.1 1030.2,1197.2 1031.0,1197.0 1031.8,1197.4 1032.6,1196.8 1033.4,1196.7 1034.2,1196.7 1035.0,1197.0 1035.8,1197.1 1036.6,1197.0 1037.4,1196.6 1038.2,1196.6 1038.9,1196.6 1039.7,1196.2 1040.5,1196.3 1041.3,1196.6 1042.1,1196.9 1042.9,1196.3 1043.7,1195.6 1044.5,1195.5 1045.3,1195.4 1046.1,1195.7 1046.9,1195.1 1047.7,1195.3 1048.5,1195.0 1049.3,1194.5 1050.1,1194.6 1050.9,1195.1 1051.7,1194.9 1052.5,1194.9 1053.3,1194.8 1054.1,1194.4 1054.9,1194.0 1055.6,1193.9 1056.4,1194.1 1057.2,1194.0 1058.0,1194.2 1058.8,1194.0 1059.6,1194.0 1060.4,1193.7 1061.2,1193.5 1062.0,1193.5 1062.8,1193.5 1063.6,1193.5 1064.4,1193.1 1065.2,1193.0 1066.0,1192.9 1066.8,1193.3 1067.6,1193.2 1068.4,1193.4 1069.2,1193.4 1070.0,1193.2 1070.8,1193.5 1071.6,1193.8 1072.3,1194.6 1073.1,1194.8 1073.9,1195.3 1074.7,1195.5 1075.5,1195.3 1076.3,1195.2 1077.1,1195.8 1077.9,1196.7 1078.7,1196.5 1079.5,1196.7 1080.3,1197.3 1081.1,1198.2 1081.9,1198.0 1082.7,1198.4 1083.5,1198.8 1084.3,1199.6 1085.1,1199.9 1085.9,1199.8 1086.7,1200.4 1087.5,1200.5 1088.3,1201.0 1089.0,1201.3 1089.8,1201.5 1090.6,1202.1 1091.4,1202.3 1092.2,1202.6 1093.0,1202.9 1093.8,1202.9 1094.6,1203.0 1095.4,1203.3 1096.2,1202.8 1097.0,1202.7 1097.8,1202.9 1098.6,1202.9 1099.4,1203.3 1100.2,1203.2 1101.0,1203.1 1101.8,1203.0 1102.6,1203.3 1103.4,1203.2 1104.2,1203.1 1105.0,1203.3 1105.7,1202.7 1106.5,1203.0 1107.3,1203.5 1108.1,1203.4 1108.9,1202.9 1109.7,1203.4 1110.5,1202.8 1111.3,1202.8 1112.1,1202.9 1112.9,1202.9 1113.7,1202.7 1114.5,1203.2 1115.3,1203.2 1116.1,1203.3 1116.9,1203.1 1117.7,1203.3 1118.5,1203.3 1119.3,1203.3 1120.1,1203.2 1120.9,1203.0 1121.7,1203.3 1122.4,1203.2 1123.2,1203.2 1124.0,1203.1 1124.8,1202.8 1125.6,1203.1 1126.4,1203.4 1127.2,1203.4 1128.0,1203.3 1128.8,1203.0 1129.6,1203.1 1130.4,1203.0 1131.2,1203.1 1132.0,1202.8 1132.8,1202.9 1133.6,1202.7 1134.4,1202.7 1135.2,1203.3 1136.0,1203.3 1136.8,1203.4 1137.6,1203.5 1138.4,1203.3 1139.1,1203.5 1139.9,1203.2 1140.7,1202.8 1141.5,1202.5 1142.3,1202.8 1143.1,1202.9 1143.9,1203.2 1144.7,1203.1 1145.5,1203.3 1146.3,1203.3 1147.1,1203.2 1147.9,1203.1 1148.7,1203.2 1149.5,1202.8 1150.3,1203.1 1151.1,1202.9 1151.9,1203.0 1152.7,1203.2 1153.5,1202.9 1154.3,1203.0 1155.1,1203.2 1155.9,1203.0 1156.6,1203.3 1157.4,1203.2 1158.2,1203.5 1159.0,1203.2 1159.8,1203.8 1160.6,1203.8 1161.4,1203.6 1162.2,1203.3 1163.0,1203.5 1163.8,1203.1 1164.6,1203.2 1165.4,1203.3 1166.2,1203.7 1167.0,1203.2 1167.8,1203.3 1168.6,1203.3 1169.4,1203.2 1170.2,1202.9 1171.0,1202.9 1171.8,1202.6 1172.6,1202.7 1173.3,1202.7 1174.1,1202.4 1174.9,1201.8 1175.7,1201.8 1176.5,1201.9 1177.3,1201.6 1178.1,1201.4 1178.9,1201.4 1179.7,1201.1 1180.5,1200.9 1181.3,1201.2 1182.1,1200.6 1182.9,1200.8 1183.7,1200.4 1184.5,1200.4 1185.3,1200.2 1186.1,1200.0 1186.9,1199.9 1187.7,1199.6 1188.5,1199.5 1189.3,1199.0 1190.0,1199.3 1190.8,1199.4 1191.6,1199.2 1192.4,1199.3 1193.2,1199.5 1194.0,1199.3 1194.8,1199.2 1195.6,1198.6 1196.4,1199.2 1197.2,1199.0 1198.0,1199.3 1198.8,1198.5 1199.6,1198.6 1200.4,1198.4 1201.2,1198.9 1202.0,1198.6 1202.8,1198.4 1203.6,1198.2 1204.4,1197.9 1205.2,1197.9 1206.0,1197.6 1206.7,1197.8 1207.5,1198.2 1208.3,1197.9 1209.1,1197.8 1209.9,1198.0 1210.7,1197.8 1211.5,1197.7 1212.3,1197.9 1213.1,1198.0 1213.9,1197.4 1214.7,1197.4 1215.5,1197.3 1216.3,1197.0 1217.1,1197.4 1217.9,1197.4 1218.7,1197.2 1219.5,1196.9 1220.3,1196.9 1221.1,1197.0 1221.9,1196.9 1222.7,1196.9 1223.4,1196.7 1224.2,1197.2 1225.0,1196.5 1225.8,1196.8 1226.6,1196.7 1227.4,1196.5 1228.2,1196.7 1229.0,1196.8 1229.8,1196.5 1230.6,1196.4 1231.4,1196.2 1232.2,1196.1 1233.0,1195.9 1233.8,1195.7 1234.6,1195.9 1235.4,1195.8 1236.2,1195.6 1237.0,1195.8 1237.8,1195.9 1238.6,1195.7 1239.4,1195.5 1240.1,1195.6 1240.9,1195.6 1241.7,1194.8 1242.5,1194.7 1243.3,1194.7 1244.1,1194.3 1244.9,1194.0 1245.7,1194.3 1246.5,1193.8 1247.3,1194.3 1248.1,1194.7 1248.9,1194.6 1249.7,1194.1 1250.5,1193.9 1251.3,1193.3 1252.1,1193.0 1252.9,1193.3 1253.7,1193.6 1254.5,1193.8 1255.3,1193.4 1256.1,1193.6 1256.8,1193.4 1257.6,1193.5 1258.4,1193.4 1259.2,1193.0 1260.0,1193.3 1260.8,1193.2 1261.6,1193.8 1262.4,1194.4 1263.2,1194.3 1264.0,1195.3 1264.8,1195.0 1265.6,1195.3 1266.4,1195.6 1267.2,1196.0 1268.0,1196.2 1268.8,1196.6 1269.6,1197.1 1270.4,1197.2 1271.2,1197.2 1272.0,1197.6 1272.8,1197.9 1273.5,1198.7 1274.3,1198.8 1275.1,1199.2 1275.9,1199.5 1276.7,1199.9 1277.5,1200.5 1278.3,1200.7 1279.1,1201.4 1279.9,1201.4 1280.7,1201.3 1281.5,1201.6 1282.3,1202.5 1283.1,1202.9 1283.9,1202.9 1284.7,1203.0 1285.5,1203.1 1286.3,1203.0 1287.1,1203.3 1287.9,1203.1 1288.7,1202.9 1289.5,1202.8 1290.2,1203.2 1291.0,1203.1 1291.8,1203.0 1292.6,1202.9 1293.4,1203.4 1294.2,1203.5 1295.0,1203.5 1295.8,1203.2 1296.6,1203.4 1297.4,1203.7 1298.2,1203.6 1299.0,1203.2 1299.8,1202.7 1300.6,1202.6 1301.4,1202.7 1302.2,1203.3 1303.0,1203.1 1303.8,1203.1 1304.6,1203.0 1305.4,1203.1 1306.2,1203.0 1306.9,1203.4 1307.7,1203.3 1308.5,1203.4 1309.3,1203.0 1310.1,1203.6 1310.9,1203.8 1311.7,1203.4 1312.5,1203.4 1313.3,1202.9 1314.1,1203.0 1314.9,1203.1 1315.7,1203.3 1316.5,1203.2 1317.3,1203.0 1318.1,1203.2 1318.9,1203.2 1319.7,1203.1 1320.5,1203.8 1321.3,1203.9 1322.1,1203.2 1322.9,1202.6 1323.7,1202.3 1324.4,1202.1 1325.2,1201.9 1326.0,1202.0 1326.8,1202.0 1327.6,1201.8 1328.4,1202.1 1329.2,1201.9 1330.0,1201.8 1330.8,1202.0 1331.6,1201.6 1332.4,1201.6 1333.2,1201.7 1334.0,1201.9 1334.8,1201.6 1335.6,1201.8 1336.4,1201.4 1337.2,1201.2 1338.0,1201.5 1338.8,1201.4 1339.6,1201.0 1340.4,1201.2 1341.1,1201.5 1341.9,1201.4 1342.7,1201.6 1343.5,1201.6 1344.3,1201.9 1345.1,1202.0 1345.9,1201.8 1346.7,1201.7 1347.5,1201.8 1348.3,1202.0 1349.1,1202.1 1349.9,1201.8 1350.7,1201.8 1351.5,1201.7 1352.3,1201.8 1353.1,1201.9 1353.9,1202.0 1354.7,1201.7 1355.5,1201.8 1356.3,1202.0 1357.1,1201.6 1357.8,1201.9 1358.6,1201.6 1359.4,1201.4 1360.2,1201.2 1361.0,1201.8 1361.8,1201.6 1362.6,1201.2 1363.4,1200.9 1364.2,1200.7 1365.0,1199.8 1365.8,1199.8 1366.6,1199.8 1367.4,1199.3 1368.2,1199.0 1369.0,1198.4 1369.8,1198.0 1370.6,1197.6 1371.4,1197.4 1372.2,1196.2 1373.0,1195.9 1373.8,1195.7 1374.5,1195.4 1375.3,1195.1 1376.1,1194.3 1376.9,1194.1 1377.7,1194.1 1378.5,1193.5 1379.3,1193.3 1380.1,1192.6 1380.9,1193.1 1381.7,1193.4 1382.5,1192.9 1383.3,1192.7 1384.1,1192.2 1384.9,1192.2 1385.7,1191.8 1386.5,1192.0 1387.3,1191.7 1388.1,1191.9 1388.9,1192.2 1389.7,1192.0 1390.5,1191.7 1391.2,1191.0 1392.0,1190.9 1392.8,1190.6 1393.6,1190.4 1394.4,1190.8 1395.2,1190.3 1396.0,1190.3 1396.8,1189.9 1397.6,1189.7 1398.4,1189.8 1399.2,1189.4 1400.0,1189.6 1400.8,1189.7 1401.6,1189.1 1402.4,1189.1 1403.2,1188.9 1404.0,1188.6 1404.8,1188.3 1405.6,1188.4 1406.4,1188.4 1407.2,1187.9 1407.9,1188.0 1408.7,1187.7 1409.5,1187.5 1410.3,1187.5 1411.1,1187.3 1411.9,1187.1 1412.7,1187.1 1413.5,1186.5 1414.3,1186.3 1415.1,1186.5 1415.9,1186.5 1416.7,1186.6 1417.5,1186.3 1418.3,1186.3 1419.1,1186.0 1419.9,1185.9 1420.7,1185.8 1421.5,1185.6 1422.3,1185.2 1423.1,1184.8 1423.9,1184.5 1424.6,1184.3 1425.4,1184.0 1426.2,1183.8 1427.0,1183.1 1427.8,1183.1 1428.6,1183.1 1429.4,1182.9 1430.2,1182.7 1431.0,1182.5 1431.8,1182.4 1432.6,1182.5 1433.4,1181.8 1434.2,1182.1 1435.0,1181.9 1435.8,1181.3 1436.6,1180.8 1437.4,1180.7 1438.2,1180.7 1439.0,1180.5 1439.8,1180.3 1440.6,1180.1 1441.3,1180.1 1442.1,1179.8 1442.9,1179.6 1443.7,1179.2 1444.5,1179.0 1445.3,1178.9 1446.1,1178.3 1446.9,1178.6 1447.7,1178.7 1448.5,1178.2 1449.3,1178.4 1450.1,1178.7 1450.9,1179.3 1451.7,1180.1 1452.5,1180.4 1453.3,1181.4 1454.1,1181.1 1454.9,1181.4 1455.7,1182.3 1456.5,1182.9 1457.3,1183.1 1458.0,1183.9 1458.8,1184.3 1459.6,1185.1 1460.4,1186.1 1461.2,1186.6 1462.0,1187.5 1462.8,1188.5 1463.6,1189.7 1464.4,1189.9 1465.2,1191.0 1466.0,1192.2 1466.8,1193.0 1467.6,1193.8 1468.4,1194.6 1469.2,1195.2 1470.0,1196.2 1470.8,1197.0 1471.6,1197.9 1472.4,1198.8 1473.2,1199.3 1474.0,1200.5 1474.7,1201.5 1475.5,1201.4 1476.3,1201.7 1477.1,1201.9 1477.9,1201.5 1478.7,1201.5 1479.5,1201.5 1480.3,1201.4 1481.1,1201.6 1481.9,1201.3 1482.7,1201.5 1483.5,1201.6 1484.3,1201.6 1485.1,1201.2 1485.9,1201.4 1486.7,1201.3 1487.5,1201.5 1488.3,1201.6 1489.1,1201.8 1489.9,1201.6 1490.7,1201.5 1491.4,1201.6 1492.2,1201.2 1493.0,1201.4 1493.8,1201.3 1494.6,1201.1 1495.4,1201.5 1496.2,1201.3 1497.0,1201.3 1497.8,1201.3 1498.6,1201.0 1499.4,1201.5 1500.2,1201.9 1501.0,1201.5 1501.8,1202.0 1502.6,1202.0 1503.4,1201.9 1504.2,1201.7 1505.0,1201.7 1505.8,1201.8 1506.6,1201.9 1507.4,1201.7 1508.2,1202.1 1508.9,1201.9 1509.7,1202.6 1510.5,1202.2 1511.3,1201.9 1512.1,1202.1 1512.9,1202.1 1513.7,1201.8 1514.5,1201.5 1515.3,1202.0 1516.1,1201.8 1516.9,1201.7 1517.7,1202.1 1518.5,1201.9 1519.3,1201.7 1520.1,1201.5 1520.9,1201.5 1521.7,1201.3 1522.5,1201.0 1523.3,1201.7 1524.1,1201.7 1524.9,1202.1 1525.6,1202.1 1526.4,1202.2 1527.2,1201.9 1528.0,1201.3 1528.8,1201.9 1529.6,1201.7 1530.4,1201.9 1531.2,1201.6 1532.0,1201.6 1532.8,1201.9 1533.6,1202.1 1534.4,1202.4 1535.2,1202.4 1536.0,1202.0 1536.8,1201.7 1537.6,1201.6 1538.4,1201.9 1539.2,1201.8 1540.0,1202.2 1540.8,1202.3 1541.6,1201.9 1542.3,1201.7 1543.1,1201.8 1543.9,1201.8 1544.7,1202.0 1545.5,1201.6 1546.3,1201.4 1547.1,1201.9 1547.9,1201.6 1548.7,1202.3 1549.5,1201.9 1550.3,1201.5 1551.1,1201.6 1551.9,1201.5 1552.7,1201.7 1553.5,1201.4 1554.3,1200.6 1555.1,1200.2 1555.9,1199.8 1556.7,1199.7 1557.5,1199.5 1558.3,1198.9 1559.0,1198.7 1559.8,1198.4 1560.6,1197.8 1561.4,1196.8 1562.2,1196.9 1563.0,1196.3 1563.8,1196.1 1564.6,1195.4 1565.4,1194.8 1566.2,1194.8 1567.0,1193.9 1567.8,1194.1 1568.6,1194.0 1569.4,1193.7 1570.2,1193.1 1571.0,1193.0 1571.8,1192.7 1572.6,1192.4 1573.4,1192.8 1574.2,1192.9 1575.0,1192.4 1575.7,1192.3 1576.5,1191.9 1577.3,1191.6 1578.1,1191.4 1578.9,1191.3 1579.7,1191.2 1580.5,1191.2 1581.3,1190.7 1582.1,1190.6 1582.9,1190.4 1583.7,1190.1 1584.5,1190.1 1585.3,1190.1 1586.1,1190.2 1586.9,1190.4 1587.7,1190.2 1588.5,1189.9 1589.3,1190.0 1590.1,1189.4 1590.9,1189.1 1591.7,1188.9 1592.4,1189.0 1593.2,1188.5 1594.0,1188.0 1594.8,1188.5 1595.6,1188.0 1596.4,1188.0 1597.2,1187.8 1598.0,1188.2 1598.8,1187.8 1599.6,1187.7 1600.4,1187.6 1601.2,1187.6 1602.0,1187.4 1602.8,1187.3 1603.6,1187.1 1604.4,1186.7 1605.2,1186.8 1606.0,1186.1 1606.8,1186.3 1607.6,1186.2 1608.4,1186.0 1609.1,1186.0 1609.9,1185.9 1610.7,1186.4 1611.5,1185.5 1612.3,1185.5 1613.1,1185.4 1613.9,1185.4 1614.7,1184.9 1615.5,1184.8 1616.3,1184.4 1617.1,1183.8 1617.9,1183.3 1618.7,1183.1 1619.5,1183.0 1620.3,1182.8 1621.1,1182.8 1621.9,1182.5 1622.7,1182.4 1623.5,1182.5 1624.3,1181.7 1625.1,1181.8 1625.8,1181.8 1626.6,1181.5 1627.4,1180.9 1628.2,1180.7 1629.0,1180.8 1629.8,1180.6 1630.6,1179.9 1631.4,1180.2 1632.2,1180.1 1633.0,1180.2 1633.8,1179.6 1634.6,1179.4 1635.4,1179.0 1636.2,1178.6 1637.0,1178.6 1637.8,1178.2 1638.6,1178.3 1639.4,1178.4 1640.2,1178.3 1641.0,1178.6 1641.8,1179.5 1642.5,1180.4 1643.3,1180.1 1644.1,1180.7 1644.9,1181.2 1645.7,1181.4 1646.5,1181.6 1647.3,1182.4 1648.1,1182.9 1648.9,1184.0 1649.7,1185.0 1650.5,1186.1 1651.3,1186.5 1652.1,1187.3 1652.9,1188.0 1653.7,1188.5 1654.5,1189.9 1655.3,1190.0 1656.1,1191.1 1656.9,1192.6 1657.7,1193.0 1658.5,1193.4 1659.2,1194.5 1660.0,1195.7 1660.8,1196.2 1661.6,1197.0 1662.4,1198.5 1663.2,1199.2 1664.0,1199.7 1664.8,1200.6 1665.6,1201.0 1666.4,1201.4 1667.2,1201.4 1668.0,1201.1 1668.8,1200.9 1669.6,1201.2 1670.4,1201.3 1671.2,1201.5 1672.0,1201.5 1672.8,1201.1 1673.6,1201.3 1674.4,1201.7 1675.2,1201.7 1676.0,1201.6 1676.7,1201.4 1677.5,1201.7 1678.3,1201.3 1679.1,1201.3 1679.9,1201.5 1680.7,1201.4 1681.5,1201.1 1682.3,1201.5 1683.1,1201.6 1683.9,1201.4 1684.7,1201.5 1685.5,1201.8 1686.3,1201.8 1687.1,1201.4 1687.9,1201.4 1688.7,1201.6 1689.5,1201.8 1690.3,1201.9 1691.1,1202.0 1691.9,1201.5 1692.7,1201.6 1693.4,1201.4 1694.2,1201.6 1695.0,1201.5 1695.8,1201.5 1696.6,1201.4 1697.4,1201.2 1698.2,1201.4 1699.0,1201.9 1699.8,1201.7 1700.6,1201.3 1701.4,1201.4 1702.2,1201.6 1703.0,1201.7 1703.8,1202.1 1704.6,1202.2 1705.4,1201.9 1706.2,1201.5 1707.0,1201.2 1707.8,1201.6 1708.6,1201.8 1709.4,1202.0 1710.1,1202.1 1710.9,1202.1 1711.7,1202.3 1712.5,1201.8 1713.3,1202.2 1714.1,1201.7 1714.9,1201.5 1715.7,1201.8 1716.5,1201.7 1717.3,1201.9 1718.1,1201.5 1718.9,1201.4 1719.7,1201.4 1720.5,1201.9 1721.3,1201.6 1722.1,1201.8 1722.9,1201.6 1723.7,1201.3 1724.5,1201.6 1725.3,1202.0 1726.1,1201.9 1726.8,1201.5 1727.6,1201.9 1728.4,1201.9 1729.2,1201.9 1730.0,1201.5 1730.8,1201.9 1731.6,1202.0 1732.4,1202.1 1733.2,1201.9 1734.0,1202.1 1734.8,1202.1 1735.6,1202.3 1736.4,1201.9 1737.2,1201.9 1738.0,1201.8 1738.8,1202.2 1739.6,1201.8 1740.4,1201.8 1741.2,1201.4 1742.0,1201.1 1742.8,1201.5 1743.5,1201.4 1744.3,1201.3 1745.1,1201.0 1745.9,1200.5 1746.7,1200.2 1747.5,1199.9 1748.3,1199.0 1749.1,1199.2 1749.9,1198.7 1750.7,1198.4 1751.5,1198.0 1752.3,1197.5 1753.1,1196.9 1753.9,1196.7 1754.7,1195.8 1755.5,1195.5 1756.3,1195.2 1757.1,1195.0 1757.9,1194.4 1758.7,1194.3 1759.5,1194.0 1760.2,1193.4 1761.0,1193.0 1761.8,1193.3 1762.6,1193.4 1763.4,1192.5 1764.2,1192.4 1765.0,1192.4 1765.8,1192.5 1766.6,1192.3 1767.4,1192.3 1768.2,1192.1 1769.0,1192.2 1769.8,1191.9 1770.6,1191.7 1771.4,1191.6 1772.2,1191.5 1773.0,1191.4 1773.8,1190.9 1774.6,1190.8 1775.4,1190.9 1776.2,1190.5 1776.9,1190.4 1777.7,1190.3 1778.5,1189.8 1779.3,1189.5 1780.1,1189.4 1780.9,1189.1 1781.7,1188.8 1782.5,1189.0 1783.3,1188.9 1784.1,1189.1 1784.9,1188.9 1785.7,1189.0 1786.5,1188.6 1787.3,1188.6 1788.1,1188.3 1788.9,1188.3 1789.7,1188.3 1790.5,1187.9 1791.3,1188.1 1792.1,1187.4 1792.9,1187.3 1793.6,1187.4 1794.4,1187.3 1795.2,1187.2 1796.0,1187.0 1796.8,1186.5 1797.6,1186.3 1798.4,1186.5 1799.2,1186.6 1800.0,1186.2 1800.8,1185.7 1801.6,1186.0 1802.4,1185.5 1803.2,1185.2 1804.0,1184.9 1804.8,1184.3 1805.6,1184.2 1806.4,1183.9 1807.2,1183.9 1808.0,1183.4 1808.8,1183.6 1809.6,1183.4 1810.3,1183.2 1811.1,1182.9 1811.9,1182.8 1812.7,1183.0 1813.5,1182.5 1814.3,1182.1 1815.1,1181.5 1815.9,1181.7 1816.7,1181.4 1817.5,1180.8 1818.3,1180.8 1819.1,1181.0 1819.9,1181.0 1820.7,1180.8 1821.5,1180.3 1822.3,1180.4 1823.1,1179.8 1823.9,1179.9 1824.7,1179.4 1825.5,1179.0 1826.3,1179.1 1827.0,1178.4 1827.8,1178.5 1828.6,1179.0 1829.4,1178.6 1830.2,1178.4 1831.0,1178.7 1831.8,1178.7 1832.6,1178.8 1833.4,1179.3 1834.2,1179.8 1835.0,1180.1 1835.8,1180.7 1836.6,1181.1 1837.4,1181.8 1838.2,1182.7 1839.0,1183.1 1839.8,1183.9 1840.6,1184.6 1841.4,1185.4 1842.2,1186.1 1843.0,1187.5 1843.8,1188.1 1844.5,1189.1 1845.3,1190.0 1846.1,1190.4 1846.9,1191.6 1847.7,1192.0 1848.5,1193.1 1849.3,1193.7 1850.1,1194.5 1850.9,1195.6 1851.7,1196.2 1852.5,1197.9 1853.3,1198.4 1854.1,1199.1 1854.9,1199.6 1855.7,1200.3 1856.5,1200.6 1857.3,1201.0 1858.1,1201.0 1858.9,1201.0 1859.7,1201.5 1860.5,1201.0 1861.2,1201.2 1862.0,1200.8 1862.8,1201.2 1863.6,1201.3 1864.4,1201.0 1865.2,1201.3 1866.0,1201.1 1866.8,1201.3 1867.6,1201.3 1868.4,1201.4 1869.2,1201.4 1870.0,1200.9 1870.8,1201.4 1871.6,1201.4 1872.4,1201.5 1873.2,1201.5 1874.0,1201.5 1874.8,1201.5 1875.6,1201.4 1876.4,1200.9 1877.2,1201.6 1877.9,1201.6 1878.7,1201.5 1879.5,1201.2 1880.3,1201.7 1881.1,1201.1 1881.9,1201.2 1882.7,1200.9 1883.5,1201.1 1884.3,1201.3 1885.1,1201.6 1885.9,1201.6 1886.7,1201.6 1887.5,1202.0 1888.3,1201.8 1889.1,1201.8 1889.9,1201.7 1890.7,1202.0 1891.5,1202.1 1892.3,1202.0 1893.1,1201.8 1893.9,1202.0 1894.6,1202.3 1895.4,1202.4 1896.2,1201.9 L1896.2,1205.9 Z" fill="#5230ff" fill-opacity="0.93" stroke="#4a28f0" stroke-width="1.2" stroke-linejoin="round"/>
<path d="M1896.2,1205.9 L1896.2,1097.5 1897.0,1101.9 1897.8,1102.8 1898.6,1103.7 1899.4,1104.7 1900.2,1105.8 1901.0,1106.8 1901.8,1107.9 1902.6,1109.1 1903.4,1110.2 1904.2,1111.3 1905.0,1112.5 1905.8,1113.6 1906.6,1114.7 1907.4,1115.8 1908.2,1116.9 1909.0,1118.0 1909.8,1119.0 1910.6,1120.0 1911.3,1121.0 1912.1,1121.9 1912.9,1122.8 1913.7,1123.7 1914.5,1124.6 1915.3,1125.4 1916.1,1126.3 1916.9,1127.1 1917.7,1127.9 1918.5,1128.7 1919.3,1129.5 1920.1,1130.3 1920.9,1131.1 1921.7,1131.9 1922.5,1132.6 1923.3,1133.4 1924.1,1134.1 1924.9,1134.8 1925.7,1135.4 1926.5,1136.0 1927.3,1136.5 1928.0,1136.9 1928.8,1137.1 1929.6,1137.3 1930.4,1137.3 1931.2,1137.1 1932.0,1136.7 1932.8,1136.1 1933.6,1135.3 1934.4,1134.2 1935.2,1132.9 1936.0,1131.2 1936.8,1129.3 1937.6,1127.1 1938.4,1124.6 1939.2,1121.7 1940.0,1118.6 1940.8,1115.2 1941.6,1111.4 1942.4,1107.5 1943.2,1103.2 1944.0,1098.8 1944.7,1094.2 1945.5,1089.3 1946.3,1084.4 1947.1,1079.3 1947.9,1074.2 1948.7,1069.0 1949.5,1063.9 1950.3,1058.9 1951.1,1054.0 1951.9,1049.3 1952.7,1044.9 1953.5,1040.9 1954.3,1037.1 1955.1,1033.7 1955.9,1030.7 1956.7,1028.1 1957.5,1025.7 1958.3,1023.6 1959.1,1021.8 1959.9,1020.2 1960.7,1018.8 1961.4,1017.6 1962.2,1016.6 1963.0,1015.6 1963.8,1014.8 1964.6,1014.1 1965.4,1013.5 1966.2,1013.0 1967.0,1012.5 1967.8,1012.1 1968.6,1011.7 1969.4,1011.3 1970.2,1010.9 1971.0,1010.6 1971.8,1010.3 1972.6,1009.9 1973.4,1009.6 1974.2,1009.3 1975.0,1009.0 1975.8,1008.7 1976.6,1008.3 1977.4,1008.0 1978.1,1007.7 1978.9,1007.3 1979.7,1007.0 1980.5,1006.7 1981.3,1006.3 1982.1,1005.9 1982.9,1005.6 1983.7,1005.2 1984.5,1004.8 1985.3,1004.4 1986.1,1004.0 1986.9,1003.5 1987.7,1003.1 1988.5,1002.7 1989.3,1002.3 1990.1,1001.8 1990.9,1001.4 1991.7,1001.0 1992.5,1000.6 1993.3,1000.2 1994.1,999.8 1994.8,999.5 1995.6,999.3 1996.4,999.1 1997.2,998.9 1998.0,998.8 1998.8,998.8 1999.6,998.8 2000.4,998.9 2001.2,999.0 2002.0,999.1 2002.8,999.3 2003.6,999.4 2004.4,999.5 2005.2,999.6 2006.0,999.7 2006.8,999.7 2007.6,999.6 2008.4,999.5 2009.2,999.3 2010.0,999.0 2010.8,998.7 2011.6,998.4 2012.3,998.0 2013.1,997.6 2013.9,997.2 2014.7,996.7 2015.5,996.3 2016.3,995.9 2017.1,995.6 2017.9,995.3 2018.7,995.0 2019.5,994.8 2020.3,994.8 2021.1,994.8 2021.9,994.9 2022.7,995.2 2023.5,995.6 2024.3,996.2 2025.1,996.9 2025.9,997.7 2026.7,998.6 2027.5,999.6 2028.3,1000.7 2029.0,1001.9 2029.8,1003.2 2030.6,1004.5 2031.4,1005.9 2032.2,1007.5 2033.0,1009.1 2033.8,1010.8 2034.6,1012.6 2035.4,1014.6 2036.2,1016.6 2037.0,1018.8 2037.8,1021.1 2038.6,1023.4 2039.4,1025.8 2040.2,1028.3 2041.0,1030.8 2041.8,1033.3 2042.6,1035.8 2043.4,1038.4 2044.2,1041.0 2045.0,1043.6 2045.7,1046.2 2046.5,1048.9 2047.3,1051.5 2048.1,1054.1 2048.9,1056.7 2049.7,1059.2 2050.5,1061.7 2051.3,1064.2 2052.1,1066.5 2052.9,1068.8 2053.7,1070.9 2054.5,1072.9 2055.3,1074.7 2056.1,1076.4 2056.9,1077.8 2057.7,1079.2 2058.5,1080.3 2059.3,1081.3 2060.1,1082.2 2060.9,1083.0 2061.7,1083.8 2062.4,1084.4 2063.2,1085.0 2064.0,1085.5 2064.8,1086.0 2065.6,1086.5 2066.4,1086.9 2067.2,1087.3 2068.0,1087.7 2068.8,1088.0 2069.6,1088.3 2070.4,1088.6 2071.2,1088.8 2072.0,1089.0 2072.8,1089.2 2073.6,1089.4 2074.4,1089.5 2075.2,1089.6 2076.0,1089.7 2076.8,1089.8 2077.6,1089.9 2078.4,1090.0 2079.1,1090.1 2079.9,1090.2 2080.7,1090.3 2081.5,1090.4 2082.3,1090.5 2083.1,1090.5 2083.9,1090.6 2084.7,1090.7 2085.5,1090.7 2086.3,1090.8 2087.1,1090.8 L2087.1,1205.9 Z" fill="#7dfdb6" fill-opacity="0.95"/>
<path d="M1896.2,1205.9 L1896.2,1177.4 1897.0,1179.2 1897.8,1179.2 1898.6,1179.2 1899.4,1179.1 1900.2,1179.0 1901.0,1178.8 1901.8,1178.6 1902.6,1178.3 1903.4,1178.1 1904.2,1177.8 1905.0,1177.5 1905.8,1177.2 1906.6,1176.9 1907.4,1176.6 1908.2,1176.4 1909.0,1176.1 1909.8,1175.7 1910.6,1175.4 1911.3,1175.1 1912.1,1174.8 1912.9,1174.5 1913.7,1174.1 1914.5,1173.8 1915.3,1173.4 1916.1,1172.9 1916.9,1172.5 1917.7,1171.9 1918.5,1171.4 1919.3,1170.7 1920.1,1170.1 1920.9,1169.3 1921.7,1168.5 1922.5,1167.7 1923.3,1166.8 1924.1,1165.9 1924.9,1165.0 1925.7,1164.0 1926.5,1163.1 1927.3,1162.1 1928.0,1161.0 1928.8,1159.9 1929.6,1158.8 1930.4,1157.6 1931.2,1156.2 1932.0,1154.8 1932.8,1153.1 1933.6,1151.2 1934.4,1149.1 1935.2,1146.7 1936.0,1143.9 1936.8,1140.8 1937.6,1137.5 1938.4,1133.8 1939.2,1129.8 1940.0,1125.6 1940.8,1121.2 1941.6,1116.6 1942.4,1112.0 1943.2,1107.2 1944.0,1102.5 1944.7,1097.7 1945.5,1093.0 1946.3,1088.3 1947.1,1083.7 1947.9,1079.2 1948.7,1074.9 1949.5,1070.6 1950.3,1066.5 1951.1,1062.6 1951.9,1058.9 1952.7,1055.4 1953.5,1052.2 1954.3,1049.2 1955.1,1046.6 1955.9,1044.2 1956.7,1042.2 1957.5,1040.4 1958.3,1038.9 1959.1,1037.7 1959.9,1036.6 1960.7,1035.8 1961.4,1035.0 1962.2,1034.4 1963.0,1033.8 1963.8,1033.3 1964.6,1032.8 1965.4,1032.4 1966.2,1031.9 1967.0,1031.5 1967.8,1031.1 1968.6,1030.7 1969.4,1030.2 1970.2,1029.8 1971.0,1029.4 1971.8,1029.0 1972.6,1028.5 1973.4,1028.1 1974.2,1027.7 1975.0,1027.3 1975.8,1026.8 1976.6,1026.4 1977.4,1026.0 1978.1,1025.6 1978.9,1025.1 1979.7,1024.7 1980.5,1024.3 1981.3,1023.9 1982.1,1023.4 1982.9,1023.0 1983.7,1022.6 1984.5,1022.2 1985.3,1021.7 1986.1,1021.3 1986.9,1020.9 1987.7,1020.4 1988.5,1020.0 1989.3,1019.6 1990.1,1019.1 1990.9,1018.7 1991.7,1018.3 1992.5,1017.8 1993.3,1017.4 1994.1,1017.0 1994.8,1016.5 1995.6,1016.1 1996.4,1015.7 1997.2,1015.2 1998.0,1014.8 1998.8,1014.4 1999.6,1014.0 2000.4,1013.5 2001.2,1013.1 2002.0,1012.8 2002.8,1012.4 2003.6,1012.0 2004.4,1011.7 2005.2,1011.5 2006.0,1011.2 2006.8,1011.0 2007.6,1010.9 2008.4,1010.7 2009.2,1010.7 2010.0,1010.6 2010.8,1010.6 2011.6,1010.6 2012.3,1010.7 2013.1,1010.7 2013.9,1010.8 2014.7,1010.9 2015.5,1011.0 2016.3,1011.1 2017.1,1011.2 2017.9,1011.3 2018.7,1011.5 2019.5,1011.7 2020.3,1011.9 2021.1,1012.1 2021.9,1012.5 2022.7,1012.8 2023.5,1013.2 2024.3,1013.7 2025.1,1014.3 2025.9,1014.9 2026.7,1015.6 2027.5,1016.4 2028.3,1017.2 2029.0,1018.1 2029.8,1019.0 2030.6,1020.1 2031.4,1021.2 2032.2,1022.4 2033.0,1023.8 2033.8,1025.3 2034.6,1027.0 2035.4,1029.0 2036.2,1031.2 2037.0,1033.6 2037.8,1036.3 2038.6,1039.2 2039.4,1042.4 2040.2,1045.8 2041.0,1049.4 2041.8,1053.1 2042.6,1056.9 2043.4,1060.8 2044.2,1064.8 2045.0,1068.8 2045.7,1072.9 2046.5,1076.9 2047.3,1081.0 2048.1,1085.0 2048.9,1089.1 2049.7,1093.1 2050.5,1097.1 2051.3,1101.1 2052.1,1105.1 2052.9,1109.0 2053.7,1112.9 2054.5,1116.7 2055.3,1120.5 2056.1,1124.1 2056.9,1127.7 2057.7,1131.0 2058.5,1134.2 2059.3,1137.2 2060.1,1140.0 2060.9,1142.6 2061.7,1144.9 2062.4,1147.0 2063.2,1149.0 2064.0,1150.7 2064.8,1152.4 2065.6,1153.9 2066.4,1155.3 2067.2,1156.6 2068.0,1157.9 2068.8,1159.1 2069.6,1160.3 2070.4,1161.5 2071.2,1162.7 2072.0,1163.8 2072.8,1164.9 2073.6,1166.0 2074.4,1167.1 2075.2,1168.1 2076.0,1169.1 2076.8,1170.1 2077.6,1170.9 2078.4,1171.8 2079.1,1172.5 2079.9,1173.3 2080.7,1173.9 2081.5,1174.6 2082.3,1175.1 2083.1,1175.6 2083.9,1176.1 2084.7,1176.6 2085.5,1176.9 2086.3,1177.3 2087.1,1177.6 L2087.1,1205.9 Z" fill="#84dcc9" fill-opacity="0.95"/>
<path d="M1896.2,1205.9 L1896.2,1187.3 1897.0,1183.8 1897.8,1183.8 1898.6,1183.8 1899.4,1183.7 1900.2,1183.6 1901.0,1183.4 1901.8,1183.2 1902.6,1183.0 1903.4,1182.7 1904.2,1182.4 1905.0,1182.2 1905.8,1181.9 1906.6,1181.6 1907.4,1181.3 1908.2,1181.0 1909.0,1180.7 1909.8,1180.4 1910.6,1180.1 1911.3,1179.8 1912.1,1179.4 1912.9,1179.1 1913.7,1178.8 1914.5,1178.4 1915.3,1178.0 1916.1,1177.6 1916.9,1177.1 1917.7,1176.6 1918.5,1176.0 1919.3,1175.4 1920.1,1174.7 1920.9,1174.0 1921.7,1173.2 1922.5,1172.3 1923.3,1171.5 1924.1,1170.6 1924.9,1169.6 1925.7,1168.7 1926.5,1167.7 1927.3,1166.7 1928.0,1165.7 1928.8,1164.6 1929.6,1163.4 1930.4,1162.2 1931.2,1160.9 1932.0,1159.4 1932.8,1157.8 1933.6,1155.9 1934.4,1153.9 1935.2,1151.5 1936.0,1148.9 1936.8,1146.0 1937.6,1142.9 1938.4,1139.5 1939.2,1136.0 1940.0,1132.3 1940.8,1128.6 1941.6,1124.8 1942.4,1121.1 1943.2,1117.4 1944.0,1113.7 1944.7,1110.2 1945.5,1106.8 1946.3,1103.5 1947.1,1100.3 1947.9,1097.3 1948.7,1094.3 1949.5,1091.5 1950.3,1088.8 1951.1,1086.3 1951.9,1083.8 1952.7,1081.6 1953.5,1079.5 1954.3,1077.5 1955.1,1075.7 1955.9,1074.2 1956.7,1072.8 1957.5,1071.5 1958.3,1070.4 1959.1,1069.5 1959.9,1068.7 1960.7,1068.0 1961.4,1067.4 1962.2,1066.8 1963.0,1066.3 1963.8,1065.8 1964.6,1065.4 1965.4,1064.9 1966.2,1064.5 1967.0,1064.1 1967.8,1063.7 1968.6,1063.2 1969.4,1062.8 1970.2,1062.4 1971.0,1062.0 1971.8,1061.5 1972.6,1061.1 1973.4,1060.7 1974.2,1060.3 1975.0,1059.8 1975.8,1059.4 1976.6,1059.0 1977.4,1058.6 1978.1,1058.1 1978.9,1057.7 1979.7,1057.3 1980.5,1056.9 1981.3,1056.4 1982.1,1056.0 1982.9,1055.6 1983.7,1055.2 1984.5,1054.7 1985.3,1054.3 1986.1,1053.9 1986.9,1053.5 1987.7,1053.0 1988.5,1052.6 1989.3,1052.2 1990.1,1051.8 1990.9,1051.5 1991.7,1051.1 1992.5,1050.8 1993.3,1050.5 1994.1,1050.2 1994.8,1049.9 1995.6,1049.7 1996.4,1049.4 1997.2,1049.2 1998.0,1049.1 1998.8,1048.9 1999.6,1048.7 2000.4,1048.6 2001.2,1048.4 2002.0,1048.3 2002.8,1048.3 2003.6,1048.2 2004.4,1048.2 2005.2,1048.2 2006.0,1048.2 2006.8,1048.3 2007.6,1048.4 2008.4,1048.6 2009.2,1048.8 2010.0,1049.0 2010.8,1049.2 2011.6,1049.5 2012.3,1049.7 2013.1,1050.0 2013.9,1050.2 2014.7,1050.4 2015.5,1050.6 2016.3,1050.7 2017.1,1050.8 2017.9,1050.9 2018.7,1050.9 2019.5,1051.0 2020.3,1051.0 2021.1,1051.1 2021.9,1051.1 2022.7,1051.2 2023.5,1051.4 2024.3,1051.6 2025.1,1051.8 2025.9,1052.0 2026.7,1052.3 2027.5,1052.6 2028.3,1052.9 2029.0,1053.2 2029.8,1053.6 2030.6,1053.9 2031.4,1054.3 2032.2,1054.8 2033.0,1055.3 2033.8,1056.0 2034.6,1056.8 2035.4,1057.9 2036.2,1059.2 2037.0,1060.7 2037.8,1062.5 2038.6,1064.5 2039.4,1066.8 2040.2,1069.3 2041.0,1072.1 2041.8,1075.0 2042.6,1078.0 2043.4,1081.1 2044.2,1084.4 2045.0,1087.6 2045.7,1090.9 2046.5,1094.2 2047.3,1097.5 2048.1,1100.9 2048.9,1104.2 2049.7,1107.5 2050.5,1110.8 2051.3,1114.0 2052.1,1117.3 2052.9,1120.5 2053.7,1123.7 2054.5,1126.8 2055.3,1129.9 2056.1,1132.9 2056.9,1135.9 2057.7,1138.7 2058.5,1141.3 2059.3,1143.9 2060.1,1146.2 2060.9,1148.4 2061.7,1150.5 2062.4,1152.4 2063.2,1154.1 2064.0,1155.7 2064.8,1157.2 2065.6,1158.6 2066.4,1160.0 2067.2,1161.3 2068.0,1162.5 2068.8,1163.8 2069.6,1165.0 2070.4,1166.1 2071.2,1167.3 2072.0,1168.5 2072.8,1169.6 2073.6,1170.7 2074.4,1171.7 2075.2,1172.8 2076.0,1173.8 2076.8,1174.7 2077.6,1175.6 2078.4,1176.4 2079.1,1177.2 2079.9,1177.9 2080.7,1178.6 2081.5,1179.2 2082.3,1179.8 2083.1,1180.3 2083.9,1180.8 2084.7,1181.2 2085.5,1181.6 2086.3,1181.9 2087.1,1182.2 L2087.1,1205.9 Z" fill="#86badb" fill-opacity="0.95"/>
<path d="M1896.2,1205.9 L1896.2,1200.3 1897.0,1199.9 1897.8,1199.9 1898.6,1199.9 1899.4,1199.9 1900.2,1199.9 1901.0,1199.9 1901.8,1199.9 1902.6,1199.9 1903.4,1199.9 1904.2,1199.9 1905.0,1199.9 1905.8,1199.9 1906.6,1199.9 1907.4,1199.9 1908.2,1199.9 1909.0,1199.9 1909.8,1199.9 1910.6,1199.9 1911.3,1199.9 1912.1,1199.9 1912.9,1199.9 1913.7,1199.9 1914.5,1199.9 1915.3,1199.9 1916.1,1199.9 1916.9,1199.9 1917.7,1199.9 1918.5,1199.9 1919.3,1199.9 1920.1,1199.9 1920.9,1199.9 1921.7,1199.9 1922.5,1199.9 1923.3,1199.9 1924.1,1199.9 1924.9,1199.9 1925.7,1199.9 1926.5,1199.9 1927.3,1199.9 1928.0,1199.8 1928.8,1199.8 1929.6,1199.7 1930.4,1199.6 1931.2,1199.4 1932.0,1199.2 1932.8,1199.0 1933.6,1198.6 1934.4,1198.3 1935.2,1197.8 1936.0,1197.3 1936.8,1196.7 1937.6,1196.1 1938.4,1195.4 1939.2,1194.7 1940.0,1194.0 1940.8,1193.2 1941.6,1192.4 1942.4,1191.7 1943.2,1191.0 1944.0,1190.2 1944.7,1189.6 1945.5,1188.9 1946.3,1188.3 1947.1,1187.8 1947.9,1187.3 1948.7,1186.8 1949.5,1186.4 1950.3,1186.1 1951.1,1185.8 1951.9,1185.5 1952.7,1185.3 1953.5,1185.0 1954.3,1184.8 1955.1,1184.7 1955.9,1184.5 1956.7,1184.3 1957.5,1184.2 1958.3,1184.0 1959.1,1183.9 1959.9,1183.7 1960.7,1183.6 1961.4,1183.4 1962.2,1183.3 1963.0,1183.1 1963.8,1183.0 1964.6,1182.8 1965.4,1182.7 1966.2,1182.5 1967.0,1182.4 1967.8,1182.2 1968.6,1182.1 1969.4,1181.9 1970.2,1181.8 1971.0,1181.7 1971.8,1181.5 1972.6,1181.4 1973.4,1181.2 1974.2,1181.1 1975.0,1180.9 1975.8,1180.8 1976.6,1180.6 1977.4,1180.5 1978.1,1180.3 1978.9,1180.2 1979.7,1180.0 1980.5,1179.9 1981.3,1179.7 1982.1,1179.6 1982.9,1179.4 1983.7,1179.3 1984.5,1179.1 1985.3,1179.0 1986.1,1178.8 1986.9,1178.7 1987.7,1178.5 1988.5,1178.4 1989.3,1178.2 1990.1,1178.0 1990.9,1177.9 1991.7,1177.7 1992.5,1177.5 1993.3,1177.3 1994.1,1177.1 1994.8,1176.9 1995.6,1176.7 1996.4,1176.5 1997.2,1176.3 1998.0,1176.1 1998.8,1175.9 1999.6,1175.7 2000.4,1175.4 2001.2,1175.2 2002.0,1175.0 2002.8,1174.8 2003.6,1174.6 2004.4,1174.4 2005.2,1174.2 2006.0,1173.9 2006.8,1173.7 2007.6,1173.5 2008.4,1173.3 2009.2,1173.1 2010.0,1172.9 2010.8,1172.6 2011.6,1172.4 2012.3,1172.2 2013.1,1172.0 2013.9,1171.8 2014.7,1171.6 2015.5,1171.4 2016.3,1171.3 2017.1,1171.2 2017.9,1171.1 2018.7,1171.0 2019.5,1171.0 2020.3,1171.0 2021.1,1171.1 2021.9,1171.3 2022.7,1171.5 2023.5,1171.7 2024.3,1172.0 2025.1,1172.4 2025.9,1172.9 2026.7,1173.4 2027.5,1174.0 2028.3,1174.6 2029.0,1175.3 2029.8,1176.0 2030.6,1176.8 2031.4,1177.7 2032.2,1178.6 2033.0,1179.5 2033.8,1180.5 2034.6,1181.5 2035.4,1182.6 2036.2,1183.7 2037.0,1184.8 2037.8,1185.8 2038.6,1186.9 2039.4,1188.0 2040.2,1189.1 2041.0,1190.2 2041.8,1191.2 2042.6,1192.2 2043.4,1193.2 2044.2,1194.1 2045.0,1194.9 2045.7,1195.7 2046.5,1196.4 2047.3,1197.0 2048.1,1197.6 2048.9,1198.0 2049.7,1198.4 2050.5,1198.7 2051.3,1198.9 2052.1,1199.1 2052.9,1199.2 2053.7,1199.3 2054.5,1199.4 2055.3,1199.4 2056.1,1199.5 2056.9,1199.5 2057.7,1199.5 2058.5,1199.5 2059.3,1199.5 2060.1,1199.5 2060.9,1199.5 2061.7,1199.6 2062.4,1199.6 2063.2,1199.6 2064.0,1199.6 2064.8,1199.6 2065.6,1199.6 2066.4,1199.6 2067.2,1199.6 2068.0,1199.6 2068.8,1199.7 2069.6,1199.7 2070.4,1199.7 2071.2,1199.7 2072.0,1199.7 2072.8,1199.7 2073.6,1199.7 2074.4,1199.7 2075.2,1199.7 2076.0,1199.8 2076.8,1199.8 2077.6,1199.8 2078.4,1199.8 2079.1,1199.8 2079.9,1199.8 2080.7,1199.8 2081.5,1199.8 2082.3,1199.8 2083.1,1199.8 2083.9,1199.9 2084.7,1199.9 2085.5,1199.9 2086.3,1199.9 2087.1,1199.9 L2087.1,1205.9 Z" fill="#8b98ec" fill-opacity="0.95"/>
<path d="M1896.2,1205.9 L1896.2,1201.9 1897.0,1201.8 1897.8,1201.8 1898.6,1201.8 1899.4,1201.8 1900.2,1201.8 1901.0,1201.8 1901.8,1201.8 1902.6,1201.8 1903.4,1201.8 1904.2,1201.8 1905.0,1201.8 1905.8,1201.8 1906.6,1201.8 1907.4,1201.8 1908.2,1201.8 1909.0,1201.8 1909.8,1201.8 1910.6,1201.8 1911.3,1201.8 1912.1,1201.8 1912.9,1201.8 1913.7,1201.8 1914.5,1201.8 1915.3,1201.8 1916.1,1201.8 1916.9,1201.8 1917.7,1201.8 1918.5,1201.8 1919.3,1201.8 1920.1,1201.8 1920.9,1201.8 1921.7,1201.8 1922.5,1201.8 1923.3,1201.8 1924.1,1201.8 1924.9,1201.8 1925.7,1201.8 1926.5,1201.8 1927.3,1201.8 1928.0,1201.8 1928.8,1201.7 1929.6,1201.7 1930.4,1201.6 1931.2,1201.6 1932.0,1201.5 1932.8,1201.4 1933.6,1201.2 1934.4,1201.0 1935.2,1200.8 1936.0,1200.5 1936.8,1200.2 1937.6,1199.9 1938.4,1199.6 1939.2,1199.2 1940.0,1198.9 1940.8,1198.5 1941.6,1198.1 1942.4,1197.7 1943.2,1197.2 1944.0,1196.8 1944.7,1196.4 1945.5,1196.0 1946.3,1195.6 1947.1,1195.3 1947.9,1194.9 1948.7,1194.6 1949.5,1194.3 1950.3,1194.0 1951.1,1193.7 1951.9,1193.5 1952.7,1193.3 1953.5,1193.1 1954.3,1192.9 1955.1,1192.7 1955.9,1192.5 1956.7,1192.4 1957.5,1192.2 1958.3,1192.1 1959.1,1191.9 1959.9,1191.8 1960.7,1191.6 1961.4,1191.5 1962.2,1191.3 1963.0,1191.2 1963.8,1191.0 1964.6,1190.9 1965.4,1190.7 1966.2,1190.6 1967.0,1190.4 1967.8,1190.3 1968.6,1190.1 1969.4,1190.0 1970.2,1189.8 1971.0,1189.7 1971.8,1189.5 1972.6,1189.4 1973.4,1189.3 1974.2,1189.1 1975.0,1189.0 1975.8,1188.8 1976.6,1188.7 1977.4,1188.5 1978.1,1188.4 1978.9,1188.2 1979.7,1188.1 1980.5,1187.9 1981.3,1187.8 1982.1,1187.6 1982.9,1187.5 1983.7,1187.3 1984.5,1187.2 1985.3,1187.0 1986.1,1186.9 1986.9,1186.7 1987.7,1186.6 1988.5,1186.4 1989.3,1186.3 1990.1,1186.1 1990.9,1185.9 1991.7,1185.7 1992.5,1185.5 1993.3,1185.4 1994.1,1185.2 1994.8,1185.0 1995.6,1184.8 1996.4,1184.6 1997.2,1184.3 1998.0,1184.1 1998.8,1183.9 1999.6,1183.7 2000.4,1183.5 2001.2,1183.3 2002.0,1183.1 2002.8,1182.8 2003.6,1182.6 2004.4,1182.4 2005.2,1182.2 2006.0,1182.0 2006.8,1181.8 2007.6,1181.5 2008.4,1181.3 2009.2,1181.1 2010.0,1180.9 2010.8,1180.7 2011.6,1180.5 2012.3,1180.3 2013.1,1180.1 2013.9,1179.9 2014.7,1179.7 2015.5,1179.5 2016.3,1179.3 2017.1,1179.2 2017.9,1179.1 2018.7,1179.0 2019.5,1179.0 2020.3,1179.1 2021.1,1179.1 2021.9,1179.3 2022.7,1179.5 2023.5,1179.7 2024.3,1180.0 2025.1,1180.4 2025.9,1180.8 2026.7,1181.3 2027.5,1181.8 2028.3,1182.3 2029.0,1182.9 2029.8,1183.5 2030.6,1184.2 2031.4,1184.9 2032.2,1185.6 2033.0,1186.4 2033.8,1187.2 2034.6,1188.0 2035.4,1188.8 2036.2,1189.6 2037.0,1190.5 2037.8,1191.3 2038.6,1192.2 2039.4,1193.0 2040.2,1193.8 2041.0,1194.6 2041.8,1195.4 2042.6,1196.2 2043.4,1196.9 2044.2,1197.6 2045.0,1198.2 2045.7,1198.8 2046.5,1199.3 2047.3,1199.8 2048.1,1200.1 2048.9,1200.4 2049.7,1200.7 2050.5,1200.9 2051.3,1201.0 2052.1,1201.1 2052.9,1201.2 2053.7,1201.3 2054.5,1201.3 2055.3,1201.4 2056.1,1201.4 2056.9,1201.4 2057.7,1201.4 2058.5,1201.4 2059.3,1201.4 2060.1,1201.4 2060.9,1201.5 2061.7,1201.5 2062.4,1201.5 2063.2,1201.5 2064.0,1201.5 2064.8,1201.5 2065.6,1201.5 2066.4,1201.5 2067.2,1201.5 2068.0,1201.6 2068.8,1201.6 2069.6,1201.6 2070.4,1201.6 2071.2,1201.6 2072.0,1201.6 2072.8,1201.6 2073.6,1201.6 2074.4,1201.6 2075.2,1201.6 2076.0,1201.7 2076.8,1201.7 2077.6,1201.7 2078.4,1201.7 2079.1,1201.7 2079.9,1201.7 2080.7,1201.7 2081.5,1201.7 2082.3,1201.7 2083.1,1201.8 2083.9,1201.8 2084.7,1201.8 2085.5,1201.8 2086.3,1201.8 2087.1,1201.8 L2087.1,1205.9 Z" fill="#8878ff" fill-opacity="0.95"/>
<path d="M560.2,1015.1 H2087.1" stroke="#b01a3e" stroke-opacity="0.33" stroke-width="2.2" stroke-dasharray="10,9" fill="none"/>
<path d="M569.7,1205.6 H1896.2" stroke="#4a28f0" stroke-width="1.6"/>
<path d="M1896.2,1205.6 H2087.1" stroke="#7a68f5" stroke-width="1.6"/>
<path d="M560.2,1015.1 L560.9,1015.1 L561.5,1015.1 L562.2,1015.1 L562.9,1015.1 L563.5,1015.1 L564.2,1015.1 L564.8,1015.1 L565.5,1015.1 L566.2,1015.1 L566.8,1015.1 L567.5,1015.1 L568.2,1015.1 L568.8,1015.1 L569.5,1015.1 L570.1,1015.1 L570.8,1015.1 L571.5,1015.1 L572.1,1015.1 L572.8,1015.1 L573.5,1015.1 L574.1,1015.1 L574.8,1015.1 L575.4,1015.1 L576.1,1015.1 L576.8,1015.1 L577.4,1015.1 L578.1,1015.1 L578.8,1015.1 L579.4,1015.1 L580.1,1015.1 L580.7,1015.1 L581.4,1015.1 L582.1,1015.1 L582.7,1015.1 L583.4,1015.1 L584.1,1015.1 L584.7,1015.1 L585.4,1015.1 L586.0,1015.1 L586.7,1015.1 L587.4,1015.1 L588.0,1015.1 L588.7,1014.5 L589.4,1012.6 L590.0,1010.4 L590.7,1008.1 L591.3,1005.7 L592.0,1003.2 L592.7,1000.6 L593.3,998.0 L594.0,995.3 L594.7,992.6 L595.3,989.8 L596.0,987.0 L596.6,984.2 L597.3,981.3 L598.0,978.5 L598.6,975.6 L599.3,972.7 L600.0,969.7 L600.6,966.8 L601.3,963.9 L602.0,960.9 L602.6,958.0 L603.3,955.0 L603.9,952.0 L604.6,949.1 L605.3,946.1 L605.9,943.2 L606.6,940.2 L607.3,937.3 L607.9,934.3 L608.6,931.4 L609.2,928.5 L609.9,925.6 L610.6,922.7 L611.2,919.8 L611.9,916.9 L612.6,914.1 L613.2,911.3 L613.9,908.5 L614.5,905.7 L615.2,902.9 L615.9,900.2 L616.5,897.4 L617.2,894.7 L617.9,892.1 L618.5,889.4 L619.2,886.8 L619.8,884.2 L620.5,881.7 L621.2,879.2 L621.8,876.7 L622.5,874.2 L623.2,871.8 L623.8,869.4 L624.5,867.1 L625.1,864.8 L625.8,862.5 L626.5,860.3 L627.1,858.1 L627.8,855.9 L628.5,853.8 L629.1,851.8 L629.8,849.7 L630.4,847.7 L631.1,845.8 L631.8,843.9 L632.4,842.1 L633.1,840.3 L633.8,838.5 L634.4,836.8 L635.1,835.2 L635.7,833.6 L636.4,832.0 L637.1,830.5 L637.7,829.0 L638.4,827.6 L639.1,826.3 L639.7,825.0 L640.4,823.7 L641.1,822.6 L641.7,821.4 L642.4,820.3 L643.0,819.3 L643.7,818.3 L644.4,817.4 L645.0,816.5 L645.7,815.7 L646.4,815.0 L647.0,814.3 L647.7,813.6 L648.3,813.1 L649.0,812.5 L649.7,812.1 L650.3,811.7 L651.0,811.3 L651.7,811.0 L652.3,810.8 L653.0,810.6 L653.6,810.5 L654.3,810.4 L655.0,810.4 L655.6,810.5 L656.3,810.6 L657.0,810.9 L657.6,811.2 L658.3,811.5 L658.9,812.0 L659.6,812.5 L660.3,813.1 L660.9,813.8 L661.6,814.5 L662.3,815.3 L662.9,816.2 L663.6,817.2 L664.2,818.2 L664.9,819.3 L665.6,820.5 L666.2,821.8 L666.9,823.1 L667.6,824.5 L668.2,825.9 L668.9,827.4 L669.5,829.0 L670.2,830.7 L670.9,832.4 L671.5,834.2 L672.2,836.0 L672.9,837.9 L673.5,839.8 L674.2,841.8 L674.9,843.9 L675.5,846.0 L676.2,848.2 L676.8,850.4 L677.5,852.7 L678.2,855.0 L678.8,857.4 L679.5,859.8 L680.2,862.3 L680.8,864.8 L681.5,867.4 L682.1,869.9 L682.8,872.6 L683.5,875.2 L684.1,877.9 L684.8,880.7 L685.5,883.4 L686.1,886.2 L686.8,889.0 L687.4,891.9 L688.1,894.8 L688.8,897.6 L689.4,900.6 L690.1,903.5 L690.8,906.4 L691.4,909.4 L692.1,912.4 L692.7,915.3 L693.4,918.3 L694.1,921.3 L694.7,924.3 L695.4,927.3 L696.1,930.3 L696.7,933.3 L697.4,936.3 L698.0,939.2 L698.7,942.2 L699.4,945.1 L700.0,948.1 L700.7,951.0 L701.4,953.9 L702.0,956.8 L702.7,959.6 L703.3,962.4 L704.0,965.2 L704.7,968.0 L705.3,970.7 L706.0,973.4 L706.7,976.0 L707.3,978.6 L708.0,981.2 L708.6,983.7 L709.3,986.1 L710.0,988.5 L710.6,990.9 L711.3,993.1 L712.0,995.3 L712.6,997.5 L713.3,999.5 L714.0,1001.5 L714.6,1003.4 L715.3,1005.2 L715.9,1006.9 L716.6,1008.4 L717.3,1009.9 L717.9,1011.3 L718.6,1012.5 L719.3,1013.5 L719.9,1014.4 L720.6,1015.0 L721.2,1015.1 L721.9,1015.1 L722.6,1015.1 L723.2,1015.1 L723.9,1015.1 L724.6,1015.1 L725.2,1015.1 L725.9,1015.1 L726.5,1015.1 L727.2,1015.1 L727.9,1015.1 L728.5,1015.1 L729.2,1015.1 L729.9,1015.1 L730.5,1015.1 L731.2,1015.1 L731.8,1015.1 L732.5,1015.1 L733.2,1015.1 L733.8,1015.1 L734.5,1015.1 L735.2,1015.1 L735.8,1015.1 L736.5,1015.1 L737.1,1015.1 L737.8,1015.1 L738.5,1015.1 L739.1,1015.1 L739.8,1015.1 L740.5,1015.1 L741.1,1015.1 L741.8,1015.1 L742.4,1015.1 L743.1,1015.1 L743.8,1015.1 L744.4,1015.1 L745.1,1015.1 L745.8,1015.1 L746.4,1015.1 L747.1,1015.1 L747.7,1015.1 L748.4,1015.1 L749.1,1015.1 L749.7,1015.1 L750.4,1015.1 L751.1,1015.1 L751.7,1015.1 L752.4,1015.1 L753.1,1015.1 L753.7,1015.1 L754.4,1015.1 L755.0,1015.1 L755.7,1015.1 L756.4,1015.1 L757.0,1015.1 L757.7,1015.1 L758.4,1015.1 L759.0,1015.1 L759.7,1015.1 L760.3,1015.1 L761.0,1015.1 L761.7,1015.1 L762.3,1015.1 L763.0,1015.1 L763.7,1015.1 L764.3,1015.1 L765.0,1015.1 L765.6,1015.1 L766.3,1015.1 L767.0,1015.1 L767.6,1015.1 L768.3,1015.1 L769.0,1015.1 L769.6,1015.1 L770.3,1015.1 L770.9,1015.1 L771.6,1015.1 L772.3,1015.1 L772.9,1015.1 L773.6,1015.1 L774.3,1015.1 L774.9,1015.1 L775.6,1015.1 L776.2,1015.1 L776.9,1015.1 L777.6,1015.1 L778.2,1015.1 L778.9,1015.1 L779.6,1013.5 L780.2,1011.4 L780.9,1009.1 L781.5,1006.8 L782.2,1004.3 L782.9,1001.8 L783.5,999.2 L784.2,996.6 L784.9,993.7 L785.5,991.0 L786.2,988.2 L786.8,985.3 L787.5,982.9 L788.2,979.7 L788.8,976.8 L789.5,974.3 L790.2,970.9 L790.8,968.3 L791.5,965.4 L792.2,962.4 L792.8,959.3 L793.5,956.2 L794.1,953.1 L794.8,950.1 L795.5,947.6 L796.1,944.2 L796.8,942.0 L797.5,939.2 L798.1,936.2 L798.8,932.4 L799.4,960.8 L800.1,927.3 L800.8,937.4 L801.4,934.4 L802.1,918.1 L802.8,927.2 L803.4,912.8 L804.1,910.3 L804.7,906.6 L805.4,904.3 L806.1,901.5 L806.7,897.9 L807.4,895.8 L808.1,893.5 L808.7,890.4 L809.4,887.2 L810.0,884.7 L810.7,882.8 L811.4,879.8 L812.0,877.3 L812.7,873.9 L813.4,870.9 L814.0,868.8 L814.7,866.8 L815.3,863.7 L816.0,861.6 L816.7,860.2 L817.3,856.7 L818.0,855.9 L818.7,852.8 L819.3,851.4 L820.0,849.2 L820.6,845.2 L821.3,902.3 L822.0,842.8 L822.6,840.1 L823.3,837.1 L824.0,837.3 L824.6,834.3 L825.3,832.0 L825.9,830.0 L826.6,828.6 L827.3,826.4 L827.9,825.3 L828.6,825.5 L829.3,821.6 L829.9,820.5 L830.6,820.9 L831.3,817.9 L831.9,818.0 L832.6,815.2 L833.2,814.4 L833.9,813.6 L834.6,811.7 L835.2,811.3 L835.9,811.0 L836.6,808.3 L837.2,806.8 L837.9,807.6 L838.5,806.4 L839.2,805.4 L839.9,803.5 L840.5,880.4 L841.2,802.9 L841.9,870.3 L842.5,800.6 L843.2,838.1 L843.8,861.6 L844.5,836.4 L845.2,825.4 L845.8,801.1 L846.5,799.5 L847.2,809.7 L847.8,825.6 L848.5,809.1 L849.1,798.7 L849.8,845.6 L850.5,822.0 L851.1,807.9 L851.8,835.0 L852.5,845.4 L853.1,819.4 L853.8,821.8 L854.4,823.1 L855.1,815.4 L855.8,826.8 L856.4,816.2 L857.1,820.7 L857.8,846.9 L858.4,829.2 L859.1,824.9 L859.7,836.1 L860.4,832.7 L861.1,873.3 L861.7,837.0 L862.4,842.9 L863.1,847.7 L863.7,895.7 L864.4,851.4 L865.0,850.1 L865.7,853.3 L866.4,868.5 L867.0,870.5 L867.7,894.3 L868.4,868.9 L869.0,895.2 L869.7,874.1 L870.4,918.8 L871.0,889.1 L871.7,881.7 L872.3,878.5 L873.0,922.9 L873.7,909.7 L874.3,918.5 L875.0,932.7 L875.7,895.3 L876.3,896.0 L877.0,900.0 L877.6,898.3 L878.3,935.8 L879.0,923.1 L879.6,912.9 L880.3,915.0 L881.0,938.8 L881.6,939.6 L882.3,917.5 L882.9,921.8 L883.6,932.6 L884.3,925.3 L884.9,928.2 L885.6,943.0 L886.3,935.4 L886.9,945.9 L887.6,967.1 L888.2,947.6 L888.9,945.7 L889.6,971.5 L890.2,953.8 L890.9,953.6 L891.6,966.2 L892.2,960.6 L892.9,976.7 L893.5,974.4 L894.2,974.4 L894.9,972.0 L895.5,972.4 L896.2,980.6 L896.9,978.0 L897.5,992.4 L898.2,991.8 L898.8,985.5 L899.5,989.5 L900.2,990.3 L900.8,991.7 L901.5,998.0 L902.2,998.8 L902.8,999.1 L903.5,1001.2 L904.2,1001.4 L904.8,1007.1 L905.5,1005.5 L906.1,1009.0 L906.8,1009.0 L907.5,1009.6 L908.1,1011.1 L908.8,1012.2 L909.5,1013.3 L910.1,1014.1 L910.8,1014.8 L911.4,1015.1 L912.1,1015.1 L912.8,1015.1 L913.4,1015.1 L914.1,1015.1 L914.8,1015.1 L915.4,1015.1 L916.1,1015.1 L916.7,1015.1 L917.4,1015.1 L918.1,1015.1 L918.7,1015.1 L919.4,1015.1 L920.1,1015.1 L920.7,1015.1 L921.4,1015.1 L922.0,1015.1 L922.7,1015.1 L923.4,1015.1 L924.0,1015.1 L924.7,1015.1 L925.4,1015.1 L926.0,1015.1 L926.7,1015.1 L927.3,1015.1 L928.0,1015.1 L928.7,1015.1 L929.3,1015.1 L930.0,1015.1 L930.7,1015.1 L931.3,1015.1 L932.0,1015.1 L932.6,1015.1 L933.3,1015.1 L934.0,1015.1 L934.6,1015.1 L935.3,1015.1 L936.0,1015.1 L936.6,1015.1 L937.3,1015.1 L937.9,1015.1 L938.6,1015.1 L939.3,1015.1 L939.9,1015.1 L940.6,1015.1 L941.3,1015.1 L941.9,1015.1 L942.6,1015.1 L943.3,1015.1 L943.9,1015.1 L944.6,1015.1 L945.2,1015.1 L945.9,1015.1 L946.6,1015.1 L947.2,1015.1 L947.9,1015.1 L948.6,1015.1 L949.2,1015.1 L949.9,1015.1 L950.5,1015.1 L951.2,1015.1 L951.9,1015.1 L952.5,1015.1 L953.2,1015.1 L953.9,1015.1 L954.5,1015.1 L955.2,1015.1 L955.8,1015.1 L956.5,1015.1 L957.2,1015.1 L957.8,1015.1 L958.5,1015.1 L959.2,1015.1 L959.8,1015.1 L960.5,1015.1 L961.1,1015.1 L961.8,1015.1 L962.5,1015.1 L963.1,1015.1 L963.8,1015.1 L964.5,1015.1 L965.1,1015.1 L965.8,1015.1 L966.4,1015.1 L967.1,1015.1 L967.8,1015.1 L968.4,1015.1 L969.1,1015.1 L969.8,1015.1 L970.4,1015.1 L971.1,1011.7 L971.7,1007.4 L972.4,1002.6 L973.1,998.9 L973.7,993.8 L974.4,990.5 L975.1,985.3 L975.7,981.6 L976.4,976.9 L977.0,973.4 L977.7,969.6 L978.4,965.0 L979.0,958.5 L979.7,957.2 L980.4,950.0 L981.0,948.4 L981.7,941.9 L982.4,990.1 L983.0,972.5 L983.7,934.1 L984.3,960.1 L985.0,952.1 L985.7,971.2 L986.3,930.7 L987.0,929.3 L987.7,957.6 L988.3,925.5 L989.0,948.9 L989.6,948.1 L990.3,928.6 L991.0,973.4 L991.6,899.8 L992.3,960.2 L993.0,934.2 L993.6,965.5 L994.3,897.7 L994.9,870.8 L995.6,891.5 L996.3,874.0 L996.9,896.0 L997.6,854.1 L998.3,958.0 L998.9,898.1 L999.6,941.8 L1000.2,853.7 L1000.9,856.1 L1001.6,893.8 L1002.2,860.2 L1002.9,892.2 L1003.6,832.8 L1004.2,919.3 L1004.9,880.7 L1005.5,940.5 L1006.2,864.8 L1006.9,876.0 L1007.5,852.4 L1008.2,846.0 L1008.9,854.5 L1009.5,899.1 L1010.2,835.6 L1010.8,832.5 L1011.5,878.6 L1012.2,848.5 L1012.8,907.2 L1013.5,934.7 L1014.2,787.6 L1014.8,874.5 L1015.5,844.4 L1016.1,797.4 L1016.8,797.9 L1017.5,894.5 L1018.1,877.0 L1018.8,796.4 L1019.5,898.2 L1020.1,816.1 L1020.8,936.5 L1021.5,880.0 L1022.1,890.6 L1022.8,808.4 L1023.4,811.7 L1024.1,904.3 L1024.8,872.6 L1025.4,760.4 L1026.1,922.6 L1026.8,838.5 L1027.4,896.7 L1028.1,765.2 L1028.7,842.4 L1029.4,811.1 L1030.1,756.1 L1030.7,791.4 L1031.4,788.4 L1032.1,732.2 L1032.7,879.5 L1033.4,831.7 L1034.0,852.1 L1034.7,850.7 L1035.4,883.9 L1036.0,874.7 L1036.7,763.5 L1037.4,809.2 L1038.0,869.0 L1038.7,780.3 L1039.3,854.2 L1040.0,819.0 L1040.7,932.9 L1041.3,886.9 L1042.0,812.2 L1042.7,874.0 L1043.3,866.7 L1044.0,821.4 L1044.6,890.8 L1045.3,791.8 L1046.0,808.2 L1046.6,797.0 L1047.3,804.3 L1048.0,882.3 L1048.6,878.3 L1049.3,837.8 L1049.9,805.2 L1050.6,896.5 L1051.3,824.8 L1051.9,829.1 L1052.6,831.2 L1053.3,890.4 L1053.9,817.5 L1054.6,900.7 L1055.2,884.4 L1055.9,864.8 L1056.6,892.6 L1057.2,881.6 L1057.9,871.4 L1058.6,850.9 L1059.2,826.2 L1059.9,846.0 L1060.6,852.8 L1061.2,893.4 L1061.9,873.8 L1062.5,890.8 L1063.2,902.7 L1063.9,875.5 L1064.5,866.3 L1065.2,886.5 L1065.9,864.2 L1066.5,877.6 L1067.2,893.5 L1067.8,871.7 L1068.5,870.0 L1069.2,891.8 L1069.8,884.4 L1070.5,906.2 L1071.2,896.0 L1071.8,898.2 L1072.5,892.4 L1073.1,911.2 L1073.8,901.2 L1074.5,909.0 L1075.1,912.3 L1075.8,929.0 L1076.5,933.6 L1077.1,923.2 L1077.8,933.2 L1078.4,924.3 L1079.1,948.0 L1079.8,936.4 L1080.4,937.2 L1081.1,955.8 L1081.8,936.0 L1082.4,937.2 L1083.1,958.7 L1083.7,963.2 L1084.4,962.4 L1085.1,952.8 L1085.7,958.5 L1086.4,958.7 L1087.1,957.5 L1087.7,961.2 L1088.4,964.4 L1089.0,967.1 L1089.7,969.9 L1090.4,973.6 L1091.0,978.2 L1091.7,980.7 L1092.4,983.5 L1093.0,987.3 L1093.7,989.4 L1094.3,992.4 L1095.0,995.7 L1095.7,997.4 L1096.3,1000.0 L1097.0,1002.5 L1097.7,1005.5 L1098.3,1007.5 L1099.0,1009.5 L1099.7,1011.6 L1100.3,1013.3 L1101.0,1014.7 L1101.6,1015.1 L1102.3,1015.1 L1103.0,1015.1 L1103.6,1015.1 L1104.3,1015.1 L1105.0,1015.1 L1105.6,1015.1 L1106.3,1015.1 L1106.9,1015.1 L1107.6,1015.1 L1108.3,1015.1 L1108.9,1015.1 L1109.6,1015.1 L1110.3,1015.1 L1110.9,1015.1 L1111.6,1015.1 L1112.2,1015.1 L1112.9,1015.1 L1113.6,1015.1 L1114.2,1015.1 L1114.9,1015.1 L1115.6,1015.1 L1116.2,1015.1 L1116.9,1015.1 L1117.5,1015.1 L1118.2,1015.1 L1118.9,1015.1 L1119.5,1015.1 L1120.2,1015.1 L1120.9,1015.1 L1121.5,1015.1 L1122.2,1015.1 L1122.8,1015.1 L1123.5,1015.1 L1124.2,1015.1 L1124.8,1015.1 L1125.5,1015.1 L1126.2,1015.1 L1126.8,1015.1 L1127.5,1015.1 L1128.1,1015.1 L1128.8,1015.1 L1129.5,1015.1 L1130.1,1015.1 L1130.8,1015.1 L1131.5,1015.1 L1132.1,1015.1 L1132.8,1015.1 L1133.5,1015.1 L1134.1,1015.1 L1134.8,1015.1 L1135.4,1015.1 L1136.1,1015.1 L1136.8,1015.1 L1137.4,1015.1 L1138.1,1015.1 L1138.8,1015.1 L1139.4,1015.1 L1140.1,1015.1 L1140.7,1015.1 L1141.4,1015.1 L1142.1,1015.1 L1142.7,1015.1 L1143.4,1015.1 L1144.1,1015.1 L1144.7,1015.1 L1145.4,1015.1 L1146.0,1015.1 L1146.7,1015.1 L1147.4,1015.1 L1148.0,1015.1 L1148.7,1015.1 L1149.4,1015.1 L1150.0,1015.1 L1150.7,1015.1 L1151.3,1015.1 L1152.0,1015.1 L1152.7,1015.1 L1153.3,1015.1 L1154.0,1015.1 L1154.7,1015.1 L1155.3,1015.1 L1156.0,1015.1 L1156.6,1015.1 L1157.3,1015.1 L1158.0,1013.9 L1158.6,1011.3 L1159.3,1008.6 L1160.0,1005.8 L1160.6,1002.9 L1161.3,999.9 L1161.9,996.8 L1162.6,993.8 L1163.3,990.7 L1163.9,987.5 L1164.6,984.4 L1165.3,981.2 L1165.9,978.0 L1166.6,974.8 L1167.2,971.5 L1167.9,968.3 L1168.6,965.0 L1169.2,966.3 L1169.9,972.1 L1170.6,956.9 L1171.2,962.1 L1171.9,952.3 L1172.6,956.5 L1173.2,961.4 L1173.9,969.6 L1174.5,937.3 L1175.2,935.9 L1175.9,942.2 L1176.5,926.5 L1177.2,953.2 L1177.9,920.2 L1178.5,917.0 L1179.2,916.8 L1179.8,916.0 L1180.5,910.0 L1181.2,905.2 L1181.8,902.2 L1182.5,923.6 L1183.2,912.8 L1183.8,894.6 L1184.5,894.1 L1185.1,893.8 L1185.8,890.4 L1186.5,880.5 L1187.1,882.0 L1187.8,878.8 L1188.5,876.4 L1189.1,871.9 L1189.8,895.7 L1190.4,867.7 L1191.1,866.3 L1191.8,859.4 L1192.4,864.2 L1193.1,859.2 L1193.8,859.1 L1194.4,853.1 L1195.1,853.8 L1195.7,844.1 L1196.4,896.7 L1197.1,898.9 L1197.7,838.3 L1198.4,846.2 L1199.1,868.3 L1199.7,841.4 L1200.4,830.2 L1201.0,873.7 L1201.7,849.6 L1202.4,856.2 L1203.0,830.3 L1203.7,830.3 L1204.4,886.3 L1205.0,825.4 L1205.7,887.8 L1206.3,851.9 L1207.0,883.0 L1207.7,876.8 L1208.3,812.3 L1209.0,814.7 L1209.7,863.7 L1210.3,836.1 L1211.0,811.5 L1211.7,809.6 L1212.3,880.3 L1213.0,835.7 L1213.6,858.4 L1214.3,805.8 L1215.0,803.4 L1215.6,826.5 L1216.3,822.2 L1217.0,797.7 L1217.6,821.0 L1218.3,801.6 L1218.9,818.5 L1219.6,796.3 L1220.3,811.6 L1220.9,799.4 L1221.6,865.5 L1222.3,790.6 L1222.9,803.1 L1223.6,796.9 L1224.2,800.7 L1224.9,833.3 L1225.6,798.0 L1226.2,791.9 L1226.9,820.9 L1227.6,876.1 L1228.2,863.7 L1228.9,849.8 L1229.5,819.9 L1230.2,830.1 L1230.9,830.6 L1231.5,810.0 L1232.2,807.0 L1232.9,858.5 L1233.5,805.2 L1234.2,809.4 L1234.8,866.4 L1235.5,806.6 L1236.2,813.8 L1236.8,851.1 L1237.5,814.1 L1238.2,814.5 L1238.8,813.5 L1239.5,822.0 L1240.1,819.7 L1240.8,873.1 L1241.5,821.7 L1242.1,842.0 L1242.8,842.9 L1243.5,897.5 L1244.1,830.1 L1244.8,838.3 L1245.4,840.6 L1246.1,841.7 L1246.8,850.3 L1247.4,851.7 L1248.1,875.2 L1248.8,876.8 L1249.4,895.4 L1250.1,913.2 L1250.8,860.6 L1251.4,864.3 L1252.1,872.9 L1252.7,896.2 L1253.4,902.8 L1254.1,901.6 L1254.7,888.5 L1255.4,888.7 L1256.1,894.6 L1256.7,904.2 L1257.4,904.0 L1258.0,902.4 L1258.7,929.6 L1259.4,910.7 L1260.0,925.8 L1260.7,949.2 L1261.4,953.2 L1262.0,931.6 L1262.7,935.2 L1263.3,943.7 L1264.0,946.6 L1264.7,950.7 L1265.3,954.0 L1266.0,961.2 L1266.7,964.9 L1267.3,969.7 L1268.0,974.3 L1268.6,980.4 L1269.3,985.4 L1270.0,991.5 L1270.6,997.8 L1271.3,1004.7 L1272.0,1012.5 L1272.6,1015.1 L1273.3,1015.1 L1273.9,1015.1 L1274.6,1015.1 L1275.3,1015.1 L1275.9,1015.1 L1276.6,1015.1 L1277.3,1015.1 L1277.9,1015.1 L1278.6,1015.1 L1279.2,1015.1 L1279.9,1015.1 L1280.6,1015.1 L1281.2,1015.1 L1281.9,1015.1 L1282.6,1015.1 L1283.2,1015.1 L1283.9,1015.1 L1284.5,1015.1 L1285.2,1015.1 L1285.9,1015.1 L1286.5,1015.1 L1287.2,1015.1 L1287.9,1015.1 L1288.5,1015.1 L1289.2,1015.1 L1289.9,1015.1 L1290.5,1015.1 L1291.2,1015.1 L1291.8,1015.1 L1292.5,1015.1 L1293.2,1015.1 L1293.8,1015.1 L1294.5,1015.1 L1295.2,1015.1 L1295.8,1015.1 L1296.5,1015.1 L1297.1,1015.1 L1297.8,1015.1 L1298.5,1015.1 L1299.1,1015.1 L1299.8,1015.1 L1300.5,1015.1 L1301.1,1015.1 L1301.8,1015.1 L1302.4,1015.1 L1303.1,1015.1 L1303.8,1015.1 L1304.4,1015.1 L1305.1,1015.1 L1305.8,1015.1 L1306.4,1015.1 L1307.1,1015.1 L1307.7,1015.1 L1308.4,1015.1 L1309.1,1015.1 L1309.7,1015.1 L1310.4,1015.1 L1311.1,1015.1 L1311.7,1015.1 L1312.4,1015.1 L1313.0,1015.1 L1313.7,1015.1 L1314.4,1015.1 L1315.0,1015.1 L1315.7,1015.1 L1316.4,1015.1 L1317.0,1015.1 L1317.7,1015.1 L1318.3,1015.1 L1319.0,1015.1 L1319.7,1015.1 L1320.3,1015.1 L1321.0,1015.1 L1321.7,1015.1 L1322.3,1015.1 L1323.0,1015.1 L1323.7,1015.1 L1324.3,1015.1 L1325.0,1015.1 L1325.6,1015.1 L1326.3,1015.1 L1327.0,1015.1 L1327.6,1015.1 L1328.3,1015.1 L1329.0,1015.1 L1329.6,1015.1 L1330.3,1015.1 L1330.9,1015.1 L1331.6,1015.1 L1332.3,1015.1 L1332.9,1015.1 L1333.6,1015.1 L1334.3,1015.1 L1334.9,1015.1 L1335.6,1015.1 L1336.2,1015.1 L1336.9,1015.1 L1337.6,1015.1 L1338.2,1015.1 L1338.9,1015.1 L1339.6,1015.1 L1340.2,1015.1 L1340.9,1015.1 L1341.5,1015.1 L1342.2,1015.1 L1342.9,1015.1 L1343.5,1015.1 L1344.2,1015.1 L1344.9,1015.1 L1345.5,1015.1 L1346.2,1015.1 L1346.8,1015.1 L1347.5,1015.1 L1348.2,1015.1 L1348.8,1015.1 L1349.5,1015.1 L1350.2,1015.1 L1350.8,1015.1 L1351.5,1015.1 L1352.1,1015.1 L1352.8,1015.1 L1353.5,1015.1 L1354.1,1015.1 L1354.8,1014.2 L1355.5,1013.3 L1356.1,1012.3 L1356.8,1011.4 L1357.4,1010.5 L1358.1,1009.5 L1358.8,1008.6 L1359.4,1007.6 L1360.1,1006.7 L1360.8,1005.7 L1361.4,1004.8 L1362.1,1003.6 L1362.8,1002.2 L1363.4,1000.8 L1364.1,999.4 L1364.7,998.0 L1365.4,996.5 L1366.1,995.1 L1366.7,993.7 L1367.4,992.3 L1368.1,990.9 L1368.7,989.4 L1369.4,988.0 L1370.0,986.6 L1370.7,985.2 L1371.4,983.8 L1372.0,979.3 L1372.7,974.9 L1373.4,970.4 L1374.0,966.0 L1374.7,961.5 L1375.3,957.1 L1376.0,952.6 L1376.7,948.2 L1377.3,980.5 L1378.0,971.0 L1378.7,977.2 L1379.3,933.7 L1380.0,928.4 L1380.6,937.4 L1381.3,958.2 L1382.0,938.6 L1382.6,960.0 L1383.3,894.5 L1384.0,954.6 L1384.6,889.1 L1385.3,922.9 L1385.9,920.5 L1386.6,921.2 L1387.3,880.0 L1387.9,889.6 L1388.6,922.4 L1389.3,930.5 L1389.9,847.1 L1390.6,879.8 L1391.2,940.1 L1391.9,871.4 L1392.6,936.9 L1393.2,936.7 L1393.9,810.0 L1394.6,804.2 L1395.2,921.2 L1395.9,943.7 L1396.5,796.3 L1397.2,908.7 L1397.9,890.1 L1398.5,867.1 L1399.2,872.3 L1399.9,898.6 L1400.5,922.2 L1401.2,779.6 L1401.9,776.1 L1402.5,800.3 L1403.2,732.2 L1403.8,774.1 L1404.5,913.2 L1405.2,921.8 L1405.8,912.8 L1406.5,772.4 L1407.2,861.6 L1407.8,922.6 L1408.5,831.3 L1409.1,790.8 L1409.8,867.4 L1410.5,888.0 L1411.1,775.7 L1411.8,890.8 L1412.5,775.6 L1413.1,863.7 L1413.8,783.3 L1414.4,900.3 L1415.1,776.0 L1415.8,840.9 L1416.4,872.6 L1417.1,775.2 L1417.8,844.1 L1418.4,778.4 L1419.1,802.3 L1419.7,867.1 L1420.4,829.7 L1421.1,921.0 L1421.7,820.3 L1422.4,932.4 L1423.1,890.1 L1423.7,866.5 L1424.4,842.8 L1425.0,925.1 L1425.7,841.5 L1426.4,922.8 L1427.0,929.8 L1427.7,880.0 L1428.4,927.7 L1429.0,886.9 L1429.7,934.6 L1430.3,918.8 L1431.0,960.0 L1431.7,903.1 L1432.3,972.3 L1433.0,936.7 L1433.7,893.4 L1434.3,933.5 L1435.0,939.3 L1435.6,930.9 L1436.3,955.7 L1437.0,930.1 L1437.6,895.4 L1438.3,890.9 L1439.0,959.6 L1439.6,911.8 L1440.3,948.8 L1441.0,971.8 L1441.6,897.3 L1442.3,901.4 L1442.9,979.7 L1443.6,968.6 L1444.3,954.7 L1444.9,973.3 L1445.6,960.3 L1446.3,964.6 L1446.9,969.7 L1447.6,974.8 L1448.2,979.9 L1448.9,985.1 L1449.6,990.2 L1450.2,991.6 L1450.9,992.6 L1451.6,993.7 L1452.2,994.8 L1452.9,995.8 L1453.5,996.9 L1454.2,997.9 L1454.9,999.0 L1455.5,1000.1 L1456.2,1001.1 L1456.9,1002.2 L1457.5,1002.8 L1458.2,1002.7 L1458.8,1002.6 L1459.5,1002.6 L1460.2,1002.5 L1460.8,1002.4 L1461.5,1002.3 L1462.2,1002.2 L1462.8,1002.1 L1463.5,1002.0 L1464.1,1001.9 L1464.8,1001.9 L1465.5,1001.8 L1466.1,1001.7 L1466.8,1001.6 L1467.5,1001.5 L1468.1,1002.7 L1468.8,1005.0 L1469.4,1007.2 L1470.1,1009.5 L1470.8,1011.8 L1471.4,1014.0 L1472.1,1015.1 L1472.8,1015.1 L1473.4,1015.1 L1474.1,1015.1 L1474.7,1015.1 L1475.4,1015.1 L1476.1,1015.1 L1476.7,1015.1 L1477.4,1015.1 L1478.1,1015.1 L1478.7,1015.1 L1479.4,1015.1 L1480.1,1015.1 L1480.7,1015.1 L1481.4,1015.1 L1482.0,1015.1 L1482.7,1015.1 L1483.4,1015.1 L1484.0,1015.1 L1484.7,1015.1 L1485.4,1015.1 L1486.0,1015.1 L1486.7,1015.1 L1487.3,1015.1 L1488.0,1015.1 L1488.7,1015.1 L1489.3,1015.1 L1490.0,1015.1 L1490.7,1015.1 L1491.3,1015.1 L1492.0,1015.1 L1492.6,1015.1 L1493.3,1015.1 L1494.0,1015.1 L1494.6,1015.1 L1495.3,1015.1 L1496.0,1015.1 L1496.6,1015.1 L1497.3,1015.1 L1497.9,1015.1 L1498.6,1015.1 L1499.3,1015.1 L1499.9,1015.1 L1500.6,1015.1 L1501.3,1015.1 L1501.9,1015.1 L1502.6,1015.1 L1503.2,1015.1 L1503.9,1015.1 L1504.6,1015.1 L1505.2,1015.1 L1505.9,1015.1 L1506.6,1015.1 L1507.2,1015.1 L1507.9,1015.1 L1508.5,1015.1 L1509.2,1015.1 L1509.9,1015.1 L1510.5,1015.1 L1511.2,1015.1 L1511.9,1015.1 L1512.5,1015.1 L1513.2,1015.1 L1513.8,1015.1 L1514.5,1015.1 L1515.2,1015.1 L1515.8,1015.1 L1516.5,1015.1 L1517.2,1015.1 L1517.8,1015.1 L1518.5,1015.1 L1519.2,1015.1 L1519.8,1015.1 L1520.5,1015.1 L1521.1,1015.1 L1521.8,1015.1 L1522.5,1015.1 L1523.1,1015.1 L1523.8,1015.1 L1524.5,1015.1 L1525.1,1015.1 L1525.8,1015.1 L1526.4,1015.1 L1527.1,1015.1 L1527.8,1015.1 L1528.4,1015.1 L1529.1,1015.1 L1529.8,1015.1 L1530.4,1015.1 L1531.1,1015.1 L1531.7,1015.1 L1532.4,1015.1 L1533.1,1015.1 L1533.7,1015.1 L1534.4,1015.1 L1535.1,1015.1 L1535.7,1015.1 L1536.4,1015.1 L1537.0,1015.1 L1537.7,1015.1 L1538.4,1015.1 L1539.0,1015.1 L1539.7,1015.1 L1540.4,1015.1 L1541.0,1015.1 L1541.7,1015.1 L1542.3,1015.1 L1543.0,1015.1 L1543.7,1015.1 L1544.3,1015.1 L1545.0,1013.8 L1545.7,1012.2 L1546.3,1010.5 L1547.0,1008.9 L1547.6,1007.2 L1548.3,1005.6 L1549.0,1003.9 L1549.6,1002.3 L1550.3,1000.6 L1551.0,999.0 L1551.6,997.3 L1552.3,995.7 L1553.0,993.2 L1553.6,989.7 L1554.3,986.1 L1554.9,982.5 L1555.6,978.9 L1556.3,975.3 L1556.9,971.7 L1557.6,968.2 L1558.3,964.6 L1558.9,961.0 L1559.6,957.2 L1560.2,952.9 L1560.9,948.6 L1561.6,944.3 L1562.2,940.1 L1562.9,950.9 L1563.6,991.7 L1564.2,930.7 L1564.9,947.8 L1565.5,989.3 L1566.2,989.2 L1566.9,985.5 L1567.5,961.9 L1568.2,901.3 L1568.9,900.2 L1569.5,908.7 L1570.2,912.9 L1570.8,939.7 L1571.5,958.2 L1572.2,968.7 L1572.8,872.0 L1573.5,860.9 L1574.2,855.4 L1574.8,905.0 L1575.5,958.8 L1576.1,834.9 L1576.8,829.5 L1577.5,820.0 L1578.1,824.1 L1578.8,962.4 L1579.5,879.2 L1580.1,802.1 L1580.8,849.1 L1581.4,946.5 L1582.1,837.5 L1582.8,855.1 L1583.4,819.0 L1584.1,923.9 L1584.8,893.8 L1585.4,794.8 L1586.1,858.7 L1586.7,894.6 L1587.4,806.4 L1588.1,795.7 L1588.7,943.4 L1589.4,950.0 L1590.1,859.5 L1590.7,813.4 L1591.4,824.4 L1592.1,925.2 L1592.7,877.0 L1593.4,807.2 L1594.0,780.4 L1594.7,869.3 L1595.4,919.9 L1596.0,876.1 L1596.7,779.7 L1597.4,950.5 L1598.0,775.8 L1598.7,879.5 L1599.3,950.2 L1600.0,870.3 L1600.7,913.2 L1601.3,889.1 L1602.0,850.2 L1602.7,786.8 L1603.3,813.2 L1604.0,771.6 L1604.6,913.7 L1605.3,809.4 L1606.0,832.3 L1606.6,828.7 L1607.3,858.3 L1608.0,799.1 L1608.6,898.7 L1609.3,854.7 L1609.9,825.2 L1610.6,845.7 L1611.3,925.1 L1611.9,893.6 L1612.6,771.7 L1613.3,825.2 L1613.9,928.7 L1614.6,786.0 L1615.2,793.2 L1615.9,814.4 L1616.6,778.6 L1617.2,865.6 L1617.9,894.1 L1618.6,833.9 L1619.2,842.1 L1619.9,787.6 L1620.5,866.2 L1621.2,790.5 L1621.9,915.6 L1622.5,849.3 L1623.2,946.0 L1623.9,920.5 L1624.5,958.5 L1625.2,869.8 L1625.8,875.3 L1626.5,919.9 L1627.2,921.5 L1627.8,874.0 L1628.5,885.6 L1629.2,916.3 L1629.8,922.9 L1630.5,950.7 L1631.2,921.8 L1631.8,912.3 L1632.5,924.3 L1633.1,915.4 L1633.8,913.5 L1634.5,926.9 L1635.1,987.0 L1635.8,917.9 L1636.5,984.6 L1637.1,930.3 L1637.8,925.6 L1638.4,985.1 L1639.1,919.6 L1639.8,919.4 L1640.4,945.0 L1641.1,920.3 L1641.8,927.0 L1642.4,917.3 L1643.1,913.3 L1643.7,898.3 L1644.4,967.2 L1645.1,897.4 L1645.7,950.4 L1646.4,930.3 L1647.1,923.8 L1647.7,897.9 L1648.4,952.5 L1649.0,928.0 L1649.7,978.4 L1650.4,930.7 L1651.0,982.8 L1651.7,947.8 L1652.4,932.4 L1653.0,984.5 L1653.7,969.4 L1654.3,958.5 L1655.0,947.2 L1655.7,967.4 L1656.3,925.6 L1657.0,981.8 L1657.7,952.5 L1658.3,968.1 L1659.0,983.7 L1659.6,997.1 L1660.3,994.7 L1661.0,992.4 L1661.6,990.0 L1662.3,987.6 L1663.0,985.3 L1663.6,982.9 L1664.3,981.7 L1664.9,985.1 L1665.6,988.5 L1666.3,991.9 L1666.9,995.3 L1667.6,998.6 L1668.3,1001.8 L1668.9,1003.7 L1669.6,1005.6 L1670.3,1007.5 L1670.9,1009.4 L1671.6,1011.2 L1672.2,1013.1 L1672.9,1015.0 L1673.6,1015.1 L1674.2,1015.1 L1674.9,1015.1 L1675.6,1015.1 L1676.2,1015.1 L1676.9,1015.1 L1677.5,1015.1 L1678.2,1015.1 L1678.9,1015.1 L1679.5,1015.1 L1680.2,1015.1 L1680.9,1015.1 L1681.5,1015.1 L1682.2,1015.1 L1682.8,1015.1 L1683.5,1015.1 L1684.2,1015.1 L1684.8,1015.1 L1685.5,1015.1 L1686.2,1015.1 L1686.8,1015.1 L1687.5,1015.1 L1688.1,1015.1 L1688.8,1015.1 L1689.5,1015.1 L1690.1,1015.1 L1690.8,1015.1 L1691.5,1015.1 L1692.1,1015.1 L1692.8,1015.1 L1693.4,1015.1 L1694.1,1015.1 L1694.8,1015.1 L1695.4,1015.1 L1696.1,1015.1 L1696.8,1015.1 L1697.4,1015.1 L1698.1,1015.1 L1698.7,1015.1 L1699.4,1015.1 L1700.1,1015.1 L1700.7,1015.1 L1701.4,1015.1 L1702.1,1015.1 L1702.7,1015.1 L1703.4,1015.1 L1704.0,1015.1 L1704.7,1015.1 L1705.4,1015.1 L1706.0,1015.1 L1706.7,1015.1 L1707.4,1015.1 L1708.0,1015.1 L1708.7,1015.1 L1709.4,1015.1 L1710.0,1015.1 L1710.7,1015.1 L1711.3,1015.1 L1712.0,1015.1 L1712.7,1015.1 L1713.3,1015.1 L1714.0,1015.1 L1714.7,1015.1 L1715.3,1015.1 L1716.0,1015.1 L1716.6,1015.1 L1717.3,1015.1 L1718.0,1015.1 L1718.6,1015.1 L1719.3,1015.1 L1720.0,1015.1 L1720.6,1015.1 L1721.3,1015.1 L1721.9,1015.1 L1722.6,1015.1 L1723.3,1015.1 L1723.9,1015.1 L1724.6,1015.1 L1725.3,1015.1 L1725.9,1015.1 L1726.6,1015.1 L1727.2,1015.1 L1727.9,1015.1 L1728.6,1015.1 L1729.2,1015.1 L1729.9,1015.1 L1730.6,1015.1 L1731.2,1015.1 L1731.9,1015.1 L1732.5,1015.1 L1733.2,1015.1 L1733.9,1015.1 L1734.5,1015.1 L1735.2,1015.1 L1735.9,1015.1 L1736.5,1015.1 L1737.2,1015.1 L1737.8,1014.4 L1738.5,1013.3 L1739.2,1012.3 L1739.8,1011.2 L1740.5,1010.1 L1741.2,1009.0 L1741.8,1007.9 L1742.5,1006.8 L1743.1,1005.7 L1743.8,1004.6 L1744.5,1003.5 L1745.1,1002.4 L1745.8,1001.3 L1746.5,1000.2 L1747.1,999.1 L1747.8,997.5 L1748.5,995.6 L1749.1,993.7 L1749.8,991.7 L1750.4,990.9 L1751.1,988.5 L1751.8,999.9 L1752.4,997.3 L1753.1,982.4 L1753.8,988.2 L1754.4,980.4 L1755.1,977.1 L1755.7,991.0 L1756.4,982.3 L1757.1,971.7 L1757.7,991.7 L1758.4,987.5 L1759.1,960.7 L1759.7,958.6 L1760.4,961.3 L1761.0,979.8 L1761.7,947.8 L1762.4,957.1 L1763.0,956.3 L1763.7,967.4 L1764.4,936.2 L1765.0,933.7 L1765.7,943.5 L1766.3,936.5 L1767.0,977.8 L1767.7,925.9 L1768.3,945.9 L1769.0,966.1 L1769.7,956.7 L1770.3,930.2 L1771.0,950.3 L1771.6,908.1 L1772.3,970.2 L1773.0,903.0 L1773.6,903.5 L1774.3,937.3 L1775.0,927.6 L1775.6,962.2 L1776.3,959.6 L1776.9,916.2 L1777.6,935.6 L1778.3,966.8 L1778.9,925.2 L1779.6,925.2 L1780.3,931.5 L1780.9,949.7 L1781.6,973.0 L1782.3,976.1 L1782.9,972.4 L1783.6,937.1 L1784.2,972.1 L1784.9,939.9 L1785.6,970.9 L1786.2,944.6 L1786.9,956.6 L1787.6,979.7 L1788.2,954.3 L1788.9,952.4 L1789.5,988.1 L1790.2,981.5 L1790.9,977.3 L1791.5,968.1 L1792.2,966.1 L1792.9,969.3 L1793.5,976.9 L1794.2,986.7 L1794.8,988.0 L1795.5,969.4 L1796.2,991.8 L1796.8,976.6 L1797.5,943.1 L1798.2,953.9 L1798.8,922.4 L1799.5,935.0 L1800.1,903.4 L1800.8,889.9 L1801.5,914.6 L1802.1,914.3 L1802.8,858.6 L1803.5,883.1 L1804.1,839.0 L1804.8,832.8 L1805.4,931.2 L1806.1,825.6 L1806.8,883.1 L1807.4,887.0 L1808.1,819.6 L1808.8,862.7 L1809.4,825.9 L1810.1,824.0 L1810.7,841.9 L1811.4,905.7 L1812.1,852.1 L1812.7,932.2 L1813.4,901.8 L1814.1,831.4 L1814.7,914.9 L1815.4,829.4 L1816.0,917.6 L1816.7,809.1 L1817.4,808.7 L1818.0,861.4 L1818.7,851.8 L1819.4,837.5 L1820.0,818.0 L1820.7,845.0 L1821.4,852.7 L1822.0,821.4 L1822.7,933.6 L1823.3,905.4 L1824.0,919.9 L1824.7,832.3 L1825.3,830.1 L1826.0,837.1 L1826.7,942.6 L1827.3,841.0 L1828.0,900.3 L1828.6,846.0 L1829.3,944.3 L1830.0,942.2 L1830.6,923.8 L1831.3,930.5 L1832.0,856.0 L1832.6,870.4 L1833.3,891.6 L1833.9,865.5 L1834.6,887.0 L1835.3,941.1 L1835.9,902.6 L1836.6,952.8 L1837.3,913.4 L1837.9,929.2 L1838.6,951.1 L1839.2,960.8 L1839.9,987.0 L1840.6,984.7 L1841.2,979.9 L1841.9,980.6 L1842.6,998.6 L1843.2,995.7 L1843.9,984.0 L1844.5,985.7 L1845.2,1000.0 L1845.9,996.1 L1846.5,1003.3 L1847.2,990.7 L1847.9,992.1 L1848.5,993.4 L1849.2,994.8 L1849.8,996.2 L1850.5,997.5 L1851.2,998.6 L1851.8,999.6 L1852.5,1000.7 L1853.2,1001.8 L1853.8,1002.8 L1854.5,1003.9 L1855.1,1005.0 L1855.8,1006.0 L1856.5,1007.1 L1857.1,1008.2 L1857.8,1009.2 L1858.5,1010.0 L1859.1,1010.7 L1859.8,1011.3 L1860.5,1011.9 L1861.1,1012.6 L1861.8,1013.2 L1862.4,1013.8 L1863.1,1014.5 L1863.8,1015.1 L1864.4,1015.1 L1865.1,1015.1 L1865.8,1015.1 L1866.4,1015.1 L1867.1,1015.1 L1867.7,1015.1 L1868.4,1015.1 L1869.1,1015.1 L1869.7,1015.1 L1870.4,1015.1 L1871.1,1015.1 L1871.7,1015.1 L1872.4,1015.1 L1873.0,1015.1 L1873.7,1015.1 L1874.4,1015.1 L1875.0,1015.1 L1875.7,1015.1 L1876.4,1015.1 L1877.0,1015.1 L1877.7,1015.1 L1878.3,1015.1 L1879.0,1015.1 L1879.7,1015.1 L1880.3,1015.1 L1881.0,1015.1 L1881.7,1015.1 L1882.3,1015.1 L1883.0,1015.1 L1883.6,1015.1 L1884.3,1015.1 L1885.0,1015.1 L1885.6,1015.1 L1886.3,1015.1 L1887.0,1015.1 L1887.6,1015.1 L1888.3,1015.1 L1888.9,1015.1 L1889.6,1015.1 L1890.3,1015.1 L1890.9,1015.1 L1891.6,1015.1 L1892.3,1015.1 L1892.9,1015.1 L1893.6,1015.1 L1894.2,1015.1 L1894.9,1015.1 L1895.6,1015.1 L1896.2,1015.1 L1896.9,1015.1 L1897.6,1015.1 L1898.2,1015.1 L1898.9,1015.1 L1899.6,1015.1 L1900.2,1015.1 L1900.9,1015.1 L1901.5,1015.1 L1902.2,1015.1 L1902.9,1015.1 L1903.5,1015.1 L1904.2,1015.1 L1904.9,1015.1 L1905.5,1015.1" fill="none" stroke="#d4af37" stroke-width="2" stroke-linejoin="round"/>
<path d="M1905.8,1015.1 L1908.0,1014.9 L1910.2,1014.7 L1912.4,1014.5 L1914.7,1014.3 L1916.9,1014.1 L1919.1,1013.9 L1921.3,1013.7 L1923.6,1013.5 L1925.8,1013.3 L1928.0,1013.1 L1930.2,1012.9 L1932.5,1012.8 L1934.7,1012.6 L1936.9,1012.4 L1939.1,1012.2 L1941.3,1012.0 L1943.6,1011.9 L1945.8,1011.7 L1948.0,1011.5 L1950.2,1011.3 L1952.5,1011.1 L1954.7,1011.0 L1956.9,1010.8 L1959.1,1010.6 L1961.3,1010.4 L1963.6,1010.2 L1965.8,1010.1 L1968.0,1009.9 L1970.2,1009.7 L1972.5,1008.8 L1974.7,1007.7 L1976.9,1006.6 L1979.1,1005.5 L1981.4,1004.5 L1983.6,1003.4 L1985.8,1002.3 L1988.0,1001.2 L1990.2,1000.1 L1992.5,999.0 L1994.7,997.6 L1996.9,996.3 L1999.1,995.0 L2001.4,993.7 L2003.6,992.3 L2005.8,991.0 L2008.0,989.9 L2010.2,991.6 L2012.5,993.3 L2014.7,995.1 L2016.9,996.8 L2019.1,998.5 L2021.4,1000.2 L2023.6,1001.7 L2025.8,1003.2 L2028.0,1004.7 L2030.3,1006.2 L2032.5,1007.7 L2034.7,1009.2 L2036.9,1010.7 L2039.1,1012.2 L2041.4,1012.8 L2043.6,1013.2 L2045.8,1013.7 L2048.0,1014.1 L2050.3,1014.6 L2052.5,1015.1 L2054.7,1015.1 L2056.9,1015.1 L2059.1,1015.1 L2061.4,1015.1 L2063.6,1015.1 L2065.8,1015.1 L2068.0,1015.1 L2070.3,1015.1 L2072.5,1015.1 L2074.7,1015.1 L2076.9,1015.1 L2079.2,1015.1 L2081.4,1015.1" fill="none" stroke="#d4af37" stroke-width="2" stroke-dasharray="11,8"/>
<path d="M560.2,728.9 V1274.0 H2087.1 M560.2,1274.0 h16 M560.2,1205.9 h16 M560.2,1137.8 h16 M560.2,1069.6 h16 M560.2,1001.5 h16 M560.2,933.3 h16 M560.2,865.2 h16 M560.2,797.1 h16 M560.2,728.9 h16 M751.1,1274.0 v-15.5 M941.9,1274.0 v-15.5 M1132.8,1274.0 v-15.5 M1323.7,1274.0 v-15.5 M1514.5,1274.0 v-15.5 M1705.4,1274.0 v-15.5 M1896.2,1274.0 v-15.5 M2087.1,1274.0 v-15.5" stroke="#7c7c7c" stroke-width="1.7" fill="none"/>
<g font-family="Liberation Sans, sans-serif" font-size="18.5" fill="#2e2e2e">
<text x="552.5" y="1280.6" text-anchor="end">-500</text>
<text x="552.5" y="1212.5" text-anchor="end">0</text>
<text x="552.5" y="1144.4" text-anchor="end">500</text>
<text x="552.5" y="1076.2" text-anchor="end">1000</text>
<text x="552.5" y="1008.1" text-anchor="end">1500</text>
<text x="552.5" y="939.9" text-anchor="end">2000</text>
<text x="552.5" y="871.8" text-anchor="end">2500</text>
<text x="552.5" y="803.7" text-anchor="end">3000</text>
<text x="552.5" y="735.5" text-anchor="end">3500</text>
<text x="560.2" y="1299.8" text-anchor="middle">Jun 26</text>
<text x="751.1" y="1299.8" text-anchor="middle">Jun 27</text>
<text x="941.9" y="1299.8" text-anchor="middle">Jun 28</text>
<text x="1132.8" y="1299.8" text-anchor="middle">Jun 29</text>
<text x="1323.7" y="1299.8" text-anchor="middle">Jun 30</text>
<text x="1514.5" y="1299.8" text-anchor="middle">Jul 01</text>
<text x="1705.4" y="1299.8" text-anchor="middle">Jul 02</text>
<text x="1896.2" y="1299.8" text-anchor="middle">Jul 03</text>
<text x="2087.1" y="1299.8" text-anchor="middle">Jul 04</text>
<text x="2051.5" y="1324.6" text-anchor="middle">2024</text>
<text transform="translate(502,1001.5) rotate(-90)" text-anchor="middle" font-size="20">Stroom [kW]</text>
</g>
</svg>
<div class="t" style="left:1772.00px;top:740.75px;font-size:16.60px;line-height:16.60px;letter-spacing:-0.403px;font-weight:700;color:#696969;">Vandaag</div>
<div class="t" style="left:1959.10px;top:740.75px;font-size:16.60px;line-height:16.60px;letter-spacing:-0.328px;font-weight:700;color:#696969;">Morgen</div>
<div class="abs" style="left:2135.8px;top:728px;width:430.4px;height:230px;box-sizing:border-box;border:1.6px solid #ececf0;background:#fff;"></div>
<div class="abs" style="left:2137.4px;top:729.6px;width:427.2px;height:29.5px;background:#fafafb;"></div>
<div class="hl" style="top:758.3px;"></div>
<div class="hl" style="top:786.9px;"></div>
<div class="hl" style="top:815.4px;"></div>
<div class="hl" style="top:844.2px;"></div>
<div class="hl" style="top:872.2px;"></div>
<div class="hl" style="top:900.8px;"></div>
<div class="hl" style="top:928.9px;"></div>
<div class="t" style="left:2164.10px;top:736.02px;font-size:16.40px;line-height:16.40px;letter-spacing:0.664px;color:#7c84a3;">Naam</div>
<div class="t" style="left:2361.48px;top:736.02px;font-size:16.40px;line-height:16.40px;letter-spacing:0.040px;color:#7c84a3;">Actueel</div>
<div class="t" style="left:2508.14px;top:736.02px;font-size:16.40px;line-height:16.40px;letter-spacing:0.648px;color:#7c84a3;">Max</div>
<svg class="abs" style="left:2211.5px;top:740.5px" width="8" height="12" viewBox="0 0 8 12"><path d="M1.2,4.6 L4,1.6 L6.8,4.6 Z M1.2,7.4 L4,10.4 L6.8,7.4 Z" fill="#7c84a3"/></svg>
<svg class="abs" style="left:2418.5px;top:740.5px" width="8" height="12" viewBox="0 0 8 12"><path d="M1.2,4.6 L4,1.6 L6.8,4.6 Z M1.2,7.4 L4,10.4 L6.8,7.4 Z" fill="#7c84a3"/></svg>
<svg class="abs" style="left:2541.7px;top:740.5px" width="8" height="12" viewBox="0 0 8 12"><path d="M1.2,4.6 L4,1.6 L6.8,4.6 Z M1.2,7.4 L4,10.4 L6.8,7.4 Z" fill="#7c84a3"/></svg>
<div class="sw" style="top:771.1px;background:#a3112e;"></div>
<div class="t" style="left:2164.10px;top:766.05px;font-size:16.60px;line-height:16.60px;letter-spacing:0.235px;color:#49547a;">Netaansluiting</div>
<div class="t" style="left:2370.84px;top:766.05px;font-size:16.60px;line-height:16.60px;letter-spacing:-0.244px;color:#49547a;">1400kW</div>
<div class="t" style="left:2486.86px;top:766.05px;font-size:16.60px;line-height:16.60px;letter-spacing:-0.244px;color:#49547a;">1400kW</div>
<div class="sw" style="top:799.9px;background:#d4b03c;"></div>
<div class="t" style="left:2164.10px;top:794.85px;font-size:16.60px;line-height:16.60px;letter-spacing:-0.133px;color:#49547a;">Opwek zonnepanelen</div>
<div class="t" style="left:2370.84px;top:794.85px;font-size:16.60px;line-height:16.60px;letter-spacing:-0.244px;color:#49547a;">2100kW</div>
<div class="t" style="left:2486.86px;top:794.85px;font-size:16.60px;line-height:16.60px;letter-spacing:-0.244px;color:#49547a;">3500kW</div>
<div class="sw" style="top:828.0px;background:#8d7cff;"></div>
<div class="t" style="left:2164.10px;top:822.95px;font-size:16.60px;line-height:16.60px;letter-spacing:-0.020px;color:#49547a;">Koelvermogen</div>
<div class="t" style="left:2379.30px;top:822.95px;font-size:16.60px;line-height:16.60px;letter-spacing:-0.112px;color:#49547a;">201kW</div>
<div class="t" style="left:2495.32px;top:822.95px;font-size:16.60px;line-height:16.60px;letter-spacing:-0.112px;color:#49547a;">300kW</div>
<div class="sw" style="top:856.5px;background:#8c9df0;"></div>
<div class="t" style="left:2165.00px;top:851.45px;font-size:16.60px;line-height:16.60px;letter-spacing:0.064px;color:#49547a;">Verwarmingsvermogen</div>
<div class="t" style="left:2397.12px;top:851.45px;font-size:16.60px;line-height:16.60px;letter-spacing:0.100px;color:#49547a;">5kW</div>
<div class="t" style="left:2496.22px;top:851.45px;font-size:16.60px;line-height:16.60px;letter-spacing:-0.337px;color:#49547a;">400kW</div>
<div class="sw" style="top:885.3px;background:#7db9dc;"></div>
<div class="t" style="left:2165.00px;top:880.25px;font-size:16.60px;line-height:16.60px;letter-spacing:0.181px;color:#49547a;">Verlichting</div>
<div class="t" style="left:2379.30px;top:880.25px;font-size:16.60px;line-height:16.60px;letter-spacing:-0.112px;color:#49547a;">929kW</div>
<div class="t" style="left:2488.03px;top:880.25px;font-size:16.60px;line-height:16.60px;letter-spacing:-0.231px;color:#49547a;">1100kW</div>
<div class="sw" style="top:912.9px;background:#7fdcc4;"></div>
<div class="t" style="left:2164.10px;top:907.85px;font-size:16.60px;line-height:16.60px;letter-spacing:0.119px;color:#49547a;">Machines</div>
<div class="t" style="left:2388.66px;top:907.85px;font-size:16.60px;line-height:16.60px;letter-spacing:-0.191px;color:#49547a;">90kW</div>
<div class="t" style="left:2486.86px;top:907.85px;font-size:16.60px;line-height:16.60px;letter-spacing:-0.244px;color:#49547a;">1400kW</div>
<div class="sw" style="top:941.9px;background:#7efab6;"></div>
<div class="t" style="left:2164.10px;top:936.85px;font-size:16.60px;line-height:16.60px;letter-spacing:0.036px;color:#49547a;">Elektrische Trucks</div>
<div class="t" style="left:2379.30px;top:936.85px;font-size:16.60px;line-height:16.60px;letter-spacing:-0.112px;color:#49547a;">151kW</div>
<div class="t" style="left:2495.32px;top:936.85px;font-size:16.60px;line-height:16.60px;letter-spacing:-0.112px;color:#49547a;">600kW</div>
</body></html>
